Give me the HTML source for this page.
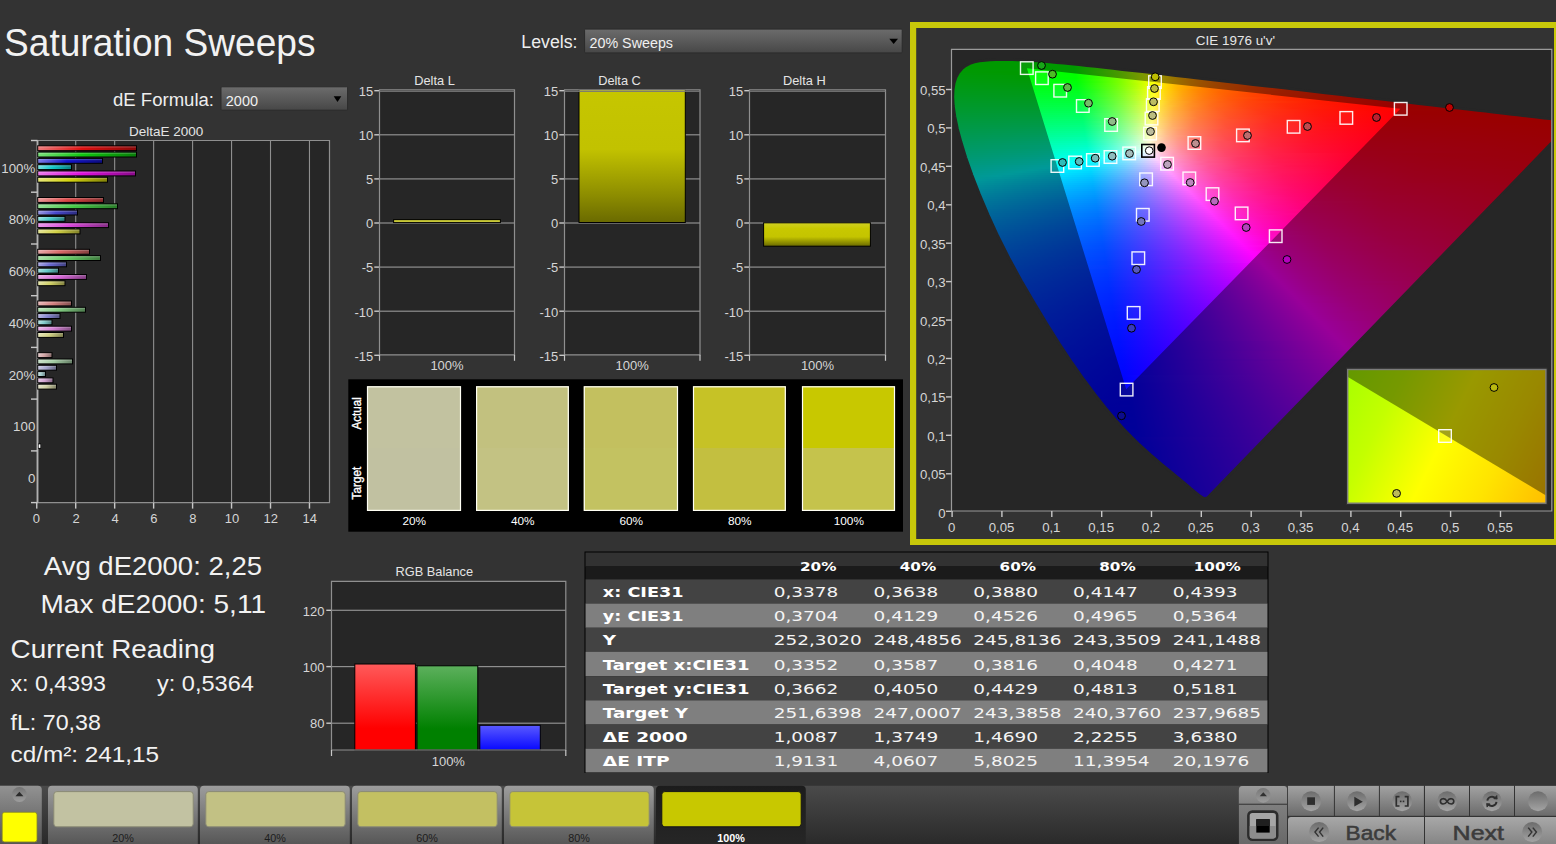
<!DOCTYPE html>
<html lang="en"><head><meta charset="utf-8"><title>Saturation Sweeps</title>
<style>
html,body{margin:0;padding:0;background:#333;overflow:hidden}
body{width:1556px;height:844px;position:relative;font-family:'Liberation Sans',sans-serif}
svg{position:absolute;left:0;top:0;display:block;font-family:'Liberation Sans',sans-serif}
text{white-space:pre}
</style></head><body>
<svg width="1556" height="844" viewBox="0 0 1556 844">
<defs><linearGradient id="dd" x1="0" y1="0" x2="0" y2="1"><stop offset="0" stop-color="#6c6c6c"/><stop offset="1" stop-color="#474747"/></linearGradient></defs>
<rect width="1556" height="844" fill="#333"/>
<text x="4.0" y="55.5" font-size="39" fill="#f2f2f2" textLength="311.5" lengthAdjust="spacingAndGlyphs">Saturation Sweeps</text>
<text x="113.0" y="106.0" font-size="18" fill="#eee" textLength="101.0" lengthAdjust="spacingAndGlyphs">dE Formula:</text>
<text x="521.3" y="48.0" font-size="18" fill="#eee" textLength="56.2" lengthAdjust="spacingAndGlyphs">Levels:</text>
<rect x="221" y="86.8" width="126.6" height="23.4" rx="1" fill="url(#dd)" stroke="#2b2b2b" stroke-width="1"/>
<text x="225.8" y="106.0" font-size="14.7" fill="#f0f0f0" textLength="32.2" lengthAdjust="spacingAndGlyphs">2000</text>
<path d="M333.7 96.2h7.6l-3.8 5.8z" fill="#000"/>
<rect x="584.6" y="29.1" width="317.6" height="23.8" rx="1" fill="url(#dd)" stroke="#2b2b2b" stroke-width="1"/>
<text x="589.5" y="48.0" font-size="14.7" fill="#f0f0f0" textLength="83.5" lengthAdjust="spacingAndGlyphs">20% Sweeps</text>
<path d="M889.3 38.8h8.7l-4.35 5.2z" fill="#000"/>
<rect x="37.5" y="140.5" width="292" height="362.1" fill="#262626"/>
<rect x="75.16" y="140.5" width="1.1" height="362.1" fill="#8f8f8f"/>
<rect x="114.12" y="140.5" width="1.1" height="362.1" fill="#8f8f8f"/>
<rect x="153.08" y="140.5" width="1.1" height="362.1" fill="#8f8f8f"/>
<rect x="192.04" y="140.5" width="1.1" height="362.1" fill="#8f8f8f"/>
<rect x="231.00" y="140.5" width="1.1" height="362.1" fill="#8f8f8f"/>
<rect x="269.96" y="140.5" width="1.1" height="362.1" fill="#8f8f8f"/>
<rect x="308.92" y="140.5" width="1.1" height="362.1" fill="#8f8f8f"/>
<path d="M37.5 140.5H329.5V502.6H37.5Z" fill="none" stroke="#8f8f8f" stroke-width="1.2"/>
<rect x="36.6" y="140.5" width="1.8" height="362.1" fill="#b0b0b0"/>
<rect x="31" y="139.8" width="6.5" height="1.4" fill="#c8c8c8"/>
<rect x="31" y="191.5" width="6.5" height="1.4" fill="#c8c8c8"/>
<rect x="31" y="243.3" width="6.5" height="1.4" fill="#c8c8c8"/>
<rect x="31" y="295.0" width="6.5" height="1.4" fill="#c8c8c8"/>
<rect x="31" y="346.7" width="6.5" height="1.4" fill="#c8c8c8"/>
<rect x="31" y="398.4" width="6.5" height="1.4" fill="#c8c8c8"/>
<rect x="31" y="450.2" width="6.5" height="1.4" fill="#c8c8c8"/>
<rect x="31" y="501.9" width="6.5" height="1.4" fill="#c8c8c8"/>
<rect x="36.05" y="502.6" width="1.4" height="6" fill="#c8c8c8"/>
<text x="36.4" y="523.3" font-size="13" fill="#d6d6d6" text-anchor="middle">0</text>
<rect x="75.01" y="502.6" width="1.4" height="6" fill="#c8c8c8"/>
<text x="76.0" y="523.3" font-size="13" fill="#d6d6d6" text-anchor="middle">2</text>
<rect x="113.97" y="502.6" width="1.4" height="6" fill="#c8c8c8"/>
<text x="115.0" y="523.3" font-size="13" fill="#d6d6d6" text-anchor="middle">4</text>
<rect x="152.93" y="502.6" width="1.4" height="6" fill="#c8c8c8"/>
<text x="153.9" y="523.3" font-size="13" fill="#d6d6d6" text-anchor="middle">6</text>
<rect x="191.89" y="502.6" width="1.4" height="6" fill="#c8c8c8"/>
<text x="192.9" y="523.3" font-size="13" fill="#d6d6d6" text-anchor="middle">8</text>
<rect x="230.85" y="502.6" width="1.4" height="6" fill="#c8c8c8"/>
<text x="231.9" y="523.3" font-size="13" fill="#d6d6d6" text-anchor="middle">10</text>
<rect x="269.81" y="502.6" width="1.4" height="6" fill="#c8c8c8"/>
<text x="270.8" y="523.3" font-size="13" fill="#d6d6d6" text-anchor="middle">12</text>
<rect x="308.77" y="502.6" width="1.4" height="6" fill="#c8c8c8"/>
<text x="309.8" y="523.3" font-size="13" fill="#d6d6d6" text-anchor="middle">14</text>
<text x="35.3" y="172.6" font-size="13.3" fill="#d6d6d6" text-anchor="end">100%</text>
<text x="35.3" y="224.3" font-size="13.3" fill="#d6d6d6" text-anchor="end">80%</text>
<text x="35.3" y="276.1" font-size="13.3" fill="#d6d6d6" text-anchor="end">60%</text>
<text x="35.3" y="327.8" font-size="13.3" fill="#d6d6d6" text-anchor="end">40%</text>
<text x="35.3" y="379.5" font-size="13.3" fill="#d6d6d6" text-anchor="end">20%</text>
<text x="35.3" y="431.2" font-size="13.3" fill="#d6d6d6" text-anchor="end">100</text>
<text x="35.3" y="483.0" font-size="13.3" fill="#d6d6d6" text-anchor="end">0</text>
<text x="129.0" y="136.2" font-size="12.8" fill="#e4e4e4" textLength="74.3" lengthAdjust="spacingAndGlyphs">DeltaE 2000</text>
<linearGradient id="b00" x1="0" x2="1"><stop offset="0" stop-color="#ec7b7b"/><stop offset=".45" stop-color="#de1010"/><stop offset="1" stop-color="#890909"/></linearGradient>
<rect x="37.7" y="145.8" width="98.8" height="4.9" fill="url(#b00)" stroke="#000" stroke-width="1"/>
<rect x="38.2" y="146.3" width="97.8" height="1.3" fill="#fff" opacity=".2"/>
<linearGradient id="b01" x1="0" x2="1"><stop offset="0" stop-color="#7be07b"/><stop offset=".45" stop-color="#10c810"/><stop offset="1" stop-color="#097c09"/></linearGradient>
<rect x="37.7" y="152.1" width="98.8" height="4.9" fill="url(#b01)" stroke="#000" stroke-width="1"/>
<rect x="38.2" y="152.6" width="97.8" height="1.3" fill="#fff" opacity=".2"/>
<linearGradient id="b02" x1="0" x2="1"><stop offset="0" stop-color="#7d7de3"/><stop offset=".45" stop-color="#1414cd"/><stop offset="1" stop-color="#0c0c7f"/></linearGradient>
<rect x="37.7" y="158.4" width="64.8" height="4.9" fill="url(#b02)" stroke="#000" stroke-width="1"/>
<rect x="38.2" y="158.9" width="63.8" height="1.3" fill="#fff" opacity=".2"/>
<linearGradient id="b03" x1="0" x2="1"><stop offset="0" stop-color="#7be0e0"/><stop offset=".45" stop-color="#10c8c8"/><stop offset="1" stop-color="#097c7c"/></linearGradient>
<rect x="37.7" y="164.7" width="33.8" height="4.9" fill="url(#b03)" stroke="#000" stroke-width="1"/>
<rect x="38.2" y="165.2" width="32.8" height="1.3" fill="#fff" opacity=".2"/>
<linearGradient id="b04" x1="0" x2="1"><stop offset="0" stop-color="#ec7bec"/><stop offset=".45" stop-color="#de10de"/><stop offset="1" stop-color="#890989"/></linearGradient>
<rect x="37.7" y="171.0" width="97.8" height="4.9" fill="url(#b04)" stroke="#000" stroke-width="1"/>
<rect x="38.2" y="171.5" width="96.8" height="1.3" fill="#fff" opacity=".2"/>
<linearGradient id="b05" x1="0" x2="1"><stop offset="0" stop-color="#e7e77b"/><stop offset=".45" stop-color="#d4d410"/><stop offset="1" stop-color="#838309"/></linearGradient>
<rect x="37.7" y="177.3" width="69.8" height="4.9" fill="url(#b05)" stroke="#000" stroke-width="1"/>
<rect x="38.2" y="177.8" width="68.8" height="1.3" fill="#fff" opacity=".2"/>
<linearGradient id="b10" x1="0" x2="1"><stop offset="0" stop-color="#ea9898"/><stop offset=".45" stop-color="#d94545"/><stop offset="1" stop-color="#862a2a"/></linearGradient>
<rect x="37.7" y="197.5" width="65.8" height="4.9" fill="url(#b10)" stroke="#000" stroke-width="1"/>
<rect x="38.2" y="198.0" width="64.8" height="1.3" fill="#fff" opacity=".2"/>
<linearGradient id="b11" x1="0" x2="1"><stop offset="0" stop-color="#98e198"/><stop offset=".45" stop-color="#45c945"/><stop offset="1" stop-color="#2a7c2a"/></linearGradient>
<rect x="37.7" y="203.8" width="79.8" height="4.9" fill="url(#b11)" stroke="#000" stroke-width="1"/>
<rect x="38.2" y="204.3" width="78.8" height="1.3" fill="#fff" opacity=".2"/>
<linearGradient id="b12" x1="0" x2="1"><stop offset="0" stop-color="#9a9ae3"/><stop offset=".45" stop-color="#4848cd"/><stop offset="1" stop-color="#2c2c7f"/></linearGradient>
<rect x="37.7" y="210.1" width="39.8" height="4.9" fill="url(#b12)" stroke="#000" stroke-width="1"/>
<rect x="38.2" y="210.6" width="38.8" height="1.3" fill="#fff" opacity=".2"/>
<linearGradient id="b13" x1="0" x2="1"><stop offset="0" stop-color="#98e1e1"/><stop offset=".45" stop-color="#45c9c9"/><stop offset="1" stop-color="#2a7c7c"/></linearGradient>
<rect x="37.7" y="216.4" width="27.3" height="4.9" fill="url(#b13)" stroke="#000" stroke-width="1"/>
<rect x="38.2" y="216.9" width="26.3" height="1.3" fill="#fff" opacity=".2"/>
<linearGradient id="b14" x1="0" x2="1"><stop offset="0" stop-color="#ea98ea"/><stop offset=".45" stop-color="#d945d9"/><stop offset="1" stop-color="#862a86"/></linearGradient>
<rect x="37.7" y="222.7" width="70.8" height="4.9" fill="url(#b14)" stroke="#000" stroke-width="1"/>
<rect x="38.2" y="223.2" width="69.8" height="1.3" fill="#fff" opacity=".2"/>
<linearGradient id="b15" x1="0" x2="1"><stop offset="0" stop-color="#e6e698"/><stop offset=".45" stop-color="#d2d245"/><stop offset="1" stop-color="#82822a"/></linearGradient>
<rect x="37.7" y="229.0" width="42.3" height="4.9" fill="url(#b15)" stroke="#000" stroke-width="1"/>
<rect x="38.2" y="229.5" width="41.3" height="1.3" fill="#fff" opacity=".2"/>
<linearGradient id="b20" x1="0" x2="1"><stop offset="0" stop-color="#e8aaaa"/><stop offset=".45" stop-color="#d66565"/><stop offset="1" stop-color="#843e3e"/></linearGradient>
<rect x="37.7" y="249.3" width="51.8" height="4.9" fill="url(#b20)" stroke="#000" stroke-width="1"/>
<rect x="38.2" y="249.8" width="50.8" height="1.3" fill="#fff" opacity=".2"/>
<linearGradient id="b21" x1="0" x2="1"><stop offset="0" stop-color="#aae1aa"/><stop offset=".45" stop-color="#65ca65"/><stop offset="1" stop-color="#3e7d3e"/></linearGradient>
<rect x="37.7" y="255.6" width="62.8" height="4.9" fill="url(#b21)" stroke="#000" stroke-width="1"/>
<rect x="38.2" y="256.1" width="61.8" height="1.3" fill="#fff" opacity=".2"/>
<linearGradient id="b22" x1="0" x2="1"><stop offset="0" stop-color="#ababe3"/><stop offset=".45" stop-color="#6767cd"/><stop offset="1" stop-color="#3f3f7f"/></linearGradient>
<rect x="37.7" y="261.9" width="28.8" height="4.9" fill="url(#b22)" stroke="#000" stroke-width="1"/>
<rect x="38.2" y="262.4" width="27.8" height="1.3" fill="#fff" opacity=".2"/>
<linearGradient id="b23" x1="0" x2="1"><stop offset="0" stop-color="#aae1e1"/><stop offset=".45" stop-color="#65caca"/><stop offset="1" stop-color="#3e7d7d"/></linearGradient>
<rect x="37.7" y="268.2" width="20.8" height="4.9" fill="url(#b23)" stroke="#000" stroke-width="1"/>
<rect x="38.2" y="268.7" width="19.8" height="1.3" fill="#fff" opacity=".2"/>
<linearGradient id="b24" x1="0" x2="1"><stop offset="0" stop-color="#e8aae8"/><stop offset=".45" stop-color="#d665d6"/><stop offset="1" stop-color="#843e84"/></linearGradient>
<rect x="37.7" y="274.5" width="48.8" height="4.9" fill="url(#b24)" stroke="#000" stroke-width="1"/>
<rect x="38.2" y="275.0" width="47.8" height="1.3" fill="#fff" opacity=".2"/>
<linearGradient id="b25" x1="0" x2="1"><stop offset="0" stop-color="#e5e5aa"/><stop offset=".45" stop-color="#d1d165"/><stop offset="1" stop-color="#81813e"/></linearGradient>
<rect x="37.7" y="280.8" width="27.3" height="4.9" fill="url(#b25)" stroke="#000" stroke-width="1"/>
<rect x="38.2" y="281.3" width="26.3" height="1.3" fill="#fff" opacity=".2"/>
<linearGradient id="b30" x1="0" x2="1"><stop offset="0" stop-color="#e7b9b9"/><stop offset=".45" stop-color="#d48181"/><stop offset="1" stop-color="#834f4f"/></linearGradient>
<rect x="37.7" y="301.0" width="33.8" height="4.9" fill="url(#b30)" stroke="#000" stroke-width="1"/>
<rect x="38.2" y="301.5" width="32.8" height="1.3" fill="#fff" opacity=".2"/>
<linearGradient id="b31" x1="0" x2="1"><stop offset="0" stop-color="#b9e2b9"/><stop offset=".45" stop-color="#81cb81"/><stop offset="1" stop-color="#4f7d4f"/></linearGradient>
<rect x="37.7" y="307.3" width="47.8" height="4.9" fill="url(#b31)" stroke="#000" stroke-width="1"/>
<rect x="38.2" y="307.8" width="46.8" height="1.3" fill="#fff" opacity=".2"/>
<linearGradient id="b32" x1="0" x2="1"><stop offset="0" stop-color="#babae3"/><stop offset=".45" stop-color="#8383cd"/><stop offset="1" stop-color="#51517f"/></linearGradient>
<rect x="37.7" y="313.6" width="22.3" height="4.9" fill="url(#b32)" stroke="#000" stroke-width="1"/>
<rect x="38.2" y="314.1" width="21.3" height="1.3" fill="#fff" opacity=".2"/>
<linearGradient id="b33" x1="0" x2="1"><stop offset="0" stop-color="#b9e2e2"/><stop offset=".45" stop-color="#81cbcb"/><stop offset="1" stop-color="#4f7d7d"/></linearGradient>
<rect x="37.7" y="319.9" width="14.3" height="4.9" fill="url(#b33)" stroke="#000" stroke-width="1"/>
<rect x="38.2" y="320.4" width="13.3" height="1.3" fill="#fff" opacity=".2"/>
<linearGradient id="b34" x1="0" x2="1"><stop offset="0" stop-color="#e7b9e7"/><stop offset=".45" stop-color="#d481d4"/><stop offset="1" stop-color="#834f83"/></linearGradient>
<rect x="37.7" y="326.2" width="33.8" height="4.9" fill="url(#b34)" stroke="#000" stroke-width="1"/>
<rect x="38.2" y="326.7" width="32.8" height="1.3" fill="#fff" opacity=".2"/>
<linearGradient id="b35" x1="0" x2="1"><stop offset="0" stop-color="#e5e5b9"/><stop offset=".45" stop-color="#d0d081"/><stop offset="1" stop-color="#80804f"/></linearGradient>
<rect x="37.7" y="332.5" width="25.8" height="4.9" fill="url(#b35)" stroke="#000" stroke-width="1"/>
<rect x="38.2" y="333.0" width="24.8" height="1.3" fill="#fff" opacity=".2"/>
<linearGradient id="b40" x1="0" x2="1"><stop offset="0" stop-color="#e5cccc"/><stop offset=".45" stop-color="#d1a3a3"/><stop offset="1" stop-color="#816565"/></linearGradient>
<rect x="37.7" y="352.7" width="14.3" height="4.9" fill="url(#b40)" stroke="#000" stroke-width="1"/>
<rect x="38.2" y="353.2" width="13.3" height="1.3" fill="#fff" opacity=".2"/>
<linearGradient id="b41" x1="0" x2="1"><stop offset="0" stop-color="#cce2cc"/><stop offset=".45" stop-color="#a3cca3"/><stop offset="1" stop-color="#657e65"/></linearGradient>
<rect x="37.7" y="359.0" width="34.8" height="4.9" fill="url(#b41)" stroke="#000" stroke-width="1"/>
<rect x="38.2" y="359.5" width="33.8" height="1.3" fill="#fff" opacity=".2"/>
<linearGradient id="b42" x1="0" x2="1"><stop offset="0" stop-color="#cccce3"/><stop offset=".45" stop-color="#a4a4cd"/><stop offset="1" stop-color="#65657f"/></linearGradient>
<rect x="37.7" y="365.3" width="18.8" height="4.9" fill="url(#b42)" stroke="#000" stroke-width="1"/>
<rect x="38.2" y="365.8" width="17.8" height="1.3" fill="#fff" opacity=".2"/>
<linearGradient id="b43" x1="0" x2="1"><stop offset="0" stop-color="#cce2e2"/><stop offset=".45" stop-color="#a3cccc"/><stop offset="1" stop-color="#657e7e"/></linearGradient>
<rect x="37.7" y="371.6" width="7.8" height="4.9" fill="url(#b43)" stroke="#000" stroke-width="1"/>
<rect x="38.2" y="372.1" width="6.8" height="1.3" fill="#fff" opacity=".2"/>
<linearGradient id="b44" x1="0" x2="1"><stop offset="0" stop-color="#e5cce5"/><stop offset=".45" stop-color="#d1a3d1"/><stop offset="1" stop-color="#816581"/></linearGradient>
<rect x="37.7" y="377.9" width="15.3" height="4.9" fill="url(#b44)" stroke="#000" stroke-width="1"/>
<rect x="38.2" y="378.4" width="14.3" height="1.3" fill="#fff" opacity=".2"/>
<linearGradient id="b45" x1="0" x2="1"><stop offset="0" stop-color="#e4e4cc"/><stop offset=".45" stop-color="#cfcfa3"/><stop offset="1" stop-color="#808065"/></linearGradient>
<rect x="37.7" y="384.2" width="18.8" height="4.9" fill="url(#b45)" stroke="#000" stroke-width="1"/>
<rect x="38.2" y="384.7" width="17.8" height="1.3" fill="#fff" opacity=".2"/>
<rect x="38" y="443.6" width="3" height="5" fill="#000"/><rect x="38.6" y="444.3" width="1.8" height="3.6" fill="#fff"/>
<text x="43.8" y="574.5" font-size="26.2" fill="#f2f2f2" textLength="218.2" lengthAdjust="spacingAndGlyphs">Avg dE2000: 2,25</text>
<text x="40.5" y="612.5" font-size="26.2" fill="#f2f2f2" textLength="225.5" lengthAdjust="spacingAndGlyphs">Max dE2000: 5,11</text>
<text x="10.5" y="657.5" font-size="26.5" fill="#f2f2f2" textLength="204.5" lengthAdjust="spacingAndGlyphs">Current Reading</text>
<text x="10.5" y="691.0" font-size="21.6" fill="#f2f2f2" textLength="95.5" lengthAdjust="spacingAndGlyphs">x: 0,4393</text>
<text x="157.0" y="691.0" font-size="21.6" fill="#f2f2f2" textLength="96.8" lengthAdjust="spacingAndGlyphs">y: 0,5364</text>
<text x="10.5" y="729.8" font-size="21.6" fill="#f2f2f2" textLength="90.3" lengthAdjust="spacingAndGlyphs">fL: 70,38</text>
<text x="10.5" y="761.8" font-size="21.6" fill="#f2f2f2" textLength="148.5" lengthAdjust="spacingAndGlyphs">cd/m²: 241,15</text>
<linearGradient id="yc" x1="0" y1="0" x2="0" y2="1"><stop offset="0" stop-color="#c6c600"/><stop offset=".45" stop-color="#c2c200"/><stop offset=".8" stop-color="#8c8c00"/><stop offset="1" stop-color="#6a6a00"/></linearGradient>
<linearGradient id="yh" x1="0" y1="0" x2="0" y2="1"><stop offset="0" stop-color="#d0d024"/><stop offset=".25" stop-color="#c8c800"/><stop offset=".6" stop-color="#c4c400"/><stop offset="1" stop-color="#6a6a00"/></linearGradient>
<rect x="379.5" y="89.5" width="135" height="265.3" fill="#262626"/>
<rect x="374.3" y="90.0" width="5.5" height="1.4" fill="#c8c8c8"/>
<text x="373.2" y="96.0" font-size="13" fill="#d6d6d6" text-anchor="end">15</text>
<rect x="379.5" y="134.2" width="135" height="1.2" fill="#8f8f8f"/>
<rect x="374.3" y="134.1" width="5.5" height="1.4" fill="#c8c8c8"/>
<text x="373.2" y="140.1" font-size="13" fill="#d6d6d6" text-anchor="end">10</text>
<rect x="379.5" y="178.3" width="135" height="1.2" fill="#8f8f8f"/>
<rect x="374.3" y="178.2" width="5.5" height="1.4" fill="#c8c8c8"/>
<text x="373.2" y="184.2" font-size="13" fill="#d6d6d6" text-anchor="end">5</text>
<rect x="379.5" y="222.4" width="135" height="1.2" fill="#8f8f8f"/>
<rect x="374.3" y="222.3" width="5.5" height="1.4" fill="#c8c8c8"/>
<text x="373.2" y="228.3" font-size="13" fill="#d6d6d6" text-anchor="end">0</text>
<rect x="379.5" y="266.5" width="135" height="1.2" fill="#8f8f8f"/>
<rect x="374.3" y="266.4" width="5.5" height="1.4" fill="#c8c8c8"/>
<text x="373.2" y="272.4" font-size="13" fill="#d6d6d6" text-anchor="end">-5</text>
<rect x="379.5" y="310.6" width="135" height="1.2" fill="#8f8f8f"/>
<rect x="374.3" y="310.5" width="5.5" height="1.4" fill="#c8c8c8"/>
<text x="373.2" y="316.5" font-size="13" fill="#d6d6d6" text-anchor="end">-10</text>
<rect x="374.3" y="354.6" width="5.5" height="1.4" fill="#c8c8c8"/>
<text x="373.2" y="360.6" font-size="13" fill="#d6d6d6" text-anchor="end">-15</text>
<rect x="393.6" y="219.6" width="106.8" height="3" fill="#c8c838" stroke="#000" stroke-width="1"/>
<path d="M379.5 89.8H514.5V354.8H379.5Z" fill="none" stroke="#8f8f8f" stroke-width="1.2"/>
<rect x="379.5" y="90.9" width="135" height="1" fill="#777"/>
<rect x="378.9" y="354.8" width="1.2" height="6" fill="#c8c8c8"/>
<rect x="513.9" y="354.8" width="1.2" height="6" fill="#c8c8c8"/>
<text x="447.0" y="370.3" font-size="13" fill="#d6d6d6" text-anchor="middle">100%</text>
<text x="434.5" y="85.0" font-size="12.8" fill="#e4e4e4" text-anchor="middle">Delta L</text>
<rect x="564.5" y="89.5" width="135.5" height="265.3" fill="#262626"/>
<rect x="559.3" y="90.0" width="5.5" height="1.4" fill="#c8c8c8"/>
<text x="558.2" y="96.0" font-size="13" fill="#d6d6d6" text-anchor="end">15</text>
<rect x="564.5" y="134.2" width="135.5" height="1.2" fill="#8f8f8f"/>
<rect x="559.3" y="134.1" width="5.5" height="1.4" fill="#c8c8c8"/>
<text x="558.2" y="140.1" font-size="13" fill="#d6d6d6" text-anchor="end">10</text>
<rect x="564.5" y="178.3" width="135.5" height="1.2" fill="#8f8f8f"/>
<rect x="559.3" y="178.2" width="5.5" height="1.4" fill="#c8c8c8"/>
<text x="558.2" y="184.2" font-size="13" fill="#d6d6d6" text-anchor="end">5</text>
<rect x="564.5" y="222.4" width="135.5" height="1.2" fill="#8f8f8f"/>
<rect x="559.3" y="222.3" width="5.5" height="1.4" fill="#c8c8c8"/>
<text x="558.2" y="228.3" font-size="13" fill="#d6d6d6" text-anchor="end">0</text>
<rect x="564.5" y="266.5" width="135.5" height="1.2" fill="#8f8f8f"/>
<rect x="559.3" y="266.4" width="5.5" height="1.4" fill="#c8c8c8"/>
<text x="558.2" y="272.4" font-size="13" fill="#d6d6d6" text-anchor="end">-5</text>
<rect x="564.5" y="310.6" width="135.5" height="1.2" fill="#8f8f8f"/>
<rect x="559.3" y="310.5" width="5.5" height="1.4" fill="#c8c8c8"/>
<text x="558.2" y="316.5" font-size="13" fill="#d6d6d6" text-anchor="end">-10</text>
<rect x="559.3" y="354.6" width="5.5" height="1.4" fill="#c8c8c8"/>
<text x="558.2" y="360.6" font-size="13" fill="#d6d6d6" text-anchor="end">-15</text>
<rect x="579" y="89.5" width="106.3" height="133" fill="url(#yc)" stroke="#000" stroke-width="1"/>
<path d="M564.5 89.8H700V354.8H564.5Z" fill="none" stroke="#8f8f8f" stroke-width="1.2"/>
<rect x="564.5" y="90.9" width="135.5" height="1" fill="#777"/>
<rect x="563.9" y="354.8" width="1.2" height="6" fill="#c8c8c8"/>
<rect x="699.4" y="354.8" width="1.2" height="6" fill="#c8c8c8"/>
<text x="632.2" y="370.3" font-size="13" fill="#d6d6d6" text-anchor="middle">100%</text>
<text x="619.5" y="85.0" font-size="12.8" fill="#e4e4e4" text-anchor="middle">Delta C</text>
<rect x="749.5" y="89.5" width="136" height="265.3" fill="#262626"/>
<rect x="744.3" y="90.0" width="5.5" height="1.4" fill="#c8c8c8"/>
<text x="743.2" y="96.0" font-size="13" fill="#d6d6d6" text-anchor="end">15</text>
<rect x="749.5" y="134.2" width="136" height="1.2" fill="#8f8f8f"/>
<rect x="744.3" y="134.1" width="5.5" height="1.4" fill="#c8c8c8"/>
<text x="743.2" y="140.1" font-size="13" fill="#d6d6d6" text-anchor="end">10</text>
<rect x="749.5" y="178.3" width="136" height="1.2" fill="#8f8f8f"/>
<rect x="744.3" y="178.2" width="5.5" height="1.4" fill="#c8c8c8"/>
<text x="743.2" y="184.2" font-size="13" fill="#d6d6d6" text-anchor="end">5</text>
<rect x="749.5" y="222.4" width="136" height="1.2" fill="#8f8f8f"/>
<rect x="744.3" y="222.3" width="5.5" height="1.4" fill="#c8c8c8"/>
<text x="743.2" y="228.3" font-size="13" fill="#d6d6d6" text-anchor="end">0</text>
<rect x="749.5" y="266.5" width="136" height="1.2" fill="#8f8f8f"/>
<rect x="744.3" y="266.4" width="5.5" height="1.4" fill="#c8c8c8"/>
<text x="743.2" y="272.4" font-size="13" fill="#d6d6d6" text-anchor="end">-5</text>
<rect x="749.5" y="310.6" width="136" height="1.2" fill="#8f8f8f"/>
<rect x="744.3" y="310.5" width="5.5" height="1.4" fill="#c8c8c8"/>
<text x="743.2" y="316.5" font-size="13" fill="#d6d6d6" text-anchor="end">-10</text>
<rect x="744.3" y="354.6" width="5.5" height="1.4" fill="#c8c8c8"/>
<text x="743.2" y="360.6" font-size="13" fill="#d6d6d6" text-anchor="end">-15</text>
<rect x="763.6" y="222.8" width="106.8" height="23.4" fill="url(#yh)" stroke="#000" stroke-width="1"/>
<path d="M749.5 89.8H885.5V354.8H749.5Z" fill="none" stroke="#8f8f8f" stroke-width="1.2"/>
<rect x="749.5" y="90.9" width="136" height="1" fill="#777"/>
<rect x="748.9" y="354.8" width="1.2" height="6" fill="#c8c8c8"/>
<rect x="884.9" y="354.8" width="1.2" height="6" fill="#c8c8c8"/>
<text x="817.5" y="370.3" font-size="13" fill="#d6d6d6" text-anchor="middle">100%</text>
<text x="804.3" y="85.0" font-size="12.8" fill="#e4e4e4" text-anchor="middle">Delta H</text>
<rect x="348.3" y="379.3" width="554.7" height="152.4" fill="#000"/>
<rect x="367" y="386.3" width="94" height="62" fill="#c2c2a0"/>
<rect x="367" y="448" width="94" height="62.7" fill="#c1c1a1"/>
<rect x="367.5" y="386.8" width="93" height="123.6" fill="none" stroke="#fffff4" stroke-width="1.2"/>
<text x="414.3" y="525.0" font-size="11.8" fill="#fff" text-anchor="middle">20%</text>
<rect x="476.1" y="386.3" width="92.7" height="62" fill="#c2c17f"/>
<rect x="476.1" y="448" width="92.7" height="62.7" fill="#c3c283"/>
<rect x="476.6" y="386.8" width="91.7" height="123.6" fill="none" stroke="#fffff4" stroke-width="1.2"/>
<text x="522.8" y="525.0" font-size="11.8" fill="#fff" text-anchor="middle">40%</text>
<rect x="583.8" y="386.3" width="94.2" height="62" fill="#c3c05f"/>
<rect x="583.8" y="448" width="94.2" height="62.7" fill="#c3c261"/>
<rect x="584.3" y="386.8" width="93.2" height="123.6" fill="none" stroke="#fffff4" stroke-width="1.2"/>
<text x="631.2" y="525.0" font-size="11.8" fill="#fff" text-anchor="middle">60%</text>
<rect x="693" y="386.3" width="92.8" height="62" fill="#c6c226"/>
<rect x="693" y="448" width="92.8" height="62.7" fill="#c3bf40"/>
<rect x="693.5" y="386.8" width="91.8" height="123.6" fill="none" stroke="#fffff4" stroke-width="1.2"/>
<text x="739.7" y="525.0" font-size="11.8" fill="#fff" text-anchor="middle">80%</text>
<rect x="802" y="386.3" width="93" height="62" fill="#c8c800"/>
<rect x="802" y="448" width="93" height="62.7" fill="#c5c34c"/>
<rect x="802.5" y="386.8" width="92" height="123.6" fill="none" stroke="#fffff4" stroke-width="1.2"/>
<text x="848.8" y="525.0" font-size="11.8" fill="#fff" text-anchor="middle">100%</text>
<text x="0.0" y="0.0" font-size="12.3" fill="#fff" text-anchor="middle" textLength="32.3" lengthAdjust="spacingAndGlyphs" stroke="#fff" stroke-width=".35" transform="translate(361.2 413.3) rotate(-90)">Actual</text>
<text x="0.0" y="0.0" font-size="12.3" fill="#fff" text-anchor="middle" textLength="32.6" lengthAdjust="spacingAndGlyphs" stroke="#fff" stroke-width=".35" transform="translate(361.2 483.1) rotate(-90)">Target</text>
<rect x="331.5" y="581.3" width="234.3" height="168.7" fill="#262626"/>
<rect x="331.5" y="609.7" width="234.3" height="1.2" fill="#8f8f8f"/>
<rect x="326.3" y="609.6" width="5.5" height="1.4" fill="#c8c8c8"/>
<text x="324.5" y="615.5" font-size="13" fill="#d6d6d6" text-anchor="end">120</text>
<rect x="331.5" y="666.0" width="234.3" height="1.2" fill="#8f8f8f"/>
<rect x="326.3" y="665.9" width="5.5" height="1.4" fill="#c8c8c8"/>
<text x="324.5" y="671.8" font-size="13" fill="#d6d6d6" text-anchor="end">100</text>
<rect x="331.5" y="722.6" width="234.3" height="1.2" fill="#8f8f8f"/>
<rect x="326.3" y="722.5" width="5.5" height="1.4" fill="#c8c8c8"/>
<text x="324.5" y="728.4" font-size="13" fill="#d6d6d6" text-anchor="end">80</text>
<linearGradient id="rr" x1="0" y1="0" x2="0" y2="1"><stop offset="0" stop-color="#ff5a5a"/><stop offset=".75" stop-color="#ff0000"/></linearGradient>
<linearGradient id="rg" x1="0" y1="0" x2="0" y2="1"><stop offset="0" stop-color="#5cb05c"/><stop offset=".75" stop-color="#008000"/></linearGradient>
<linearGradient id="rb" x1="0" y1="0" x2="0" y2="1"><stop offset="0" stop-color="#5a5aff"/><stop offset="1" stop-color="#0808ff"/></linearGradient>
<rect x="354.8" y="664" width="60.6" height="86" fill="url(#rr)" stroke="#000" stroke-width="1"/>
<rect x="417" y="665.8" width="60.8" height="84.2" fill="url(#rg)" stroke="#000" stroke-width="1"/>
<rect x="479.8" y="725.3" width="60.5" height="24.7" fill="url(#rb)" stroke="#000" stroke-width="1"/>
<path d="M331.5 581.3H565.8V750H331.5Z" fill="none" stroke="#8f8f8f" stroke-width="1.2"/>
<rect x="330.9" y="750" width="1.2" height="6" fill="#c8c8c8"/>
<rect x="565.2" y="750" width="1.2" height="6" fill="#c8c8c8"/>
<text x="448.3" y="766.0" font-size="13" fill="#d6d6d6" text-anchor="middle">100%</text>
<text x="434.3" y="576.0" font-size="12.8" fill="#e4e4e4" text-anchor="middle">RGB Balance</text>
<rect x="584.5" y="551.5" width="684" height="221.5" fill="#000"/>
<rect x="585.5" y="552.5" width="682" height="14" fill="#323232"/>
<rect x="585.5" y="566" width="682" height="13.5" fill="#1b1b1b"/>
<text x="818.2" y="571.3" font-size="12.7" fill="#fff" text-anchor="middle" textLength="36.5" lengthAdjust="spacingAndGlyphs" font-family="'DejaVu Sans','Liberation Sans',sans-serif" font-weight="700">20%</text>
<text x="918.0" y="571.3" font-size="12.7" fill="#fff" text-anchor="middle" textLength="36.5" lengthAdjust="spacingAndGlyphs" font-family="'DejaVu Sans','Liberation Sans',sans-serif" font-weight="700">40%</text>
<text x="1017.8" y="571.3" font-size="12.7" fill="#fff" text-anchor="middle" textLength="36.5" lengthAdjust="spacingAndGlyphs" font-family="'DejaVu Sans','Liberation Sans',sans-serif" font-weight="700">60%</text>
<text x="1117.5" y="571.3" font-size="12.7" fill="#fff" text-anchor="middle" textLength="36.5" lengthAdjust="spacingAndGlyphs" font-family="'DejaVu Sans','Liberation Sans',sans-serif" font-weight="700">80%</text>
<text x="1217.3" y="571.3" font-size="12.7" fill="#fff" text-anchor="middle" textLength="47.1" lengthAdjust="spacingAndGlyphs" font-family="'DejaVu Sans','Liberation Sans',sans-serif" font-weight="700">100%</text>
<rect x="585.5" y="579.3" width="682" height="24.3" fill="#434343"/>
<text x="602.8" y="597.0" font-size="14.6" fill="#fff" textLength="80.8" lengthAdjust="spacingAndGlyphs" font-family="'DejaVu Sans','Liberation Sans',sans-serif" font-weight="700">x: CIE31</text>
<text x="773.7" y="597.0" font-size="14.5" fill="#f4f4f4" textLength="64.7" lengthAdjust="spacingAndGlyphs" font-family="'DejaVu Sans','Liberation Sans',sans-serif">0,3378</text>
<text x="873.5" y="597.0" font-size="14.5" fill="#f4f4f4" textLength="64.7" lengthAdjust="spacingAndGlyphs" font-family="'DejaVu Sans','Liberation Sans',sans-serif">0,3638</text>
<text x="973.3" y="597.0" font-size="14.5" fill="#f4f4f4" textLength="64.7" lengthAdjust="spacingAndGlyphs" font-family="'DejaVu Sans','Liberation Sans',sans-serif">0,3880</text>
<text x="1073.0" y="597.0" font-size="14.5" fill="#f4f4f4" textLength="64.7" lengthAdjust="spacingAndGlyphs" font-family="'DejaVu Sans','Liberation Sans',sans-serif">0,4147</text>
<text x="1172.8" y="597.0" font-size="14.5" fill="#f4f4f4" textLength="64.7" lengthAdjust="spacingAndGlyphs" font-family="'DejaVu Sans','Liberation Sans',sans-serif">0,4393</text>
<rect x="585.5" y="603.5" width="682" height="24.3" fill="#7f7f7f"/>
<text x="602.8" y="621.2" font-size="14.6" fill="#fff" textLength="80.8" lengthAdjust="spacingAndGlyphs" font-family="'DejaVu Sans','Liberation Sans',sans-serif" font-weight="700">y: CIE31</text>
<text x="773.7" y="621.2" font-size="14.5" fill="#f4f4f4" textLength="64.7" lengthAdjust="spacingAndGlyphs" font-family="'DejaVu Sans','Liberation Sans',sans-serif">0,3704</text>
<text x="873.5" y="621.2" font-size="14.5" fill="#f4f4f4" textLength="64.7" lengthAdjust="spacingAndGlyphs" font-family="'DejaVu Sans','Liberation Sans',sans-serif">0,4129</text>
<text x="973.3" y="621.2" font-size="14.5" fill="#f4f4f4" textLength="64.7" lengthAdjust="spacingAndGlyphs" font-family="'DejaVu Sans','Liberation Sans',sans-serif">0,4526</text>
<text x="1073.0" y="621.2" font-size="14.5" fill="#f4f4f4" textLength="64.7" lengthAdjust="spacingAndGlyphs" font-family="'DejaVu Sans','Liberation Sans',sans-serif">0,4965</text>
<text x="1172.8" y="621.2" font-size="14.5" fill="#f4f4f4" textLength="64.7" lengthAdjust="spacingAndGlyphs" font-family="'DejaVu Sans','Liberation Sans',sans-serif">0,5364</text>
<rect x="585.5" y="627.7" width="682" height="24.3" fill="#434343"/>
<text x="602.8" y="645.4" font-size="14.6" fill="#fff" textLength="13.3" lengthAdjust="spacingAndGlyphs" font-family="'DejaVu Sans','Liberation Sans',sans-serif" font-weight="700">Y</text>
<text x="773.7" y="645.4" font-size="14.5" fill="#f4f4f4" textLength="88.2" lengthAdjust="spacingAndGlyphs" font-family="'DejaVu Sans','Liberation Sans',sans-serif">252,3020</text>
<text x="873.5" y="645.4" font-size="14.5" fill="#f4f4f4" textLength="88.2" lengthAdjust="spacingAndGlyphs" font-family="'DejaVu Sans','Liberation Sans',sans-serif">248,4856</text>
<text x="973.3" y="645.4" font-size="14.5" fill="#f4f4f4" textLength="88.2" lengthAdjust="spacingAndGlyphs" font-family="'DejaVu Sans','Liberation Sans',sans-serif">245,8136</text>
<text x="1073.0" y="645.4" font-size="14.5" fill="#f4f4f4" textLength="88.2" lengthAdjust="spacingAndGlyphs" font-family="'DejaVu Sans','Liberation Sans',sans-serif">243,3509</text>
<text x="1172.8" y="645.4" font-size="14.5" fill="#f4f4f4" textLength="88.2" lengthAdjust="spacingAndGlyphs" font-family="'DejaVu Sans','Liberation Sans',sans-serif">241,1488</text>
<rect x="585.5" y="651.9" width="682" height="24.3" fill="#7f7f7f"/>
<text x="602.8" y="669.6" font-size="14.6" fill="#fff" textLength="146.8" lengthAdjust="spacingAndGlyphs" font-family="'DejaVu Sans','Liberation Sans',sans-serif" font-weight="700">Target x:CIE31</text>
<text x="773.7" y="669.6" font-size="14.5" fill="#f4f4f4" textLength="64.7" lengthAdjust="spacingAndGlyphs" font-family="'DejaVu Sans','Liberation Sans',sans-serif">0,3352</text>
<text x="873.5" y="669.6" font-size="14.5" fill="#f4f4f4" textLength="64.7" lengthAdjust="spacingAndGlyphs" font-family="'DejaVu Sans','Liberation Sans',sans-serif">0,3587</text>
<text x="973.3" y="669.6" font-size="14.5" fill="#f4f4f4" textLength="64.7" lengthAdjust="spacingAndGlyphs" font-family="'DejaVu Sans','Liberation Sans',sans-serif">0,3816</text>
<text x="1073.0" y="669.6" font-size="14.5" fill="#f4f4f4" textLength="64.7" lengthAdjust="spacingAndGlyphs" font-family="'DejaVu Sans','Liberation Sans',sans-serif">0,4048</text>
<text x="1172.8" y="669.6" font-size="14.5" fill="#f4f4f4" textLength="64.7" lengthAdjust="spacingAndGlyphs" font-family="'DejaVu Sans','Liberation Sans',sans-serif">0,4271</text>
<rect x="585.5" y="676.1" width="682" height="24.3" fill="#434343"/>
<text x="602.8" y="693.8" font-size="14.6" fill="#fff" textLength="146.8" lengthAdjust="spacingAndGlyphs" font-family="'DejaVu Sans','Liberation Sans',sans-serif" font-weight="700">Target y:CIE31</text>
<text x="773.7" y="693.8" font-size="14.5" fill="#f4f4f4" textLength="64.7" lengthAdjust="spacingAndGlyphs" font-family="'DejaVu Sans','Liberation Sans',sans-serif">0,3662</text>
<text x="873.5" y="693.8" font-size="14.5" fill="#f4f4f4" textLength="64.7" lengthAdjust="spacingAndGlyphs" font-family="'DejaVu Sans','Liberation Sans',sans-serif">0,4050</text>
<text x="973.3" y="693.8" font-size="14.5" fill="#f4f4f4" textLength="64.7" lengthAdjust="spacingAndGlyphs" font-family="'DejaVu Sans','Liberation Sans',sans-serif">0,4429</text>
<text x="1073.0" y="693.8" font-size="14.5" fill="#f4f4f4" textLength="64.7" lengthAdjust="spacingAndGlyphs" font-family="'DejaVu Sans','Liberation Sans',sans-serif">0,4813</text>
<text x="1172.8" y="693.8" font-size="14.5" fill="#f4f4f4" textLength="64.7" lengthAdjust="spacingAndGlyphs" font-family="'DejaVu Sans','Liberation Sans',sans-serif">0,5181</text>
<rect x="585.5" y="700.3" width="682" height="24.3" fill="#7f7f7f"/>
<text x="602.8" y="718.0" font-size="14.6" fill="#fff" textLength="85.3" lengthAdjust="spacingAndGlyphs" font-family="'DejaVu Sans','Liberation Sans',sans-serif" font-weight="700">Target Y</text>
<text x="773.7" y="718.0" font-size="14.5" fill="#f4f4f4" textLength="88.2" lengthAdjust="spacingAndGlyphs" font-family="'DejaVu Sans','Liberation Sans',sans-serif">251,6398</text>
<text x="873.5" y="718.0" font-size="14.5" fill="#f4f4f4" textLength="88.2" lengthAdjust="spacingAndGlyphs" font-family="'DejaVu Sans','Liberation Sans',sans-serif">247,0007</text>
<text x="973.3" y="718.0" font-size="14.5" fill="#f4f4f4" textLength="88.2" lengthAdjust="spacingAndGlyphs" font-family="'DejaVu Sans','Liberation Sans',sans-serif">243,3858</text>
<text x="1073.0" y="718.0" font-size="14.5" fill="#f4f4f4" textLength="88.2" lengthAdjust="spacingAndGlyphs" font-family="'DejaVu Sans','Liberation Sans',sans-serif">240,3760</text>
<text x="1172.8" y="718.0" font-size="14.5" fill="#f4f4f4" textLength="88.2" lengthAdjust="spacingAndGlyphs" font-family="'DejaVu Sans','Liberation Sans',sans-serif">237,9685</text>
<rect x="585.5" y="724.5" width="682" height="24.3" fill="#434343"/>
<text x="602.8" y="742.2" font-size="14.6" fill="#fff" textLength="84.8" lengthAdjust="spacingAndGlyphs" font-family="'DejaVu Sans','Liberation Sans',sans-serif" font-weight="700">ΔE 2000</text>
<text x="773.7" y="742.2" font-size="14.5" fill="#f4f4f4" textLength="64.7" lengthAdjust="spacingAndGlyphs" font-family="'DejaVu Sans','Liberation Sans',sans-serif">1,0087</text>
<text x="873.5" y="742.2" font-size="14.5" fill="#f4f4f4" textLength="64.7" lengthAdjust="spacingAndGlyphs" font-family="'DejaVu Sans','Liberation Sans',sans-serif">1,3749</text>
<text x="973.3" y="742.2" font-size="14.5" fill="#f4f4f4" textLength="64.7" lengthAdjust="spacingAndGlyphs" font-family="'DejaVu Sans','Liberation Sans',sans-serif">1,4690</text>
<text x="1073.0" y="742.2" font-size="14.5" fill="#f4f4f4" textLength="64.7" lengthAdjust="spacingAndGlyphs" font-family="'DejaVu Sans','Liberation Sans',sans-serif">2,2255</text>
<text x="1172.8" y="742.2" font-size="14.5" fill="#f4f4f4" textLength="64.7" lengthAdjust="spacingAndGlyphs" font-family="'DejaVu Sans','Liberation Sans',sans-serif">3,6380</text>
<rect x="585.5" y="748.7" width="682" height="23.8" fill="#7f7f7f"/>
<text x="602.8" y="766.4" font-size="14.6" fill="#fff" textLength="66.8" lengthAdjust="spacingAndGlyphs" font-family="'DejaVu Sans','Liberation Sans',sans-serif" font-weight="700">ΔE ITP</text>
<text x="773.7" y="766.4" font-size="14.5" fill="#f4f4f4" textLength="64.7" lengthAdjust="spacingAndGlyphs" font-family="'DejaVu Sans','Liberation Sans',sans-serif">1,9131</text>
<text x="873.5" y="766.4" font-size="14.5" fill="#f4f4f4" textLength="64.7" lengthAdjust="spacingAndGlyphs" font-family="'DejaVu Sans','Liberation Sans',sans-serif">4,0607</text>
<text x="973.3" y="766.4" font-size="14.5" fill="#f4f4f4" textLength="64.7" lengthAdjust="spacingAndGlyphs" font-family="'DejaVu Sans','Liberation Sans',sans-serif">5,8025</text>
<text x="1073.0" y="766.4" font-size="14.5" fill="#f4f4f4" textLength="76.5" lengthAdjust="spacingAndGlyphs" font-family="'DejaVu Sans','Liberation Sans',sans-serif">11,3954</text>
<text x="1172.8" y="766.4" font-size="14.5" fill="#f4f4f4" textLength="76.5" lengthAdjust="spacingAndGlyphs" font-family="'DejaVu Sans','Liberation Sans',sans-serif">20,1976</text>
<path d="M910 22H1560V545H910Z M916.2 28V538.9H1554V28Z" fill="#c8c80a" fill-rule="evenodd"/>
<rect x="951.5" y="49.3" width="600.3" height="461.7" fill="#262626"/>
<defs><linearGradient id="g0" gradientUnits="userSpaceOnUse" x1="980" x2="1036"><stop offset="0" stop-color="#00ff00"/><stop offset="1" stop-color="#00ff00"/></linearGradient><linearGradient id="g1" gradientUnits="userSpaceOnUse" x1="971" x2="1060"><stop offset="0" stop-color="#00ff00"/><stop offset="1" stop-color="#00ff00"/></linearGradient><linearGradient id="g2" gradientUnits="userSpaceOnUse" x1="966" x2="1080"><stop offset="0" stop-color="#00ff00"/><stop offset="0.9386" stop-color="#00ff00"/><stop offset="1" stop-color="#0fff00"/></linearGradient><linearGradient id="g3" gradientUnits="userSpaceOnUse" x1="963" x2="1099"><stop offset="0" stop-color="#00ff00"/><stop offset="0.8162" stop-color="#00ff00"/><stop offset="1" stop-color="#40ff00"/></linearGradient><linearGradient id="g4" gradientUnits="userSpaceOnUse" x1="960" x2="1117"><stop offset="0" stop-color="#00ff01"/><stop offset="0.7261" stop-color="#00ff00"/><stop offset="0.8726" stop-color="#3aff00"/><stop offset="1" stop-color="#75ff00"/></linearGradient><linearGradient id="g5" gradientUnits="userSpaceOnUse" x1="959" x2="1135"><stop offset="0" stop-color="#00ff05"/><stop offset="0.6534" stop-color="#00ff00"/><stop offset="0.8295" stop-color="#50ff00"/><stop offset="1" stop-color="#b0ff00"/></linearGradient><linearGradient id="g6" gradientUnits="userSpaceOnUse" x1="957" x2="1153"><stop offset="0" stop-color="#00ff08"/><stop offset="0.25" stop-color="#00ff00"/><stop offset="0.602" stop-color="#00ff00"/><stop offset="0.8214" stop-color="#77ff00"/><stop offset="1" stop-color="#f3ff00"/></linearGradient><linearGradient id="g7" gradientUnits="userSpaceOnUse" x1="956" x2="1170"><stop offset="0" stop-color="#00ff0c"/><stop offset="0.3364" stop-color="#00ff00"/><stop offset="0.5561" stop-color="#00ff00"/><stop offset="0.6682" stop-color="#3eff00"/><stop offset="0.7617" stop-color="#7aff00"/><stop offset="0.9299" stop-color="#fcff00"/><stop offset="1" stop-color="#ffcd00"/></linearGradient><linearGradient id="g8" gradientUnits="userSpaceOnUse" x1="955" x2="1187"><stop offset="0" stop-color="#00ff10"/><stop offset="0.5216" stop-color="#01ff00"/><stop offset="0.6121" stop-color="#38ff00"/><stop offset="0.7069" stop-color="#7aff00"/><stop offset="0.7759" stop-color="#b0ff00"/><stop offset="0.8621" stop-color="#fdff00"/><stop offset="0.944" stop-color="#ffc100"/><stop offset="1" stop-color="#ffa200"/></linearGradient><linearGradient id="g9" gradientUnits="userSpaceOnUse" x1="954" x2="1205"><stop offset="0" stop-color="#00ff13"/><stop offset="0.4861" stop-color="#00ff00"/><stop offset="0.5777" stop-color="#3dff00"/><stop offset="0.6614" stop-color="#7dff00"/><stop offset="0.749" stop-color="#caff00"/><stop offset="0.8008" stop-color="#feff00"/><stop offset="0.8765" stop-color="#ffc000"/><stop offset="0.9243" stop-color="#ffa300"/><stop offset="1" stop-color="#ff8100"/></linearGradient><linearGradient id="g10" gradientUnits="userSpaceOnUse" x1="953" x2="1222"><stop offset="0" stop-color="#00ff17"/><stop offset="0.4572" stop-color="#00ff04"/><stop offset="0.6059" stop-color="#70ff00"/><stop offset="0.6803" stop-color="#b4ff00"/><stop offset="0.7509" stop-color="#feff00"/><stop offset="0.7918" stop-color="#ffd700"/><stop offset="0.855" stop-color="#ffa900"/><stop offset="0.9108" stop-color="#ff8b00"/><stop offset="1" stop-color="#ff6800"/></linearGradient><linearGradient id="g11" gradientUnits="userSpaceOnUse" x1="953" x2="1239"><stop offset="0" stop-color="#00ff1a"/><stop offset="0.4336" stop-color="#01ff08"/><stop offset="0.5105" stop-color="#3cff04"/><stop offset="0.5874" stop-color="#80ff00"/><stop offset="0.7063" stop-color="#ffff00"/><stop offset="0.7657" stop-color="#ffc400"/><stop offset="0.8252" stop-color="#ff9b00"/><stop offset="0.8986" stop-color="#ff7700"/><stop offset="1" stop-color="#ff5500"/></linearGradient><linearGradient id="g12" gradientUnits="userSpaceOnUse" x1="952" x2="1257"><stop offset="0" stop-color="#00ff1e"/><stop offset="0.4098" stop-color="#00ff0d"/><stop offset="0.5443" stop-color="#76ff05"/><stop offset="0.6098" stop-color="#bcff00"/><stop offset="0.6623" stop-color="#fcff00"/><stop offset="0.7213" stop-color="#ffc300"/><stop offset="0.8033" stop-color="#ff8b00"/><stop offset="0.8918" stop-color="#ff6400"/><stop offset="1" stop-color="#ff4400"/></linearGradient><linearGradient id="g13" gradientUnits="userSpaceOnUse" x1="952" x2="1274"><stop offset="0" stop-color="#00ff22"/><stop offset="0.3882" stop-color="#00ff12"/><stop offset="0.5062" stop-color="#6cff0b"/><stop offset="0.5683" stop-color="#b1ff06"/><stop offset="0.6273" stop-color="#fdff01"/><stop offset="0.6925" stop-color="#ffba00"/><stop offset="0.7702" stop-color="#ff8500"/><stop offset="0.8478" stop-color="#ff6200"/><stop offset="1" stop-color="#ff3800"/></linearGradient><linearGradient id="g14" gradientUnits="userSpaceOnUse" x1="952" x2="1292"><stop offset="0" stop-color="#00ff25"/><stop offset="0.3706" stop-color="#01ff17"/><stop offset="0.4824" stop-color="#6fff10"/><stop offset="0.5412" stop-color="#b5ff0c"/><stop offset="0.5941" stop-color="#fdff07"/><stop offset="0.6265" stop-color="#ffd704"/><stop offset="0.6618" stop-color="#ffb400"/><stop offset="0.75" stop-color="#ff7900"/><stop offset="0.8676" stop-color="#ff4b00"/><stop offset="1" stop-color="#ff2c00"/></linearGradient><linearGradient id="g15" gradientUnits="userSpaceOnUse" x1="952" x2="1309"><stop offset="0" stop-color="#00ff29"/><stop offset="0.3529" stop-color="#00ff1c"/><stop offset="0.4062" stop-color="#34ff19"/><stop offset="0.4762" stop-color="#83ff14"/><stop offset="0.5658" stop-color="#feff0e"/><stop offset="0.5966" stop-color="#ffd609"/><stop offset="0.6359" stop-color="#ffae05"/><stop offset="0.6779" stop-color="#ff8e01"/><stop offset="0.7283" stop-color="#ff7100"/><stop offset="0.8403" stop-color="#ff4600"/><stop offset="1" stop-color="#ff2300"/></linearGradient><linearGradient id="g16" gradientUnits="userSpaceOnUse" x1="951" x2="1326"><stop offset="0" stop-color="#00ff2d"/><stop offset="0.3387" stop-color="#00ff21"/><stop offset="0.3787" stop-color="#28ff1f"/><stop offset="0.4507" stop-color="#7cff1a"/><stop offset="0.5013" stop-color="#c1ff17"/><stop offset="0.5413" stop-color="#ffff14"/><stop offset="0.5707" stop-color="#ffd50f"/><stop offset="0.616" stop-color="#ffa609"/><stop offset="0.6587" stop-color="#ff8604"/><stop offset="0.7147" stop-color="#ff6700"/><stop offset="0.8427" stop-color="#ff3a00"/><stop offset="1" stop-color="#ff1b00"/></linearGradient><linearGradient id="g17" gradientUnits="userSpaceOnUse" x1="951" x2="1343"><stop offset="0" stop-color="#00ff30"/><stop offset="0.3265" stop-color="#01ff26"/><stop offset="0.4184" stop-color="#6bff21"/><stop offset="0.4694" stop-color="#b2ff1e"/><stop offset="0.5179" stop-color="#fffe1a"/><stop offset="0.5485" stop-color="#ffd114"/><stop offset="0.5918" stop-color="#ffa30d"/><stop offset="0.6378" stop-color="#ff8008"/><stop offset="0.6862" stop-color="#ff6504"/><stop offset="0.7577" stop-color="#ff4800"/><stop offset="0.8342" stop-color="#ff3200"/><stop offset="1" stop-color="#ff1400"/></linearGradient><linearGradient id="g18" gradientUnits="userSpaceOnUse" x1="951" x2="1361"><stop offset="0" stop-color="#00ff34"/><stop offset="0.3122" stop-color="#00ff2b"/><stop offset="0.4073" stop-color="#75ff26"/><stop offset="0.4951" stop-color="#fffd21"/><stop offset="0.5244" stop-color="#ffd019"/><stop offset="0.5659" stop-color="#ffa211"/><stop offset="0.6146" stop-color="#ff7c0b"/><stop offset="0.6707" stop-color="#ff5d06"/><stop offset="0.7341" stop-color="#ff4402"/><stop offset="0.8195" stop-color="#ff2c00"/><stop offset="1" stop-color="#ff0e00"/></linearGradient><linearGradient id="g19" gradientUnits="userSpaceOnUse" x1="951" x2="1378"><stop offset="0" stop-color="#00ff38"/><stop offset="0.2998" stop-color="#00ff30"/><stop offset="0.3583" stop-color="#47ff2e"/><stop offset="0.3981" stop-color="#7fff2c"/><stop offset="0.4754" stop-color="#fffd27"/><stop offset="0.5059" stop-color="#ffcc1e"/><stop offset="0.5457" stop-color="#ff9f16"/><stop offset="0.5948" stop-color="#ff780e"/><stop offset="0.6487" stop-color="#ff5a09"/><stop offset="0.7845" stop-color="#ff2c00"/><stop offset="1" stop-color="#ff0800"/></linearGradient><linearGradient id="g20" gradientUnits="userSpaceOnUse" x1="951" x2="1396"><stop offset="0" stop-color="#00ff3c"/><stop offset="0.2899" stop-color="#01ff35"/><stop offset="0.3775" stop-color="#78ff32"/><stop offset="0.4562" stop-color="#fffc2e"/><stop offset="0.4854" stop-color="#ffcb24"/><stop offset="0.5236" stop-color="#ff9e1a"/><stop offset="0.564" stop-color="#ff7c13"/><stop offset="0.627" stop-color="#ff570b"/><stop offset="0.6921" stop-color="#ff3d06"/><stop offset="0.7663" stop-color="#ff2802"/><stop offset="1" stop-color="#ff0300"/></linearGradient><linearGradient id="g21" gradientUnits="userSpaceOnUse" x1="952" x2="1413"><stop offset="0" stop-color="#00ff40"/><stop offset="0.2777" stop-color="#00ff3a"/><stop offset="0.3536" stop-color="#6aff38"/><stop offset="0.3948" stop-color="#afff37"/><stop offset="0.436" stop-color="#ffff35"/><stop offset="0.4751" stop-color="#ffbe26"/><stop offset="0.5271" stop-color="#ff871a"/><stop offset="0.5792" stop-color="#ff6311"/><stop offset="0.6399" stop-color="#ff460b"/><stop offset="0.7939" stop-color="#ff1b01"/><stop offset="1" stop-color="#ff0000"/></linearGradient><linearGradient id="g22" gradientUnits="userSpaceOnUse" x1="952" x2="1430"><stop offset="0" stop-color="#00ff44"/><stop offset="0.2678" stop-color="#00ff40"/><stop offset="0.3368" stop-color="#63ff3e"/><stop offset="0.3849" stop-color="#b7ff3d"/><stop offset="0.4205" stop-color="#ffff3c"/><stop offset="0.454" stop-color="#ffc32d"/><stop offset="0.4958" stop-color="#ff9221"/><stop offset="0.546" stop-color="#ff6a17"/><stop offset="0.613" stop-color="#ff470e"/><stop offset="0.6883" stop-color="#ff2d08"/><stop offset="0.7887" stop-color="#ff1602"/><stop offset="0.9435" stop-color="#ff0000"/><stop offset="1" stop-color="#ff0000"/></linearGradient><linearGradient id="g23" gradientUnits="userSpaceOnUse" x1="952" x2="1448"><stop offset="0" stop-color="#00ff47"/><stop offset="0.2601" stop-color="#01ff45"/><stop offset="0.3387" stop-color="#7bff44"/><stop offset="0.4052" stop-color="#fffe43"/><stop offset="0.4294" stop-color="#ffcf36"/><stop offset="0.4718" stop-color="#ff9727"/><stop offset="0.5222" stop-color="#ff6c1b"/><stop offset="0.5867" stop-color="#ff4811"/><stop offset="0.6714" stop-color="#ff2a09"/><stop offset="0.7964" stop-color="#ff0f02"/><stop offset="0.9052" stop-color="#ff0000"/><stop offset="1" stop-color="#ff0000"/></linearGradient><linearGradient id="g24" gradientUnits="userSpaceOnUse" x1="952" x2="1465"><stop offset="0" stop-color="#00ff4b"/><stop offset="0.2515" stop-color="#01ff4b"/><stop offset="0.2904" stop-color="#3bff4b"/><stop offset="0.3314" stop-color="#82ff4b"/><stop offset="0.3918" stop-color="#fffd4a"/><stop offset="0.4074" stop-color="#ffdc40"/><stop offset="0.4327" stop-color="#ffb334"/><stop offset="0.4698" stop-color="#ff8827"/><stop offset="0.5166" stop-color="#ff631d"/><stop offset="0.577" stop-color="#ff4313"/><stop offset="0.6647" stop-color="#ff250a"/><stop offset="0.7914" stop-color="#ff0b03"/><stop offset="0.8713" stop-color="#ff0000"/><stop offset="1" stop-color="#ff0000"/></linearGradient><linearGradient id="g25" gradientUnits="userSpaceOnUse" x1="952" x2="1482"><stop offset="0" stop-color="#00ff4f"/><stop offset="0.2434" stop-color="#00ff50"/><stop offset="0.2736" stop-color="#2eff51"/><stop offset="0.3151" stop-color="#77ff51"/><stop offset="0.3792" stop-color="#fffc51"/><stop offset="0.3943" stop-color="#ffdb46"/><stop offset="0.4189" stop-color="#ffb239"/><stop offset="0.4528" stop-color="#ff892c"/><stop offset="0.5019" stop-color="#ff6120"/><stop offset="0.5755" stop-color="#ff3b14"/><stop offset="0.6849" stop-color="#ff1a09"/><stop offset="0.8094" stop-color="#ff0402"/><stop offset="1" stop-color="#ff0000"/></linearGradient><linearGradient id="g26" gradientUnits="userSpaceOnUse" x1="953" x2="1500"><stop offset="0" stop-color="#00ff53"/><stop offset="0.234" stop-color="#00ff56"/><stop offset="0.2706" stop-color="#3aff57"/><stop offset="0.3035" stop-color="#77ff57"/><stop offset="0.3656" stop-color="#fffb57"/><stop offset="0.3803" stop-color="#ffda4c"/><stop offset="0.404" stop-color="#ffb13f"/><stop offset="0.4461" stop-color="#ff7f2e"/><stop offset="0.4954" stop-color="#ff5921"/><stop offset="0.5667" stop-color="#ff3615"/><stop offset="0.6636" stop-color="#ff190b"/><stop offset="0.8007" stop-color="#ff0103"/><stop offset="1" stop-color="#ff0000"/></linearGradient><linearGradient id="g27" gradientUnits="userSpaceOnUse" x1="953" x2="1517"><stop offset="0" stop-color="#00ff58"/><stop offset="0.2287" stop-color="#01ff5c"/><stop offset="0.2926" stop-color="#73ff5e"/><stop offset="0.3298" stop-color="#c5ff5f"/><stop offset="0.3528" stop-color="#ffff60"/><stop offset="0.3723" stop-color="#ffd250"/><stop offset="0.3901" stop-color="#ffb345"/><stop offset="0.4309" stop-color="#ff8033"/><stop offset="0.4823" stop-color="#ff5724"/><stop offset="0.5479" stop-color="#ff3618"/><stop offset="0.6454" stop-color="#ff180d"/><stop offset="0.7819" stop-color="#ff0004"/><stop offset="1" stop-color="#ff0000"/></linearGradient><linearGradient id="g28" gradientUnits="userSpaceOnUse" x1="953" x2="1534"><stop offset="0" stop-color="#00ff5c"/><stop offset="0.222" stop-color="#00ff62"/><stop offset="0.284" stop-color="#73ff64"/><stop offset="0.3167" stop-color="#bdff66"/><stop offset="0.3425" stop-color="#fffe67"/><stop offset="0.3614" stop-color="#ffd156"/><stop offset="0.3787" stop-color="#ffb24a"/><stop offset="0.4182" stop-color="#ff7f37"/><stop offset="0.4716" stop-color="#ff5426"/><stop offset="0.5508" stop-color="#ff2e18"/><stop offset="0.6368" stop-color="#ff150e"/><stop offset="0.7556" stop-color="#ff0006"/><stop offset="1" stop-color="#ff0000"/></linearGradient><linearGradient id="g29" gradientUnits="userSpaceOnUse" x1="954" x2="1552"><stop offset="0" stop-color="#00ff60"/><stop offset="0.214" stop-color="#00ff68"/><stop offset="0.2441" stop-color="#35ff69"/><stop offset="0.2726" stop-color="#6fff6b"/><stop offset="0.3043" stop-color="#b9ff6d"/><stop offset="0.3311" stop-color="#fffd6f"/><stop offset="0.3445" stop-color="#ffdb61"/><stop offset="0.3662" stop-color="#ffb150"/><stop offset="0.4097" stop-color="#ff7939"/><stop offset="0.4599" stop-color="#ff5129"/><stop offset="0.5368" stop-color="#ff2c1a"/><stop offset="0.6237" stop-color="#ff1310"/><stop offset="0.7291" stop-color="#ff0008"/><stop offset="1" stop-color="#ff0000"/></linearGradient><linearGradient id="g30" gradientUnits="userSpaceOnUse" x1="954" x2="1552"><stop offset="0" stop-color="#00ff64"/><stop offset="0.2157" stop-color="#01ff6e"/><stop offset="0.2425" stop-color="#31ff70"/><stop offset="0.2776" stop-color="#7aff72"/><stop offset="0.3311" stop-color="#fffc76"/><stop offset="0.3445" stop-color="#ffda68"/><stop offset="0.3662" stop-color="#ffb055"/><stop offset="0.403" stop-color="#ff7f40"/><stop offset="0.4482" stop-color="#ff5830"/><stop offset="0.5351" stop-color="#ff2c1d"/><stop offset="0.6254" stop-color="#ff1211"/><stop offset="0.7258" stop-color="#ff000a"/><stop offset="1" stop-color="#ff0000"/></linearGradient><linearGradient id="g31" gradientUnits="userSpaceOnUse" x1="954" x2="1552"><stop offset="0" stop-color="#00ff68"/><stop offset="0.2157" stop-color="#00ff74"/><stop offset="0.2759" stop-color="#76ff79"/><stop offset="0.3311" stop-color="#fffb7d"/><stop offset="0.3478" stop-color="#ffd26b"/><stop offset="0.3662" stop-color="#ffaf5b"/><stop offset="0.403" stop-color="#ff7e45"/><stop offset="0.4498" stop-color="#ff5633"/><stop offset="0.5334" stop-color="#ff2c1f"/><stop offset="0.6271" stop-color="#ff1113"/><stop offset="0.7224" stop-color="#ff000b"/><stop offset="1" stop-color="#ff0000"/></linearGradient><linearGradient id="g32" gradientUnits="userSpaceOnUse" x1="955" x2="1552"><stop offset="0" stop-color="#00ff6d"/><stop offset="0.2144" stop-color="#00ff7a"/><stop offset="0.2429" stop-color="#33ff7d"/><stop offset="0.273" stop-color="#72ff80"/><stop offset="0.3032" stop-color="#baff84"/><stop offset="0.3283" stop-color="#ffff87"/><stop offset="0.3417" stop-color="#ffdc77"/><stop offset="0.3652" stop-color="#ffae61"/><stop offset="0.4003" stop-color="#ff7f4a"/><stop offset="0.4523" stop-color="#ff5335"/><stop offset="0.5226" stop-color="#ff2f24"/><stop offset="0.603" stop-color="#ff1618"/><stop offset="0.7186" stop-color="#ff000d"/><stop offset="1" stop-color="#ff0001"/></linearGradient><linearGradient id="g33" gradientUnits="userSpaceOnUse" x1="955" x2="1552"><stop offset="0" stop-color="#00ff71"/><stop offset="0.2161" stop-color="#01ff80"/><stop offset="0.2714" stop-color="#6eff87"/><stop offset="0.3015" stop-color="#b6ff8b"/><stop offset="0.3283" stop-color="#fffe8f"/><stop offset="0.3417" stop-color="#ffdb7d"/><stop offset="0.3652" stop-color="#ffad66"/><stop offset="0.4003" stop-color="#ff7e4f"/><stop offset="0.4539" stop-color="#ff5138"/><stop offset="0.526" stop-color="#ff2d26"/><stop offset="0.6214" stop-color="#ff1118"/><stop offset="0.7152" stop-color="#ff000f"/><stop offset="1" stop-color="#ff0002"/></linearGradient><linearGradient id="g34" gradientUnits="userSpaceOnUse" x1="956" x2="1552"><stop offset="0" stop-color="#00ff75"/><stop offset="0.2148" stop-color="#00ff87"/><stop offset="0.2433" stop-color="#35ff8a"/><stop offset="0.2768" stop-color="#7dff8f"/><stop offset="0.3272" stop-color="#fffd97"/><stop offset="0.3406" stop-color="#ffda84"/><stop offset="0.3591" stop-color="#ffb570"/><stop offset="0.3977" stop-color="#ff7f54"/><stop offset="0.4564" stop-color="#ff4e3a"/><stop offset="0.5235" stop-color="#ff2d29"/><stop offset="0.5973" stop-color="#ff161d"/><stop offset="0.7114" stop-color="#ff0011"/><stop offset="1" stop-color="#ff0003"/></linearGradient><linearGradient id="g35" gradientUnits="userSpaceOnUse" x1="956" x2="1552"><stop offset="0" stop-color="#00ff7a"/><stop offset="0.2148" stop-color="#00ff8d"/><stop offset="0.2416" stop-color="#31ff91"/><stop offset="0.2735" stop-color="#75ff96"/><stop offset="0.3272" stop-color="#fffc9e"/><stop offset="0.354" stop-color="#ffbd7c"/><stop offset="0.3725" stop-color="#ff9e6a"/><stop offset="0.3977" stop-color="#ff7e59"/><stop offset="0.4446" stop-color="#ff5542"/><stop offset="0.5268" stop-color="#ff2b2b"/><stop offset="0.6158" stop-color="#ff111c"/><stop offset="0.7081" stop-color="#ff0013"/><stop offset="1" stop-color="#ff0004"/></linearGradient><linearGradient id="g36" gradientUnits="userSpaceOnUse" x1="957" x2="1552"><stop offset="0" stop-color="#00ff7e"/><stop offset="0.2151" stop-color="#01ff94"/><stop offset="0.2706" stop-color="#71ff9d"/><stop offset="0.3261" stop-color="#fffba6"/><stop offset="0.3529" stop-color="#ffbc82"/><stop offset="0.3714" stop-color="#ff9d70"/><stop offset="0.3966" stop-color="#ff7d5d"/><stop offset="0.4454" stop-color="#ff5345"/><stop offset="0.5244" stop-color="#ff2b2e"/><stop offset="0.6" stop-color="#ff1420"/><stop offset="0.7042" stop-color="#ff0015"/><stop offset="1" stop-color="#ff0005"/></linearGradient><linearGradient id="g37" gradientUnits="userSpaceOnUse" x1="957" x2="1552"><stop offset="0" stop-color="#00ff83"/><stop offset="0.2151" stop-color="#00ff9b"/><stop offset="0.2672" stop-color="#69ffa4"/><stop offset="0.3261" stop-color="#fffbae"/><stop offset="0.3529" stop-color="#ffbb88"/><stop offset="0.3714" stop-color="#ff9c75"/><stop offset="0.3966" stop-color="#ff7c62"/><stop offset="0.4471" stop-color="#ff5148"/><stop offset="0.5277" stop-color="#ff2930"/><stop offset="0.6101" stop-color="#ff1121"/><stop offset="0.7008" stop-color="#ff0017"/><stop offset="1" stop-color="#ff0006"/></linearGradient><linearGradient id="g38" gradientUnits="userSpaceOnUse" x1="958" x2="1552"><stop offset="0" stop-color="#00ff88"/><stop offset="0.2138" stop-color="#00ffa1"/><stop offset="0.2643" stop-color="#65ffab"/><stop offset="0.2963" stop-color="#b3ffb3"/><stop offset="0.3232" stop-color="#ffffba"/><stop offset="0.3384" stop-color="#ffd6a0"/><stop offset="0.362" stop-color="#ffa883"/><stop offset="0.4024" stop-color="#ff7462"/><stop offset="0.4478" stop-color="#ff4f4b"/><stop offset="0.5253" stop-color="#ff2933"/><stop offset="0.5943" stop-color="#ff1425"/><stop offset="0.697" stop-color="#ff0019"/><stop offset="1" stop-color="#ff0007"/></linearGradient><linearGradient id="g39" gradientUnits="userSpaceOnUse" x1="958" x2="1552"><stop offset="0" stop-color="#00ff8c"/><stop offset="0.2155" stop-color="#01ffa9"/><stop offset="0.2609" stop-color="#5dffb2"/><stop offset="0.2912" stop-color="#a6ffba"/><stop offset="0.3232" stop-color="#fffec2"/><stop offset="0.3502" stop-color="#ffbc97"/><stop offset="0.3704" stop-color="#ff9a80"/><stop offset="0.3939" stop-color="#ff7c6d"/><stop offset="0.4512" stop-color="#ff4c4d"/><stop offset="0.5152" stop-color="#ff2c38"/><stop offset="0.596" stop-color="#ff1327"/><stop offset="0.6936" stop-color="#ff001b"/><stop offset="1" stop-color="#ff0008"/></linearGradient><linearGradient id="g40" gradientUnits="userSpaceOnUse" x1="959" x2="1552"><stop offset="0" stop-color="#00ff91"/><stop offset="0.2142" stop-color="#00ffaf"/><stop offset="0.2664" stop-color="#6cffbc"/><stop offset="0.2934" stop-color="#afffc3"/><stop offset="0.3221" stop-color="#fffdca"/><stop offset="0.3339" stop-color="#ffdcb4"/><stop offset="0.3491" stop-color="#ffbb9d"/><stop offset="0.3693" stop-color="#ff9986"/><stop offset="0.3929" stop-color="#ff7b71"/><stop offset="0.4536" stop-color="#ff494f"/><stop offset="0.5177" stop-color="#ff2a3a"/><stop offset="0.597" stop-color="#ff1229"/><stop offset="0.6897" stop-color="#ff001d"/><stop offset="1" stop-color="#ff0009"/></linearGradient><linearGradient id="g41" gradientUnits="userSpaceOnUse" x1="959" x2="1552"><stop offset="0" stop-color="#00ff96"/><stop offset="0.2142" stop-color="#00ffb7"/><stop offset="0.2614" stop-color="#60ffc2"/><stop offset="0.2884" stop-color="#a2ffca"/><stop offset="0.3221" stop-color="#fffcd3"/><stop offset="0.3339" stop-color="#ffdbbc"/><stop offset="0.3491" stop-color="#ffbaa4"/><stop offset="0.3693" stop-color="#ff988c"/><stop offset="0.3929" stop-color="#ff7a76"/><stop offset="0.4401" stop-color="#ff5159"/><stop offset="0.5211" stop-color="#ff283b"/><stop offset="0.5902" stop-color="#ff132c"/><stop offset="0.688" stop-color="#ff001f"/><stop offset="1" stop-color="#ff000a"/></linearGradient><linearGradient id="g42" gradientUnits="userSpaceOnUse" x1="960" x2="1552"><stop offset="0" stop-color="#00ff9b"/><stop offset="0.2145" stop-color="#01ffbe"/><stop offset="0.2449" stop-color="#3effc6"/><stop offset="0.2753" stop-color="#84ffcf"/><stop offset="0.3209" stop-color="#fffbdb"/><stop offset="0.3328" stop-color="#ffdac3"/><stop offset="0.348" stop-color="#ffb9ab"/><stop offset="0.3682" stop-color="#ff9791"/><stop offset="0.3919" stop-color="#ff797b"/><stop offset="0.4409" stop-color="#ff4f5c"/><stop offset="0.5236" stop-color="#ff263d"/><stop offset="0.5997" stop-color="#ff102d"/><stop offset="0.6841" stop-color="#ff0021"/><stop offset="1" stop-color="#ff000b"/></linearGradient><linearGradient id="g43" gradientUnits="userSpaceOnUse" x1="961" x2="1551"><stop offset="0" stop-color="#00ffa0"/><stop offset="0.2136" stop-color="#00ffc5"/><stop offset="0.2508" stop-color="#4cffd0"/><stop offset="0.2763" stop-color="#88ffd8"/><stop offset="0.3186" stop-color="#ffffe8"/><stop offset="0.3322" stop-color="#ffd9cb"/><stop offset="0.3475" stop-color="#ffb8b1"/><stop offset="0.3712" stop-color="#ff9193"/><stop offset="0.3915" stop-color="#ff7880"/><stop offset="0.4407" stop-color="#ff4e5f"/><stop offset="0.522" stop-color="#ff2640"/><stop offset="0.5847" stop-color="#ff1332"/><stop offset="0.6814" stop-color="#ff0023"/><stop offset="1" stop-color="#ff000c"/></linearGradient><linearGradient id="g44" gradientUnits="userSpaceOnUse" x1="961" x2="1549"><stop offset="0" stop-color="#00ffa5"/><stop offset="0.1105" stop-color="#00ffb5"/><stop offset="0.2143" stop-color="#00ffcd"/><stop offset="0.2347" stop-color="#27ffd3"/><stop offset="0.2687" stop-color="#73ffdd"/><stop offset="0.2925" stop-color="#b0ffe6"/><stop offset="0.3197" stop-color="#fffef1"/><stop offset="0.3469" stop-color="#ffbabb"/><stop offset="0.3724" stop-color="#ff9099"/><stop offset="0.3929" stop-color="#ff7785"/><stop offset="0.4439" stop-color="#ff4c62"/><stop offset="0.5136" stop-color="#ff2946"/><stop offset="0.5884" stop-color="#ff1234"/><stop offset="0.6803" stop-color="#ff0025"/><stop offset="1" stop-color="#ff000d"/></linearGradient><linearGradient id="g45" gradientUnits="userSpaceOnUse" x1="962" x2="1547"><stop offset="0" stop-color="#00ffaa"/><stop offset="0.1197" stop-color="#00ffbd"/><stop offset="0.2154" stop-color="#01ffd5"/><stop offset="0.2701" stop-color="#77ffe7"/><stop offset="0.3197" stop-color="#fffdfa"/><stop offset="0.3316" stop-color="#ffdbde"/><stop offset="0.347" stop-color="#ffb9c2"/><stop offset="0.3726" stop-color="#ff8f9f"/><stop offset="0.3932" stop-color="#ff768a"/><stop offset="0.4462" stop-color="#ff4a65"/><stop offset="0.5179" stop-color="#ff2748"/><stop offset="0.5915" stop-color="#ff1136"/><stop offset="0.6786" stop-color="#ff0027"/><stop offset="1" stop-color="#ff000e"/></linearGradient><linearGradient id="g46" gradientUnits="userSpaceOnUse" x1="962" x2="1545"><stop offset="0" stop-color="#00ffaf"/><stop offset="0.1046" stop-color="#00ffc0"/><stop offset="0.2161" stop-color="#00ffdc"/><stop offset="0.2624" stop-color="#62ffec"/><stop offset="0.307" stop-color="#d8ffff"/><stop offset="0.3225" stop-color="#fff7fe"/><stop offset="0.3482" stop-color="#ffb8c9"/><stop offset="0.3705" stop-color="#ff93a8"/><stop offset="0.3945" stop-color="#ff758f"/><stop offset="0.4511" stop-color="#ff4767"/><stop offset="0.5232" stop-color="#ff254a"/><stop offset="0.5952" stop-color="#ff1037"/><stop offset="0.6775" stop-color="#ff002a"/><stop offset="1" stop-color="#ff000f"/></linearGradient><linearGradient id="g47" gradientUnits="userSpaceOnUse" x1="963" x2="1543"><stop offset="0" stop-color="#00ffb4"/><stop offset="0.1259" stop-color="#00ffcb"/><stop offset="0.2155" stop-color="#00ffe4"/><stop offset="0.25" stop-color="#46fff0"/><stop offset="0.2862" stop-color="#9effff"/><stop offset="0.3259" stop-color="#ffecfe"/><stop offset="0.3414" stop-color="#ffc5dc"/><stop offset="0.3638" stop-color="#ff9cb7"/><stop offset="0.4017" stop-color="#ff6d8d"/><stop offset="0.4552" stop-color="#ff4469"/><stop offset="0.5276" stop-color="#ff234b"/><stop offset="0.6759" stop-color="#ff002c"/><stop offset="0.7931" stop-color="#ff001e"/><stop offset="1" stop-color="#ff0011"/></linearGradient><linearGradient id="g48" gradientUnits="userSpaceOnUse" x1="964" x2="1541"><stop offset="0" stop-color="#00ffb9"/><stop offset="0.1231" stop-color="#00ffd1"/><stop offset="0.2166" stop-color="#01ffec"/><stop offset="0.2652" stop-color="#6affff"/><stop offset="0.3293" stop-color="#ffe1fe"/><stop offset="0.3414" stop-color="#ffc4e4"/><stop offset="0.364" stop-color="#ff9bbe"/><stop offset="0.4073" stop-color="#ff678e"/><stop offset="0.4541" stop-color="#ff456d"/><stop offset="0.5355" stop-color="#ff204c"/><stop offset="0.6742" stop-color="#ff002e"/><stop offset="0.8232" stop-color="#ff001d"/><stop offset="1" stop-color="#ff0012"/></linearGradient><linearGradient id="g49" gradientUnits="userSpaceOnUse" x1="964" x2="1539"><stop offset="0" stop-color="#00ffbe"/><stop offset="0.1217" stop-color="#00ffd7"/><stop offset="0.2174" stop-color="#00fff4"/><stop offset="0.2452" stop-color="#3affff"/><stop offset="0.3339" stop-color="#ffd7fe"/><stop offset="0.3478" stop-color="#ffb8e1"/><stop offset="0.367" stop-color="#ff97c1"/><stop offset="0.4087" stop-color="#ff6692"/><stop offset="0.4765" stop-color="#ff3866"/><stop offset="0.5443" stop-color="#ff1d4c"/><stop offset="0.673" stop-color="#ff0031"/><stop offset="0.8191" stop-color="#ff001f"/><stop offset="1" stop-color="#ff0013"/></linearGradient><linearGradient id="g50" gradientUnits="userSpaceOnUse" x1="965" x2="1537"><stop offset="0" stop-color="#00ffc4"/><stop offset="0.1224" stop-color="#00ffde"/><stop offset="0.2168" stop-color="#00fffd"/><stop offset="0.2692" stop-color="#69ecff"/><stop offset="0.3374" stop-color="#ffcefe"/><stop offset="0.3671" stop-color="#ff96c8"/><stop offset="0.4091" stop-color="#ff6597"/><stop offset="0.4738" stop-color="#ff396b"/><stop offset="0.5402" stop-color="#ff1e51"/><stop offset="0.6713" stop-color="#ff0033"/><stop offset="0.8147" stop-color="#ff0021"/><stop offset="1" stop-color="#ff0014"/></linearGradient><linearGradient id="g51" gradientUnits="userSpaceOnUse" x1="966" x2="1535"><stop offset="0" stop-color="#00ffca"/><stop offset="0.1002" stop-color="#00ffdf"/><stop offset="0.2021" stop-color="#00ffff"/><stop offset="0.2162" stop-color="#00f9ff"/><stop offset="0.2742" stop-color="#70e2ff"/><stop offset="0.3409" stop-color="#ffc5fe"/><stop offset="0.3638" stop-color="#ff9bd3"/><stop offset="0.3796" stop-color="#ff84bd"/><stop offset="0.4253" stop-color="#ff578e"/><stop offset="0.4815" stop-color="#ff356b"/><stop offset="0.5483" stop-color="#ff1b51"/><stop offset="0.6696" stop-color="#ff0036"/><stop offset="0.8014" stop-color="#ff0024"/><stop offset="1" stop-color="#ff0016"/></linearGradient><linearGradient id="g52" gradientUnits="userSpaceOnUse" x1="966" x2="1533"><stop offset="0" stop-color="#00ffcf"/><stop offset="0.09524" stop-color="#00ffe4"/><stop offset="0.1817" stop-color="#00ffff"/><stop offset="0.2187" stop-color="#01f1ff"/><stop offset="0.291" stop-color="#8cd4ff"/><stop offset="0.3457" stop-color="#ffbcff"/><stop offset="0.3739" stop-color="#ff8dcc"/><stop offset="0.4145" stop-color="#ff609d"/><stop offset="0.478" stop-color="#ff3771"/><stop offset="0.5414" stop-color="#ff1d57"/><stop offset="0.6684" stop-color="#ff0038"/><stop offset="0.8183" stop-color="#ff0024"/><stop offset="1" stop-color="#ff0017"/></linearGradient><linearGradient id="g53" gradientUnits="userSpaceOnUse" x1="967" x2="1531"><stop offset="0" stop-color="#00ffd5"/><stop offset="0.1596" stop-color="#00ffff"/><stop offset="0.2181" stop-color="#00eaff"/><stop offset="0.2926" stop-color="#8bccff"/><stop offset="0.3493" stop-color="#ffb4ff"/><stop offset="0.3652" stop-color="#ff98e0"/><stop offset="0.3865" stop-color="#ff7cc1"/><stop offset="0.4309" stop-color="#ff5394"/><stop offset="0.4894" stop-color="#ff316f"/><stop offset="0.5674" stop-color="#ff1552"/><stop offset="0.6667" stop-color="#ff003b"/><stop offset="0.8156" stop-color="#ff0026"/><stop offset="1" stop-color="#ff0018"/></linearGradient><linearGradient id="g54" gradientUnits="userSpaceOnUse" x1="968" x2="1529"><stop offset="0" stop-color="#00ffdb"/><stop offset="0.1373" stop-color="#00ffff"/><stop offset="0.2175" stop-color="#00e3ff"/><stop offset="0.2799" stop-color="#6fcbff"/><stop offset="0.3529" stop-color="#ffacff"/><stop offset="0.385" stop-color="#ff7dc9"/><stop offset="0.4296" stop-color="#ff539a"/><stop offset="0.4813" stop-color="#ff3477"/><stop offset="0.549" stop-color="#ff1a5a"/><stop offset="0.6649" stop-color="#ff003d"/><stop offset="0.8128" stop-color="#ff0028"/><stop offset="1" stop-color="#ff0019"/></linearGradient><linearGradient id="g55" gradientUnits="userSpaceOnUse" x1="968" x2="1527"><stop offset="0" stop-color="#00ffe0"/><stop offset="0.1163" stop-color="#00ffff"/><stop offset="0.22" stop-color="#01dbff"/><stop offset="0.2844" stop-color="#72c3ff"/><stop offset="0.3578" stop-color="#ffa4ff"/><stop offset="0.39" stop-color="#ff77ca"/><stop offset="0.4258" stop-color="#ff56a3"/><stop offset="0.4669" stop-color="#ff3b84"/><stop offset="0.5474" stop-color="#ff1b5e"/><stop offset="0.6637" stop-color="#ff0040"/><stop offset="0.8014" stop-color="#ff002b"/><stop offset="1" stop-color="#ff001b"/></linearGradient><linearGradient id="g56" gradientUnits="userSpaceOnUse" x1="969" x2="1526"><stop offset="0" stop-color="#00ffe6"/><stop offset="0.09336" stop-color="#00ffff"/><stop offset="0.219" stop-color="#00d5ff"/><stop offset="0.2962" stop-color="#85b8ff"/><stop offset="0.3609" stop-color="#ff9dff"/><stop offset="0.3878" stop-color="#ff78d2"/><stop offset="0.4327" stop-color="#ff50a1"/><stop offset="0.4794" stop-color="#ff3480"/><stop offset="0.544" stop-color="#ff1b62"/><stop offset="0.6607" stop-color="#ff0043"/><stop offset="0.7899" stop-color="#ff002e"/><stop offset="1" stop-color="#ff001c"/></linearGradient><linearGradient id="g57" gradientUnits="userSpaceOnUse" x1="970" x2="1524"><stop offset="0" stop-color="#00ffec"/><stop offset="0.0704" stop-color="#00ffff"/><stop offset="0.2184" stop-color="#00cfff"/><stop offset="0.2834" stop-color="#6bb7ff"/><stop offset="0.3646" stop-color="#ff96ff"/><stop offset="0.4025" stop-color="#ff68c5"/><stop offset="0.4458" stop-color="#ff469b"/><stop offset="0.5054" stop-color="#ff2876"/><stop offset="0.5614" stop-color="#ff165f"/><stop offset="0.6588" stop-color="#ff0045"/><stop offset="0.8051" stop-color="#ff002e"/><stop offset="1" stop-color="#ff001d"/></linearGradient><linearGradient id="g58" gradientUnits="userSpaceOnUse" x1="971" x2="1522"><stop offset="0" stop-color="#00fff2"/><stop offset="0.04719" stop-color="#00ffff"/><stop offset="0.2196" stop-color="#01c8ff"/><stop offset="0.2904" stop-color="#74afff"/><stop offset="0.3684" stop-color="#ff90ff"/><stop offset="0.4047" stop-color="#ff65c8"/><stop offset="0.4519" stop-color="#ff429b"/><stop offset="0.5009" stop-color="#ff2a7c"/><stop offset="0.5644" stop-color="#ff1461"/><stop offset="0.6588" stop-color="#ff0048"/><stop offset="0.804" stop-color="#ff0030"/><stop offset="1" stop-color="#ff001f"/></linearGradient><linearGradient id="g59" gradientUnits="userSpaceOnUse" x1="971" x2="1520"><stop offset="0" stop-color="#00fff8"/><stop offset="0.051" stop-color="#00f8ff"/><stop offset="0.2204" stop-color="#00c2ff"/><stop offset="0.306" stop-color="#89a4ff"/><stop offset="0.3734" stop-color="#ff89ff"/><stop offset="0.4098" stop-color="#ff61c9"/><stop offset="0.4536" stop-color="#ff419f"/><stop offset="0.5173" stop-color="#ff2378"/><stop offset="0.5683" stop-color="#ff1363"/><stop offset="0.6576" stop-color="#ff004b"/><stop offset="0.8033" stop-color="#ff0032"/><stop offset="1" stop-color="#ff0020"/></linearGradient><linearGradient id="g60" gradientUnits="userSpaceOnUse" x1="972" x2="1518"><stop offset="0" stop-color="#00ffff"/><stop offset="0.2198" stop-color="#00bdff"/><stop offset="0.2747" stop-color="#53aaff"/><stop offset="0.3773" stop-color="#ff83ff"/><stop offset="0.4121" stop-color="#ff5ecc"/><stop offset="0.4505" stop-color="#ff42a6"/><stop offset="0.5165" stop-color="#ff237c"/><stop offset="0.5714" stop-color="#ff1265"/><stop offset="0.6557" stop-color="#ff004e"/><stop offset="0.8095" stop-color="#ff0033"/><stop offset="1" stop-color="#ff0021"/></linearGradient><linearGradient id="g61" gradientUnits="userSpaceOnUse" x1="973" x2="1516"><stop offset="0" stop-color="#00f9ff"/><stop offset="0.221" stop-color="#01b7ff"/><stop offset="0.2947" stop-color="#709eff"/><stop offset="0.3812" stop-color="#ff7dff"/><stop offset="0.4144" stop-color="#ff5bcf"/><stop offset="0.4641" stop-color="#ff3aa0"/><stop offset="0.512" stop-color="#ff2482"/><stop offset="0.5746" stop-color="#ff1167"/><stop offset="0.6538" stop-color="#ff0051"/><stop offset="0.8085" stop-color="#ff0035"/><stop offset="1" stop-color="#ff0023"/></linearGradient><linearGradient id="g62" gradientUnits="userSpaceOnUse" x1="974" x2="1514"><stop offset="0" stop-color="#00f3ff"/><stop offset="0.2204" stop-color="#00b2ff"/><stop offset="0.3056" stop-color="#7e95ff"/><stop offset="0.3852" stop-color="#ff78ff"/><stop offset="0.4167" stop-color="#ff59d2"/><stop offset="0.4648" stop-color="#ff39a4"/><stop offset="0.5315" stop-color="#ff1d7c"/><stop offset="0.5833" stop-color="#ff0e67"/><stop offset="0.6519" stop-color="#ff0054"/><stop offset="0.7593" stop-color="#ff003e"/><stop offset="1" stop-color="#ff0024"/></linearGradient><linearGradient id="g63" gradientUnits="userSpaceOnUse" x1="974" x2="1512"><stop offset="0" stop-color="#00edff"/><stop offset="0.2212" stop-color="#00adff"/><stop offset="0.3141" stop-color="#868eff"/><stop offset="0.3903" stop-color="#ff72ff"/><stop offset="0.4182" stop-color="#ff58d7"/><stop offset="0.4665" stop-color="#ff38a8"/><stop offset="0.5316" stop-color="#ff1d80"/><stop offset="0.5874" stop-color="#ff0d69"/><stop offset="0.6506" stop-color="#ff0057"/><stop offset="0.7602" stop-color="#ff0040"/><stop offset="1" stop-color="#ff0026"/></linearGradient><linearGradient id="g64" gradientUnits="userSpaceOnUse" x1="975" x2="1510"><stop offset="0" stop-color="#00e8ff"/><stop offset="0.2224" stop-color="#01a8ff"/><stop offset="0.3103" stop-color="#7d8bff"/><stop offset="0.3944" stop-color="#ff6dff"/><stop offset="0.4299" stop-color="#ff4ecf"/><stop offset="0.4766" stop-color="#ff32a5"/><stop offset="0.5308" stop-color="#ff1c84"/><stop offset="0.5963" stop-color="#ff0b69"/><stop offset="0.6486" stop-color="#ff005a"/><stop offset="0.7607" stop-color="#ff0042"/><stop offset="1" stop-color="#ff0027"/></linearGradient><linearGradient id="g65" gradientUnits="userSpaceOnUse" x1="976" x2="1508"><stop offset="0" stop-color="#00e2ff"/><stop offset="0.2218" stop-color="#00a4ff"/><stop offset="0.3026" stop-color="#6f8aff"/><stop offset="0.3985" stop-color="#ff68ff"/><stop offset="0.4286" stop-color="#ff4ed6"/><stop offset="0.4812" stop-color="#ff2fa6"/><stop offset="0.5263" stop-color="#ff1e8a"/><stop offset="0.5827" stop-color="#ff0d71"/><stop offset="0.6466" stop-color="#ff005d"/><stop offset="0.7613" stop-color="#ff0044"/><stop offset="1" stop-color="#ff0029"/></linearGradient><linearGradient id="g66" gradientUnits="userSpaceOnUse" x1="977" x2="1506"><stop offset="0" stop-color="#00ddff"/><stop offset="0.2212" stop-color="#009fff"/><stop offset="0.3081" stop-color="#7484ff"/><stop offset="0.4026" stop-color="#ff63ff"/><stop offset="0.4291" stop-color="#ff4ddb"/><stop offset="0.482" stop-color="#ff2faa"/><stop offset="0.552" stop-color="#ff1581"/><stop offset="0.5992" stop-color="#ff096e"/><stop offset="0.6446" stop-color="#ff0060"/><stop offset="0.7807" stop-color="#ff0043"/><stop offset="1" stop-color="#ff002a"/></linearGradient><linearGradient id="g67" gradientUnits="userSpaceOnUse" x1="978" x2="1504"><stop offset="0" stop-color="#00d7ff"/><stop offset="0.2224" stop-color="#019bff"/><stop offset="0.3232" stop-color="#867bff"/><stop offset="0.4068" stop-color="#ff5fff"/><stop offset="0.4335" stop-color="#ff49dc"/><stop offset="0.4867" stop-color="#ff2cab"/><stop offset="0.5532" stop-color="#ff1484"/><stop offset="0.597" stop-color="#ff0972"/><stop offset="0.6426" stop-color="#ff0064"/><stop offset="0.7871" stop-color="#ff0044"/><stop offset="1" stop-color="#ff002c"/></linearGradient><linearGradient id="g68" gradientUnits="userSpaceOnUse" x1="978" x2="1502"><stop offset="0" stop-color="#00d3ff"/><stop offset="0.2233" stop-color="#0097ff"/><stop offset="0.3282" stop-color="#8876ff"/><stop offset="0.4122" stop-color="#ff5aff"/><stop offset="0.4408" stop-color="#ff45da"/><stop offset="0.4828" stop-color="#ff2eb3"/><stop offset="0.5229" stop-color="#ff1e98"/><stop offset="0.5954" stop-color="#ff0976"/><stop offset="0.6412" stop-color="#ff0067"/><stop offset="0.7538" stop-color="#ff004c"/><stop offset="1" stop-color="#ff002d"/></linearGradient><linearGradient id="g69" gradientUnits="userSpaceOnUse" x1="979" x2="1500"><stop offset="0" stop-color="#00ceff"/><stop offset="0.2226" stop-color="#0093ff"/><stop offset="0.3109" stop-color="#6e78ff"/><stop offset="0.4165" stop-color="#ff56ff"/><stop offset="0.4415" stop-color="#ff43df"/><stop offset="0.4914" stop-color="#ff29b1"/><stop offset="0.5298" stop-color="#ff1b98"/><stop offset="0.6065" stop-color="#ff0775"/><stop offset="0.6392" stop-color="#ff006b"/><stop offset="0.7658" stop-color="#ff004c"/><stop offset="1" stop-color="#ff002f"/></linearGradient><linearGradient id="g70" gradientUnits="userSpaceOnUse" x1="980" x2="1498"><stop offset="0" stop-color="#00c9ff"/><stop offset="0.2239" stop-color="#018eff"/><stop offset="0.305" stop-color="#6477ff"/><stop offset="0.4208" stop-color="#ff51ff"/><stop offset="0.4575" stop-color="#ff39d3"/><stop offset="0.4961" stop-color="#ff27b2"/><stop offset="0.5367" stop-color="#ff1898"/><stop offset="0.6042" stop-color="#ff0779"/><stop offset="0.6371" stop-color="#ff006e"/><stop offset="0.778" stop-color="#ff004c"/><stop offset="1" stop-color="#ff0030"/></linearGradient><linearGradient id="g71" gradientUnits="userSpaceOnUse" x1="981" x2="1496"><stop offset="0" stop-color="#00c4ff"/><stop offset="0.2233" stop-color="#008bff"/><stop offset="0.3165" stop-color="#7070ff"/><stop offset="0.4252" stop-color="#ff4dff"/><stop offset="0.466" stop-color="#ff34d0"/><stop offset="0.501" stop-color="#ff24b3"/><stop offset="0.5437" stop-color="#ff1698"/><stop offset="0.6155" stop-color="#ff0478"/><stop offset="0.7903" stop-color="#ff004c"/><stop offset="1" stop-color="#ff0032"/></linearGradient><linearGradient id="g72" gradientUnits="userSpaceOnUse" x1="982" x2="1495"><stop offset="0" stop-color="#00c0ff"/><stop offset="0.2222" stop-color="#0087ff"/><stop offset="0.3236" stop-color="#776aff"/><stop offset="0.4288" stop-color="#ff49ff"/><stop offset="0.46" stop-color="#ff36da"/><stop offset="0.5088" stop-color="#ff20b1"/><stop offset="0.5653" stop-color="#ff0f90"/><stop offset="0.6257" stop-color="#ff0277"/><stop offset="0.7739" stop-color="#ff0051"/><stop offset="1" stop-color="#ff0033"/></linearGradient><linearGradient id="g73" gradientUnits="userSpaceOnUse" x1="983" x2="1493"><stop offset="0" stop-color="#00bbff"/><stop offset="0.2235" stop-color="#0183ff"/><stop offset="0.3275" stop-color="#7966ff"/><stop offset="0.4333" stop-color="#ff45ff"/><stop offset="0.4725" stop-color="#ff2fd3"/><stop offset="0.5078" stop-color="#ff20b6"/><stop offset="0.5549" stop-color="#ff1199"/><stop offset="0.6235" stop-color="#ff027b"/><stop offset="0.7804" stop-color="#ff0052"/><stop offset="1" stop-color="#ff0035"/></linearGradient><linearGradient id="g74" gradientUnits="userSpaceOnUse" x1="983" x2="1491"><stop offset="0" stop-color="#00b8ff"/><stop offset="0.2244" stop-color="#0080ff"/><stop offset="0.3386" stop-color="#8260ff"/><stop offset="0.439" stop-color="#ff42ff"/><stop offset="0.4705" stop-color="#ff30db"/><stop offset="0.5138" stop-color="#ff1eb7"/><stop offset="0.561" stop-color="#ff0f9a"/><stop offset="0.6299" stop-color="#ff007c"/><stop offset="0.7874" stop-color="#ff0053"/><stop offset="1" stop-color="#ff0036"/></linearGradient><linearGradient id="g75" gradientUnits="userSpaceOnUse" x1="984" x2="1489"><stop offset="0" stop-color="#00b3ff"/><stop offset="0.2238" stop-color="#007dff"/><stop offset="0.3307" stop-color="#7660ff"/><stop offset="0.4436" stop-color="#ff3eff"/><stop offset="0.4812" stop-color="#ff2ad6"/><stop offset="0.5287" stop-color="#ff18b1"/><stop offset="0.5782" stop-color="#ff0a95"/><stop offset="0.6416" stop-color="#ff007b"/><stop offset="0.7941" stop-color="#ff0054"/><stop offset="1" stop-color="#ff0038"/></linearGradient><linearGradient id="g76" gradientUnits="userSpaceOnUse" x1="985" x2="1487"><stop offset="0" stop-color="#00afff"/><stop offset="0.2251" stop-color="#0179ff"/><stop offset="0.3426" stop-color="#815aff"/><stop offset="0.4482" stop-color="#ff3bff"/><stop offset="0.49" stop-color="#ff26d3"/><stop offset="0.5398" stop-color="#ff14ae"/><stop offset="0.6135" stop-color="#ff0289"/><stop offset="0.6474" stop-color="#ff007c"/><stop offset="0.8008" stop-color="#ff0055"/><stop offset="1" stop-color="#ff003a"/></linearGradient><linearGradient id="g77" gradientUnits="userSpaceOnUse" x1="986" x2="1485"><stop offset="0" stop-color="#00abff"/><stop offset="0.2244" stop-color="#0076ff"/><stop offset="0.3487" stop-color="#8555ff"/><stop offset="0.4529" stop-color="#ff37ff"/><stop offset="0.491" stop-color="#ff25d7"/><stop offset="0.5251" stop-color="#ff18bc"/><stop offset="0.5711" stop-color="#ff0ba0"/><stop offset="0.6393" stop-color="#ff0082"/><stop offset="0.7916" stop-color="#ff0059"/><stop offset="1" stop-color="#ff003b"/></linearGradient><linearGradient id="g78" gradientUnits="userSpaceOnUse" x1="987" x2="1483"><stop offset="0" stop-color="#00a8ff"/><stop offset="0.2238" stop-color="#0074ff"/><stop offset="0.3246" stop-color="#6859ff"/><stop offset="0.4577" stop-color="#ff34ff"/><stop offset="0.4919" stop-color="#ff24db"/><stop offset="0.5343" stop-color="#ff15ba"/><stop offset="0.6149" stop-color="#ff018f"/><stop offset="0.6452" stop-color="#ff0083"/><stop offset="0.7984" stop-color="#ff005a"/><stop offset="1" stop-color="#ff003d"/></linearGradient><linearGradient id="g79" gradientUnits="userSpaceOnUse" x1="988" x2="1481"><stop offset="0" stop-color="#00a4ff"/><stop offset="0.2252" stop-color="#0170ff"/><stop offset="0.3529" stop-color="#844fff"/><stop offset="0.4625" stop-color="#ff31ff"/><stop offset="0.501" stop-color="#ff20d8"/><stop offset="0.5517" stop-color="#ff0fb3"/><stop offset="0.6187" stop-color="#ff0091"/><stop offset="0.6511" stop-color="#ff0084"/><stop offset="0.7951" stop-color="#ff005d"/><stop offset="1" stop-color="#ff003f"/></linearGradient><linearGradient id="g80" gradientUnits="userSpaceOnUse" x1="989" x2="1479"><stop offset="0" stop-color="#00a0ff"/><stop offset="0.2245" stop-color="#006dff"/><stop offset="0.3327" stop-color="#6c52ff"/><stop offset="0.4673" stop-color="#ff2eff"/><stop offset="0.5102" stop-color="#ff1cd5"/><stop offset="0.5551" stop-color="#ff0eb5"/><stop offset="0.6163" stop-color="#ff0096"/><stop offset="0.6571" stop-color="#ff0085"/><stop offset="0.802" stop-color="#ff005e"/><stop offset="1" stop-color="#ff0041"/></linearGradient><linearGradient id="g81" gradientUnits="userSpaceOnUse" x1="990" x2="1477"><stop offset="0" stop-color="#009dff"/><stop offset="0.2238" stop-color="#006bff"/><stop offset="0.3573" stop-color="#834aff"/><stop offset="0.4723" stop-color="#ff2aff"/><stop offset="0.5113" stop-color="#ff1bd9"/><stop offset="0.5585" stop-color="#ff0db7"/><stop offset="0.614" stop-color="#ff009a"/><stop offset="0.6632" stop-color="#ff0086"/><stop offset="0.7988" stop-color="#ff0061"/><stop offset="1" stop-color="#ff0042"/></linearGradient><linearGradient id="g82" gradientUnits="userSpaceOnUse" x1="990" x2="1475"><stop offset="0" stop-color="#009aff"/><stop offset="0.2268" stop-color="#0168ff"/><stop offset="0.3464" stop-color="#744bff"/><stop offset="0.4784" stop-color="#ff28ff"/><stop offset="0.5155" stop-color="#ff19db"/><stop offset="0.5629" stop-color="#ff0bb9"/><stop offset="0.6124" stop-color="#ff009f"/><stop offset="0.6784" stop-color="#ff0084"/><stop offset="0.8206" stop-color="#ff005f"/><stop offset="1" stop-color="#ff0044"/></linearGradient><linearGradient id="g83" gradientUnits="userSpaceOnUse" x1="991" x2="1473"><stop offset="0" stop-color="#0096ff"/><stop offset="0.2261" stop-color="#0065ff"/><stop offset="0.361" stop-color="#8045ff"/><stop offset="0.4834" stop-color="#ff25ff"/><stop offset="0.5166" stop-color="#ff18df"/><stop offset="0.5664" stop-color="#ff0abb"/><stop offset="0.61" stop-color="#ff00a4"/><stop offset="0.6846" stop-color="#ff0085"/><stop offset="0.8174" stop-color="#ff0062"/><stop offset="1" stop-color="#ff0046"/></linearGradient><linearGradient id="g84" gradientUnits="userSpaceOnUse" x1="992" x2="1471"><stop offset="0" stop-color="#0093ff"/><stop offset="0.2255" stop-color="#0063ff"/><stop offset="0.382" stop-color="#923dff"/><stop offset="0.4885" stop-color="#ff22ff"/><stop offset="0.5261" stop-color="#ff14dc"/><stop offset="0.5699" stop-color="#ff08bd"/><stop offset="0.6075" stop-color="#ff00a9"/><stop offset="0.6848" stop-color="#ff0088"/><stop offset="0.8246" stop-color="#ff0063"/><stop offset="1" stop-color="#ff0048"/></linearGradient><linearGradient id="g85" gradientUnits="userSpaceOnUse" x1="993" x2="1469"><stop offset="0" stop-color="#0090ff"/><stop offset="0.2269" stop-color="#0160ff"/><stop offset="0.3697" stop-color="#843fff"/><stop offset="0.4937" stop-color="#ff1fff"/><stop offset="0.5294" stop-color="#ff13de"/><stop offset="0.5735" stop-color="#ff07bf"/><stop offset="0.605" stop-color="#ff00ae"/><stop offset="0.6744" stop-color="#ff008f"/><stop offset="0.8214" stop-color="#ff0066"/><stop offset="1" stop-color="#ff004a"/></linearGradient><linearGradient id="g86" gradientUnits="userSpaceOnUse" x1="994" x2="1467"><stop offset="0" stop-color="#008cff"/><stop offset="0.2262" stop-color="#005eff"/><stop offset="0.3531" stop-color="#7141ff"/><stop offset="0.4989" stop-color="#ff1cff"/><stop offset="0.5391" stop-color="#ff0fdb"/><stop offset="0.5835" stop-color="#ff04bd"/><stop offset="0.6829" stop-color="#ff008f"/><stop offset="0.8097" stop-color="#ff006b"/><stop offset="1" stop-color="#ff004c"/></linearGradient><linearGradient id="g87" gradientUnits="userSpaceOnUse" x1="995" x2="1465"><stop offset="0" stop-color="#0089ff"/><stop offset="0.2255" stop-color="#005cff"/><stop offset="0.3489" stop-color="#6b40ff"/><stop offset="0.5043" stop-color="#ff1aff"/><stop offset="0.5468" stop-color="#ff0dda"/><stop offset="0.5872" stop-color="#ff03bf"/><stop offset="0.6809" stop-color="#ff0093"/><stop offset="0.8213" stop-color="#ff006b"/><stop offset="1" stop-color="#ff004e"/></linearGradient><linearGradient id="g88" gradientUnits="userSpaceOnUse" x1="996" x2="1464"><stop offset="0" stop-color="#0086ff"/><stop offset="0.2265" stop-color="#0159ff"/><stop offset="0.3718" stop-color="#7e38ff"/><stop offset="0.5085" stop-color="#ff17ff"/><stop offset="0.5812" stop-color="#ff04c6"/><stop offset="0.6966" stop-color="#ff0090"/><stop offset="0.8355" stop-color="#ff006a"/><stop offset="1" stop-color="#ff004f"/></linearGradient><linearGradient id="g89" gradientUnits="userSpaceOnUse" x1="997" x2="1462"><stop offset="0" stop-color="#0083ff"/><stop offset="0.2258" stop-color="#0057ff"/><stop offset="0.3677" stop-color="#7838ff"/><stop offset="0.514" stop-color="#ff15ff"/><stop offset="0.5914" stop-color="#ff01c4"/><stop offset="0.6946" stop-color="#ff0094"/><stop offset="0.8473" stop-color="#ff006a"/><stop offset="1" stop-color="#ff0051"/></linearGradient><linearGradient id="g90" gradientUnits="userSpaceOnUse" x1="998" x2="1460"><stop offset="0" stop-color="#0081ff"/><stop offset="0.2251" stop-color="#0055ff"/><stop offset="0.3658" stop-color="#7436ff"/><stop offset="0.5195" stop-color="#ff12ff"/><stop offset="0.6017" stop-color="#ff00c2"/><stop offset="0.7035" stop-color="#ff0094"/><stop offset="0.8355" stop-color="#ff006f"/><stop offset="1" stop-color="#ff0053"/></linearGradient><linearGradient id="g91" gradientUnits="userSpaceOnUse" x1="999" x2="1458"><stop offset="0" stop-color="#007eff"/><stop offset="0.2266" stop-color="#0152ff"/><stop offset="0.3791" stop-color="#7d32ff"/><stop offset="0.5251" stop-color="#ff10ff"/><stop offset="0.5839" stop-color="#ff01d2"/><stop offset="0.6144" stop-color="#ff00bf"/><stop offset="0.7124" stop-color="#ff0094"/><stop offset="0.8519" stop-color="#ff006e"/><stop offset="1" stop-color="#ff0055"/></linearGradient><linearGradient id="g92" gradientUnits="userSpaceOnUse" x1="1000" x2="1456"><stop offset="0" stop-color="#007bff"/><stop offset="0.2259" stop-color="#0050ff"/><stop offset="0.3904" stop-color="#842eff"/><stop offset="0.5307" stop-color="#ff0eff"/><stop offset="0.5811" stop-color="#ff01d8"/><stop offset="0.6162" stop-color="#ff00c2"/><stop offset="0.7215" stop-color="#ff0094"/><stop offset="0.8684" stop-color="#ff006d"/><stop offset="1" stop-color="#ff0057"/></linearGradient><linearGradient id="g93" gradientUnits="userSpaceOnUse" x1="1001" x2="1454"><stop offset="0" stop-color="#0078ff"/><stop offset="0.2252" stop-color="#004eff"/><stop offset="0.3996" stop-color="#892aff"/><stop offset="0.5364" stop-color="#ff0cff"/><stop offset="0.6093" stop-color="#ff00ca"/><stop offset="0.7108" stop-color="#ff009b"/><stop offset="0.83" stop-color="#ff0078"/><stop offset="1" stop-color="#ff0059"/></linearGradient><linearGradient id="g94" gradientUnits="userSpaceOnUse" x1="1002" x2="1452"><stop offset="0" stop-color="#0076ff"/><stop offset="0.2267" stop-color="#014cff"/><stop offset="0.3867" stop-color="#7c2cff"/><stop offset="0.5422" stop-color="#ff09ff"/><stop offset="0.5822" stop-color="#ff00e0"/><stop offset="0.62" stop-color="#ff00c8"/><stop offset="0.72" stop-color="#ff009b"/><stop offset="0.8244" stop-color="#ff007c"/><stop offset="1" stop-color="#ff005b"/></linearGradient><linearGradient id="g95" gradientUnits="userSpaceOnUse" x1="1003" x2="1450"><stop offset="0" stop-color="#0073ff"/><stop offset="0.226" stop-color="#004aff"/><stop offset="0.396" stop-color="#8128ff"/><stop offset="0.5481" stop-color="#ff07ff"/><stop offset="0.5794" stop-color="#ff00e7"/><stop offset="0.6219" stop-color="#ff00cb"/><stop offset="0.7181" stop-color="#ff009f"/><stop offset="0.8233" stop-color="#ff007f"/><stop offset="1" stop-color="#ff005d"/></linearGradient><linearGradient id="g96" gradientUnits="userSpaceOnUse" x1="1004" x2="1448"><stop offset="0" stop-color="#0071ff"/><stop offset="0.2252" stop-color="#0048ff"/><stop offset="0.3694" stop-color="#6a2cff"/><stop offset="0.5541" stop-color="#ff05ff"/><stop offset="0.6329" stop-color="#ff00c9"/><stop offset="0.7275" stop-color="#ff009f"/><stop offset="0.8468" stop-color="#ff007c"/><stop offset="1" stop-color="#ff005f"/></linearGradient><linearGradient id="g97" gradientUnits="userSpaceOnUse" x1="1005" x2="1446"><stop offset="0" stop-color="#006eff"/><stop offset="0.2268" stop-color="#0146ff"/><stop offset="0.4036" stop-color="#8224ff"/><stop offset="0.5601" stop-color="#ff03ff"/><stop offset="0.6349" stop-color="#ff00cc"/><stop offset="0.7392" stop-color="#ff009e"/><stop offset="0.8458" stop-color="#ff007f"/><stop offset="1" stop-color="#ff0062"/></linearGradient><linearGradient id="g98" gradientUnits="userSpaceOnUse" x1="1006" x2="1444"><stop offset="0" stop-color="#006cff"/><stop offset="0.226" stop-color="#0045ff"/><stop offset="0.411" stop-color="#8521ff"/><stop offset="0.5662" stop-color="#ff01ff"/><stop offset="0.6461" stop-color="#ff00ca"/><stop offset="0.7374" stop-color="#ff00a2"/><stop offset="0.8699" stop-color="#ff007c"/><stop offset="1" stop-color="#ff0064"/></linearGradient><linearGradient id="g99" gradientUnits="userSpaceOnUse" x1="1007" x2="1442"><stop offset="0" stop-color="#0069ff"/><stop offset="0.2253" stop-color="#0043ff"/><stop offset="0.4184" stop-color="#881fff"/><stop offset="0.5724" stop-color="#ff00ff"/><stop offset="0.6483" stop-color="#ff00cd"/><stop offset="0.7494" stop-color="#ff00a1"/><stop offset="0.8644" stop-color="#ff0080"/><stop offset="1" stop-color="#ff0066"/></linearGradient><linearGradient id="g100" gradientUnits="userSpaceOnUse" x1="1008" x2="1440"><stop offset="0" stop-color="#0067ff"/><stop offset="0.2269" stop-color="#0141ff"/><stop offset="0.4329" stop-color="#901bff"/><stop offset="0.5787" stop-color="#ff00ff"/><stop offset="0.6597" stop-color="#ff00cb"/><stop offset="0.7477" stop-color="#ff00a5"/><stop offset="0.8634" stop-color="#ff0083"/><stop offset="1" stop-color="#ff0068"/></linearGradient><linearGradient id="g101" gradientUnits="userSpaceOnUse" x1="1009" x2="1438"><stop offset="0" stop-color="#0065ff"/><stop offset="0.2261" stop-color="#003fff"/><stop offset="0.3986" stop-color="#7520ff"/><stop offset="0.5851" stop-color="#ff00ff"/><stop offset="0.662" stop-color="#ff00ce"/><stop offset="0.7599" stop-color="#ff00a4"/><stop offset="0.8788" stop-color="#ff0082"/><stop offset="1" stop-color="#ff006b"/></linearGradient><linearGradient id="g102" gradientUnits="userSpaceOnUse" x1="1010" x2="1436"><stop offset="0" stop-color="#0063ff"/><stop offset="0.2254" stop-color="#003eff"/><stop offset="0.4061" stop-color="#781eff"/><stop offset="0.5587" stop-color="#e600ff"/><stop offset="0.5915" stop-color="#ff00ff"/><stop offset="0.662" stop-color="#ff00d2"/><stop offset="0.7582" stop-color="#ff00a8"/><stop offset="0.8615" stop-color="#ff0089"/><stop offset="1" stop-color="#ff006d"/></linearGradient><linearGradient id="g103" gradientUnits="userSpaceOnUse" x1="1011" x2="1434"><stop offset="0" stop-color="#0060ff"/><stop offset="0.2293" stop-color="#023cff"/><stop offset="0.4137" stop-color="#7b1bff"/><stop offset="0.5556" stop-color="#e000ff"/><stop offset="0.5981" stop-color="#ff00ff"/><stop offset="0.6738" stop-color="#ff00d0"/><stop offset="0.7565" stop-color="#ff00ac"/><stop offset="0.8771" stop-color="#ff0088"/><stop offset="1" stop-color="#ff006f"/></linearGradient><linearGradient id="g104" gradientUnits="userSpaceOnUse" x1="1012" x2="1433"><stop offset="0" stop-color="#005eff"/><stop offset="0.2304" stop-color="#033aff"/><stop offset="0.5511" stop-color="#d900ff"/><stop offset="0.6033" stop-color="#ff00ff"/><stop offset="0.6722" stop-color="#ff00d4"/><stop offset="0.7672" stop-color="#ff00ab"/><stop offset="0.8741" stop-color="#ff008b"/><stop offset="1" stop-color="#ff0071"/></linearGradient><linearGradient id="g105" gradientUnits="userSpaceOnUse" x1="1013" x2="1431"><stop offset="0" stop-color="#005cff"/><stop offset="0.2249" stop-color="#0039ff"/><stop offset="0.4043" stop-color="#711bff"/><stop offset="0.5478" stop-color="#d300ff"/><stop offset="0.61" stop-color="#ff00ff"/><stop offset="0.6842" stop-color="#ff00d2"/><stop offset="0.7823" stop-color="#ff00a9"/><stop offset="0.89" stop-color="#ff008a"/><stop offset="1" stop-color="#ff0074"/></linearGradient><linearGradient id="g106" gradientUnits="userSpaceOnUse" x1="1015" x2="1429"><stop offset="0" stop-color="#005aff"/><stop offset="0.2222" stop-color="#0038ff"/><stop offset="0.3889" stop-color="#661cff"/><stop offset="0.5435" stop-color="#cd00ff"/><stop offset="0.6159" stop-color="#ff00ff"/><stop offset="0.6836" stop-color="#ff00d6"/><stop offset="0.7802" stop-color="#ff00ad"/><stop offset="0.8889" stop-color="#ff008d"/><stop offset="1" stop-color="#ff0076"/></linearGradient><linearGradient id="g107" gradientUnits="userSpaceOnUse" x1="1016" x2="1427"><stop offset="0" stop-color="#0058ff"/><stop offset="0.2214" stop-color="#0036ff"/><stop offset="0.3966" stop-color="#691aff"/><stop offset="0.5401" stop-color="#c700ff"/><stop offset="0.6229" stop-color="#ff00ff"/><stop offset="0.6959" stop-color="#ff00d4"/><stop offset="0.7786" stop-color="#ff00b1"/><stop offset="0.8808" stop-color="#ff0092"/><stop offset="1" stop-color="#ff0079"/></linearGradient><linearGradient id="g108" gradientUnits="userSpaceOnUse" x1="1017" x2="1425"><stop offset="0" stop-color="#0056ff"/><stop offset="0.223" stop-color="#0035ff"/><stop offset="0.5368" stop-color="#c100ff"/><stop offset="0.6299" stop-color="#ff00ff"/><stop offset="0.7083" stop-color="#ff00d2"/><stop offset="0.7941" stop-color="#ff00af"/><stop offset="0.9044" stop-color="#ff008f"/><stop offset="1" stop-color="#ff007b"/></linearGradient><linearGradient id="g109" gradientUnits="userSpaceOnUse" x1="1018" x2="1423"><stop offset="0" stop-color="#0054ff"/><stop offset="0.2222" stop-color="#0033ff"/><stop offset="0.5333" stop-color="#bb00ff"/><stop offset="0.637" stop-color="#ff00ff"/><stop offset="0.6963" stop-color="#ff00dc"/><stop offset="0.7926" stop-color="#ff00b3"/><stop offset="0.8963" stop-color="#ff0094"/><stop offset="1" stop-color="#ff007e"/></linearGradient><linearGradient id="g110" gradientUnits="userSpaceOnUse" x1="1019" x2="1421"><stop offset="0" stop-color="#0052ff"/><stop offset="0.2214" stop-color="#0032ff"/><stop offset="0.5299" stop-color="#b500ff"/><stop offset="0.6443" stop-color="#ff00ff"/><stop offset="0.7189" stop-color="#ff00d5"/><stop offset="0.7886" stop-color="#ff00b8"/><stop offset="0.908" stop-color="#ff0094"/><stop offset="1" stop-color="#ff0080"/></linearGradient><linearGradient id="g111" gradientUnits="userSpaceOnUse" x1="1020" x2="1419"><stop offset="0" stop-color="#0050ff"/><stop offset="0.2231" stop-color="#0030ff"/><stop offset="0.5263" stop-color="#b000ff"/><stop offset="0.6516" stop-color="#ff00ff"/><stop offset="0.7193" stop-color="#ff00d9"/><stop offset="0.807" stop-color="#ff00b5"/><stop offset="1" stop-color="#ff0083"/></linearGradient><linearGradient id="g112" gradientUnits="userSpaceOnUse" x1="1021" x2="1417"><stop offset="0" stop-color="#004eff"/><stop offset="0.2222" stop-color="#002fff"/><stop offset="0.5227" stop-color="#ab00ff"/><stop offset="0.6591" stop-color="#ff00ff"/><stop offset="0.7197" stop-color="#ff00dd"/><stop offset="0.8056" stop-color="#ff00b9"/><stop offset="0.904" stop-color="#ff009b"/><stop offset="1" stop-color="#ff0086"/></linearGradient><linearGradient id="g113" gradientUnits="userSpaceOnUse" x1="1022" x2="1415"><stop offset="0" stop-color="#004cff"/><stop offset="0.2214" stop-color="#002eff"/><stop offset="0.5191" stop-color="#a500ff"/><stop offset="0.6667" stop-color="#ff00ff"/><stop offset="0.7303" stop-color="#ff00dc"/><stop offset="0.8244" stop-color="#ff00b6"/><stop offset="1" stop-color="#ff0088"/></linearGradient><linearGradient id="g114" gradientUnits="userSpaceOnUse" x1="1024" x2="1413"><stop offset="0" stop-color="#004aff"/><stop offset="0.2211" stop-color="#002cff"/><stop offset="0.5141" stop-color="#a000ff"/><stop offset="0.6735" stop-color="#ff00ff"/><stop offset="0.7429" stop-color="#ff00da"/><stop offset="0.8201" stop-color="#ff00bb"/><stop offset="1" stop-color="#ff008b"/></linearGradient><linearGradient id="g115" gradientUnits="userSpaceOnUse" x1="1025" x2="1411"><stop offset="0" stop-color="#0049ff"/><stop offset="0.2202" stop-color="#002bff"/><stop offset="0.513" stop-color="#9d00ff"/><stop offset="0.6813" stop-color="#ff00ff"/><stop offset="0.7409" stop-color="#ff00df"/><stop offset="0.8161" stop-color="#ff00c0"/><stop offset="1" stop-color="#ff008e"/></linearGradient><linearGradient id="g116" gradientUnits="userSpaceOnUse" x1="1026" x2="1409"><stop offset="0" stop-color="#0047ff"/><stop offset="0.2193" stop-color="#002aff"/><stop offset="0.5091" stop-color="#9800ff"/><stop offset="0.6893" stop-color="#ff00ff"/><stop offset="0.7546" stop-color="#ff00dd"/><stop offset="0.8407" stop-color="#ff00bb"/><stop offset="1" stop-color="#ff0091"/></linearGradient><linearGradient id="g117" gradientUnits="userSpaceOnUse" x1="1027" x2="1407"><stop offset="0" stop-color="#0045ff"/><stop offset="0.2211" stop-color="#0028ff"/><stop offset="0.5053" stop-color="#9300ff"/><stop offset="0.6974" stop-color="#ff00ff"/><stop offset="0.7658" stop-color="#ff00dc"/><stop offset="0.8368" stop-color="#ff00c0"/><stop offset="1" stop-color="#ff0094"/></linearGradient><linearGradient id="g118" gradientUnits="userSpaceOnUse" x1="1028" x2="1405"><stop offset="0" stop-color="#0044ff"/><stop offset="0.2202" stop-color="#0027ff"/><stop offset="0.5013" stop-color="#8e00ff"/><stop offset="0.7056" stop-color="#ff00ff"/><stop offset="0.8276" stop-color="#ff00c7"/><stop offset="1" stop-color="#ff0096"/></linearGradient><linearGradient id="g119" gradientUnits="userSpaceOnUse" x1="1029" x2="1403"><stop offset="0" stop-color="#0042ff"/><stop offset="0.2193" stop-color="#0026ff"/><stop offset="0.4973" stop-color="#8a00ff"/><stop offset="0.7139" stop-color="#ff00ff"/><stop offset="0.8583" stop-color="#ff00c0"/><stop offset="1" stop-color="#ff0099"/></linearGradient><linearGradient id="g120" gradientUnits="userSpaceOnUse" x1="1031" x2="1401"><stop offset="0" stop-color="#0040ff"/><stop offset="0.2189" stop-color="#0025ff"/><stop offset="0.4919" stop-color="#8500ff"/><stop offset="0.7216" stop-color="#ff00ff"/><stop offset="0.8541" stop-color="#ff00c5"/><stop offset="1" stop-color="#ff009c"/></linearGradient><linearGradient id="g121" gradientUnits="userSpaceOnUse" x1="1032" x2="1400"><stop offset="0" stop-color="#003eff"/><stop offset="0.2174" stop-color="#0024ff"/><stop offset="0.4864" stop-color="#8100ff"/><stop offset="0.7283" stop-color="#ff00ff"/><stop offset="0.8016" stop-color="#ff00dc"/><stop offset="0.8777" stop-color="#ff00c0"/><stop offset="1" stop-color="#ff009f"/></linearGradient><linearGradient id="g122" gradientUnits="userSpaceOnUse" x1="1033" x2="1398"><stop offset="0" stop-color="#003dff"/><stop offset="0.2164" stop-color="#0023ff"/><stop offset="0.4822" stop-color="#7c00ff"/><stop offset="0.737" stop-color="#ff00ff"/><stop offset="0.8767" stop-color="#ff00c4"/><stop offset="1" stop-color="#ff00a2"/></linearGradient><linearGradient id="g123" gradientUnits="userSpaceOnUse" x1="1034" x2="1396"><stop offset="0" stop-color="#003bff"/><stop offset="0.2182" stop-color="#0021ff"/><stop offset="0.4779" stop-color="#7800ff"/><stop offset="0.7459" stop-color="#ff00ff"/><stop offset="0.8729" stop-color="#ff00c9"/><stop offset="1" stop-color="#ff00a5"/></linearGradient><linearGradient id="g124" gradientUnits="userSpaceOnUse" x1="1035" x2="1394"><stop offset="0" stop-color="#003aff"/><stop offset="0.2173" stop-color="#0020ff"/><stop offset="0.4735" stop-color="#7400ff"/><stop offset="0.7549" stop-color="#ff00ff"/><stop offset="0.9025" stop-color="#ff00c3"/><stop offset="1" stop-color="#ff00a8"/></linearGradient><linearGradient id="g125" gradientUnits="userSpaceOnUse" x1="1036" x2="1392"><stop offset="0" stop-color="#0038ff"/><stop offset="0.2163" stop-color="#0020ff"/><stop offset="0.4691" stop-color="#7000ff"/><stop offset="0.764" stop-color="#ff00ff"/><stop offset="0.9017" stop-color="#ff00c7"/><stop offset="1" stop-color="#ff00ac"/></linearGradient><linearGradient id="g126" gradientUnits="userSpaceOnUse" x1="1038" x2="1390"><stop offset="0" stop-color="#0037ff"/><stop offset="0.2159" stop-color="#001eff"/><stop offset="0.4631" stop-color="#6c00ff"/><stop offset="0.7727" stop-color="#ff00ff"/><stop offset="0.858" stop-color="#ff00da"/><stop offset="1" stop-color="#ff00af"/></linearGradient><linearGradient id="g127" gradientUnits="userSpaceOnUse" x1="1039" x2="1388"><stop offset="0" stop-color="#0035ff"/><stop offset="0.2149" stop-color="#001dff"/><stop offset="0.4585" stop-color="#6800ff"/><stop offset="0.7822" stop-color="#ff00ff"/><stop offset="0.8481" stop-color="#ff00e2"/><stop offset="1" stop-color="#ff00b2"/></linearGradient><linearGradient id="g128" gradientUnits="userSpaceOnUse" x1="1040" x2="1386"><stop offset="0" stop-color="#0034ff"/><stop offset="0.2139" stop-color="#001cff"/><stop offset="0.4538" stop-color="#6400ff"/><stop offset="0.7919" stop-color="#ff00ff"/><stop offset="0.8642" stop-color="#ff00e0"/><stop offset="1" stop-color="#ff00b6"/></linearGradient><linearGradient id="g129" gradientUnits="userSpaceOnUse" x1="1041" x2="1384"><stop offset="0" stop-color="#0033ff"/><stop offset="0.2157" stop-color="#001bff"/><stop offset="0.449" stop-color="#6100ff"/><stop offset="0.8017" stop-color="#ff00ff"/><stop offset="0.8805" stop-color="#ff00de"/><stop offset="1" stop-color="#ff00b9"/></linearGradient><linearGradient id="g130" gradientUnits="userSpaceOnUse" x1="1043" x2="1382"><stop offset="0" stop-color="#0031ff"/><stop offset="0.2124" stop-color="#001aff"/><stop offset="0.4425" stop-color="#5d00ff"/><stop offset="0.8112" stop-color="#ff00ff"/><stop offset="0.9086" stop-color="#ff00d8"/><stop offset="1" stop-color="#ff00bd"/></linearGradient><linearGradient id="g131" gradientUnits="userSpaceOnUse" x1="1044" x2="1380"><stop offset="0" stop-color="#0030ff"/><stop offset="0.2113" stop-color="#0019ff"/><stop offset="0.4375" stop-color="#5900ff"/><stop offset="0.8214" stop-color="#ff00ff"/><stop offset="1" stop-color="#ff00c0"/></linearGradient><linearGradient id="g132" gradientUnits="userSpaceOnUse" x1="1045" x2="1378"><stop offset="0" stop-color="#002eff"/><stop offset="0.2132" stop-color="#0018ff"/><stop offset="0.4324" stop-color="#5600ff"/><stop offset="0.8318" stop-color="#ff00ff"/><stop offset="1" stop-color="#ff00c4"/></linearGradient><linearGradient id="g133" gradientUnits="userSpaceOnUse" x1="1046" x2="1376"><stop offset="0" stop-color="#002dff"/><stop offset="0.2121" stop-color="#0017ff"/><stop offset="0.4273" stop-color="#5200ff"/><stop offset="0.8424" stop-color="#ff00ff"/><stop offset="1" stop-color="#ff00c8"/></linearGradient><linearGradient id="g134" gradientUnits="userSpaceOnUse" x1="1047" x2="1374"><stop offset="0" stop-color="#002cff"/><stop offset="0.211" stop-color="#0017ff"/><stop offset="0.422" stop-color="#4f00ff"/><stop offset="0.8532" stop-color="#ff00ff"/><stop offset="1" stop-color="#ff00cc"/></linearGradient><linearGradient id="g135" gradientUnits="userSpaceOnUse" x1="1049" x2="1372"><stop offset="0" stop-color="#002aff"/><stop offset="0.2105" stop-color="#0015ff"/><stop offset="0.4149" stop-color="#4b00ff"/><stop offset="0.8638" stop-color="#ff00ff"/><stop offset="1" stop-color="#ff00cf"/></linearGradient><linearGradient id="g136" gradientUnits="userSpaceOnUse" x1="1050" x2="1370"><stop offset="0" stop-color="#0029ff"/><stop offset="0.2094" stop-color="#0015ff"/><stop offset="0.4094" stop-color="#4800ff"/><stop offset="0.875" stop-color="#ff00ff"/><stop offset="1" stop-color="#ff00d3"/></linearGradient><linearGradient id="g137" gradientUnits="userSpaceOnUse" x1="1051" x2="1369"><stop offset="0" stop-color="#0028ff"/><stop offset="0.2075" stop-color="#0014ff"/><stop offset="0.4025" stop-color="#4500ff"/><stop offset="0.8836" stop-color="#ff00ff"/><stop offset="1" stop-color="#ff00d7"/></linearGradient><linearGradient id="g138" gradientUnits="userSpaceOnUse" x1="1052" x2="1367"><stop offset="0" stop-color="#0027ff"/><stop offset="0.2095" stop-color="#0013ff"/><stop offset="0.3968" stop-color="#4200ff"/><stop offset="0.8952" stop-color="#ff00ff"/><stop offset="1" stop-color="#ff00db"/></linearGradient><linearGradient id="g139" gradientUnits="userSpaceOnUse" x1="1054" x2="1365"><stop offset="0" stop-color="#0025ff"/><stop offset="0.2058" stop-color="#0012ff"/><stop offset="0.3891" stop-color="#3f00ff"/><stop offset="0.9068" stop-color="#ff00ff"/><stop offset="1" stop-color="#ff00df"/></linearGradient><linearGradient id="g140" gradientUnits="userSpaceOnUse" x1="1055" x2="1363"><stop offset="0" stop-color="#0024ff"/><stop offset="0.2045" stop-color="#0011ff"/><stop offset="0.3831" stop-color="#3c00ff"/><stop offset="0.9188" stop-color="#ff00ff"/><stop offset="1" stop-color="#ff00e3"/></linearGradient><linearGradient id="g141" gradientUnits="userSpaceOnUse" x1="1056" x2="1361"><stop offset="0" stop-color="#0023ff"/><stop offset="0.2066" stop-color="#0010ff"/><stop offset="0.377" stop-color="#3900ff"/><stop offset="0.6459" stop-color="#9500ff"/><stop offset="0.9311" stop-color="#ff00ff"/><stop offset="1" stop-color="#ff00e7"/></linearGradient><linearGradient id="g142" gradientUnits="userSpaceOnUse" x1="1057" x2="1359"><stop offset="0" stop-color="#0022ff"/><stop offset="0.2053" stop-color="#0010ff"/><stop offset="0.3709" stop-color="#3600ff"/><stop offset="0.6391" stop-color="#9000ff"/><stop offset="0.9437" stop-color="#ff00ff"/><stop offset="1" stop-color="#ff00ec"/></linearGradient><linearGradient id="g143" gradientUnits="userSpaceOnUse" x1="1059" x2="1357"><stop offset="0" stop-color="#0020ff"/><stop offset="0.2013" stop-color="#000fff"/><stop offset="0.3624" stop-color="#3300ff"/><stop offset="0.6745" stop-color="#9a00ff"/><stop offset="0.9564" stop-color="#ff00ff"/><stop offset="1" stop-color="#ff00f0"/></linearGradient><linearGradient id="g144" gradientUnits="userSpaceOnUse" x1="1060" x2="1355"><stop offset="0" stop-color="#001fff"/><stop offset="0.2034" stop-color="#000eff"/><stop offset="0.3559" stop-color="#3000ff"/><stop offset="0.6915" stop-color="#9d00ff"/><stop offset="0.9695" stop-color="#ff00ff"/><stop offset="1" stop-color="#ff00f5"/></linearGradient><linearGradient id="g145" gradientUnits="userSpaceOnUse" x1="1061" x2="1353"><stop offset="0" stop-color="#001eff"/><stop offset="0.2021" stop-color="#000dff"/><stop offset="0.3493" stop-color="#2d00ff"/><stop offset="0.6849" stop-color="#9800ff"/><stop offset="0.9829" stop-color="#ff00ff"/><stop offset="1" stop-color="#ff00f9"/></linearGradient><linearGradient id="g146" gradientUnits="userSpaceOnUse" x1="1063" x2="1351"><stop offset="0" stop-color="#001dff"/><stop offset="0.1979" stop-color="#000dff"/><stop offset="0.3403" stop-color="#2a00ff"/><stop offset="1" stop-color="#ff00fe"/></linearGradient><linearGradient id="g147" gradientUnits="userSpaceOnUse" x1="1064" x2="1349"><stop offset="0" stop-color="#001cff"/><stop offset="0.2" stop-color="#000cff"/><stop offset="0.3368" stop-color="#2800ff"/><stop offset="1" stop-color="#fb00ff"/></linearGradient><linearGradient id="g148" gradientUnits="userSpaceOnUse" x1="1065" x2="1347"><stop offset="0" stop-color="#001bff"/><stop offset="0.1986" stop-color="#000bff"/><stop offset="0.3298" stop-color="#2600ff"/><stop offset="1" stop-color="#f600ff"/></linearGradient><linearGradient id="g149" gradientUnits="userSpaceOnUse" x1="1067" x2="1345"><stop offset="0" stop-color="#0019ff"/><stop offset="0.1942" stop-color="#000aff"/><stop offset="0.3201" stop-color="#2300ff"/><stop offset="1" stop-color="#f200ff"/></linearGradient><linearGradient id="g150" gradientUnits="userSpaceOnUse" x1="1068" x2="1343"><stop offset="0" stop-color="#0018ff"/><stop offset="0.1964" stop-color="#0009ff"/><stop offset="0.3127" stop-color="#2100ff"/><stop offset="0.68" stop-color="#8a00ff"/><stop offset="1" stop-color="#ed00ff"/></linearGradient><linearGradient id="g151" gradientUnits="userSpaceOnUse" x1="1069" x2="1341"><stop offset="0" stop-color="#0017ff"/><stop offset="0.1949" stop-color="#0009ff"/><stop offset="0.3051" stop-color="#1e00ff"/><stop offset="1" stop-color="#e900ff"/></linearGradient><linearGradient id="g152" gradientUnits="userSpaceOnUse" x1="1071" x2="1339"><stop offset="0" stop-color="#0016ff"/><stop offset="0.1903" stop-color="#0008ff"/><stop offset="0.2948" stop-color="#1b00ff"/><stop offset="1" stop-color="#e400ff"/></linearGradient><linearGradient id="g153" gradientUnits="userSpaceOnUse" x1="1072" x2="1338"><stop offset="0" stop-color="#0015ff"/><stop offset="0.1955" stop-color="#0107ff"/><stop offset="0.2857" stop-color="#1900ff"/><stop offset="1" stop-color="#e100ff"/></linearGradient><linearGradient id="g154" gradientUnits="userSpaceOnUse" x1="1074" x2="1336"><stop offset="0" stop-color="#0014ff"/><stop offset="0.187" stop-color="#0007ff"/><stop offset="0.2748" stop-color="#1700ff"/><stop offset="1" stop-color="#dd00ff"/></linearGradient><linearGradient id="g155" gradientUnits="userSpaceOnUse" x1="1075" x2="1334"><stop offset="0" stop-color="#0013ff"/><stop offset="0.1853" stop-color="#0006ff"/><stop offset="0.2664" stop-color="#1400ff"/><stop offset="1" stop-color="#d900ff"/></linearGradient><linearGradient id="g156" gradientUnits="userSpaceOnUse" x1="1076" x2="1332"><stop offset="0" stop-color="#0012ff"/><stop offset="0.1914" stop-color="#0105ff"/><stop offset="0.2578" stop-color="#1200ff"/><stop offset="1" stop-color="#d500ff"/></linearGradient><linearGradient id="g157" gradientUnits="userSpaceOnUse" x1="1078" x2="1330"><stop offset="0" stop-color="#0011ff"/><stop offset="0.1825" stop-color="#0005ff"/><stop offset="0.246" stop-color="#0f00ff"/><stop offset="1" stop-color="#d000ff"/></linearGradient><linearGradient id="g158" gradientUnits="userSpaceOnUse" x1="1079" x2="1328"><stop offset="0" stop-color="#0010ff"/><stop offset="0.1807" stop-color="#0004ff"/><stop offset="1" stop-color="#cc00ff"/></linearGradient><linearGradient id="g159" gradientUnits="userSpaceOnUse" x1="1081" x2="1326"><stop offset="0" stop-color="#000fff"/><stop offset="0.1837" stop-color="#0103ff"/><stop offset="1" stop-color="#c900ff"/></linearGradient><linearGradient id="g160" gradientUnits="userSpaceOnUse" x1="1082" x2="1324"><stop offset="0" stop-color="#000eff"/><stop offset="0.1777" stop-color="#0003ff"/><stop offset="1" stop-color="#c500ff"/></linearGradient><linearGradient id="g161" gradientUnits="userSpaceOnUse" x1="1084" x2="1322"><stop offset="0" stop-color="#000dff"/><stop offset="0.1723" stop-color="#0002ff"/><stop offset="1" stop-color="#c100ff"/></linearGradient><linearGradient id="g162" gradientUnits="userSpaceOnUse" x1="1085" x2="1320"><stop offset="0" stop-color="#000cff"/><stop offset="0.1787" stop-color="#0101ff"/><stop offset="1" stop-color="#bd00ff"/></linearGradient><linearGradient id="g163" gradientUnits="userSpaceOnUse" x1="1086" x2="1318"><stop offset="0" stop-color="#000bff"/><stop offset="0.1724" stop-color="#0001ff"/><stop offset="1" stop-color="#b900ff"/></linearGradient><linearGradient id="g164" gradientUnits="userSpaceOnUse" x1="1088" x2="1316"><stop offset="0" stop-color="#000aff"/><stop offset="0.1667" stop-color="#0000ff"/><stop offset="1" stop-color="#b600ff"/></linearGradient><linearGradient id="g165" gradientUnits="userSpaceOnUse" x1="1089" x2="1314"><stop offset="0" stop-color="#0009ff"/><stop offset="0.1733" stop-color="#0100ff"/><stop offset="1" stop-color="#b200ff"/></linearGradient><linearGradient id="g166" gradientUnits="userSpaceOnUse" x1="1091" x2="1312"><stop offset="0" stop-color="#0008ff"/><stop offset="0.1629" stop-color="#0000ff"/><stop offset="1" stop-color="#af00ff"/></linearGradient><linearGradient id="g167" gradientUnits="userSpaceOnUse" x1="1092" x2="1310"><stop offset="0" stop-color="#0007ff"/><stop offset="0.1606" stop-color="#0000ff"/><stop offset="1" stop-color="#ab00ff"/></linearGradient><linearGradient id="g168" gradientUnits="userSpaceOnUse" x1="1094" x2="1308"><stop offset="0" stop-color="#0006ff"/><stop offset="0.1636" stop-color="#0100ff"/><stop offset="1" stop-color="#a800ff"/></linearGradient><linearGradient id="g169" gradientUnits="userSpaceOnUse" x1="1096" x2="1306"><stop offset="0" stop-color="#0005ff"/><stop offset="0.1524" stop-color="#0000ff"/><stop offset="1" stop-color="#a400ff"/></linearGradient><linearGradient id="g170" gradientUnits="userSpaceOnUse" x1="1097" x2="1305"><stop offset="0" stop-color="#0005ff"/><stop offset="0.1683" stop-color="#0300ff"/><stop offset="1" stop-color="#a200ff"/></linearGradient><linearGradient id="g171" gradientUnits="userSpaceOnUse" x1="1099" x2="1303"><stop offset="0" stop-color="#0004ff"/><stop offset="0.152" stop-color="#0100ff"/><stop offset="1" stop-color="#9f00ff"/></linearGradient><linearGradient id="g172" gradientUnits="userSpaceOnUse" x1="1100" x2="1301"><stop offset="0" stop-color="#0003ff"/><stop offset="0.1443" stop-color="#0000ff"/><stop offset="1" stop-color="#9c00ff"/></linearGradient><linearGradient id="g173" gradientUnits="userSpaceOnUse" x1="1102" x2="1299"><stop offset="0" stop-color="#0002ff"/><stop offset="0.1574" stop-color="#0300ff"/><stop offset="1" stop-color="#9800ff"/></linearGradient><linearGradient id="g174" gradientUnits="userSpaceOnUse" x1="1104" x2="1297"><stop offset="0" stop-color="#0001ff"/><stop offset="0.1399" stop-color="#0100ff"/><stop offset="1" stop-color="#9500ff"/></linearGradient><linearGradient id="g175" gradientUnits="userSpaceOnUse" x1="1105" x2="1295"><stop offset="0" stop-color="#0000ff"/><stop offset="0.1316" stop-color="#0000ff"/><stop offset="1" stop-color="#9200ff"/></linearGradient><linearGradient id="g176" gradientUnits="userSpaceOnUse" x1="1107" x2="1293"><stop offset="0" stop-color="#0000ff"/><stop offset="0.1452" stop-color="#0300ff"/><stop offset="1" stop-color="#8f00ff"/></linearGradient><linearGradient id="g177" gradientUnits="userSpaceOnUse" x1="1108" x2="1291"><stop offset="0" stop-color="#0000ff"/><stop offset="0.1311" stop-color="#0100ff"/><stop offset="1" stop-color="#8c00ff"/></linearGradient><linearGradient id="g178" gradientUnits="userSpaceOnUse" x1="1110" x2="1289"><stop offset="0" stop-color="#0000ff"/><stop offset="0.1173" stop-color="#0000ff"/><stop offset="1" stop-color="#8900ff"/></linearGradient><linearGradient id="g179" gradientUnits="userSpaceOnUse" x1="1112" x2="1287"><stop offset="0" stop-color="#0000ff"/><stop offset="0.1314" stop-color="#0300ff"/><stop offset="1" stop-color="#8600ff"/></linearGradient><linearGradient id="g180" gradientUnits="userSpaceOnUse" x1="1114" x2="1285"><stop offset="0" stop-color="#0000ff"/><stop offset="0.1111" stop-color="#0100ff"/><stop offset="1" stop-color="#8300ff"/></linearGradient><linearGradient id="g181" gradientUnits="userSpaceOnUse" x1="1115" x2="1283"><stop offset="0" stop-color="#0000ff"/><stop offset="0.1012" stop-color="#0000ff"/><stop offset="1" stop-color="#8000ff"/></linearGradient><linearGradient id="g182" gradientUnits="userSpaceOnUse" x1="1117" x2="1281"><stop offset="0" stop-color="#0000ff"/><stop offset="0.1159" stop-color="#0300ff"/><stop offset="1" stop-color="#7e00ff"/></linearGradient><linearGradient id="g183" gradientUnits="userSpaceOnUse" x1="1119" x2="1279"><stop offset="0" stop-color="#0000ff"/><stop offset="0.09375" stop-color="#0100ff"/><stop offset="1" stop-color="#7b00ff"/></linearGradient><linearGradient id="g184" gradientUnits="userSpaceOnUse" x1="1121" x2="1277"><stop offset="0" stop-color="#0000ff"/><stop offset="0.07692" stop-color="#0000ff"/><stop offset="1" stop-color="#7800ff"/></linearGradient><linearGradient id="g185" gradientUnits="userSpaceOnUse" x1="1123" x2="1275"><stop offset="0" stop-color="#0000ff"/><stop offset="0.09211" stop-color="#0300ff"/><stop offset="1" stop-color="#7500ff"/></linearGradient><linearGradient id="g186" gradientUnits="userSpaceOnUse" x1="1124" x2="1274"><stop offset="0" stop-color="#0000ff"/><stop offset="0.07333" stop-color="#0100ff"/><stop offset="1" stop-color="#7400ff"/></linearGradient><linearGradient id="g187" gradientUnits="userSpaceOnUse" x1="1126" x2="1272"><stop offset="0" stop-color="#0000ff"/><stop offset="0.05479" stop-color="#0000ff"/><stop offset="1" stop-color="#7100ff"/></linearGradient><linearGradient id="g188" gradientUnits="userSpaceOnUse" x1="1128" x2="1270"><stop offset="0" stop-color="#0000ff"/><stop offset="0.09859" stop-color="#0600ff"/><stop offset="1" stop-color="#6e00ff"/></linearGradient><linearGradient id="g189" gradientUnits="userSpaceOnUse" x1="1130" x2="1268"><stop offset="0" stop-color="#0000ff"/><stop offset="1" stop-color="#6c00ff"/></linearGradient><linearGradient id="g190" gradientUnits="userSpaceOnUse" x1="1132" x2="1266"><stop offset="0" stop-color="#0000ff"/><stop offset="1" stop-color="#6900ff"/></linearGradient><linearGradient id="g191" gradientUnits="userSpaceOnUse" x1="1134" x2="1264"><stop offset="0" stop-color="#0000ff"/><stop offset="1" stop-color="#6700ff"/></linearGradient><linearGradient id="g192" gradientUnits="userSpaceOnUse" x1="1136" x2="1262"><stop offset="0" stop-color="#0100ff"/><stop offset="1" stop-color="#6400ff"/></linearGradient><linearGradient id="g193" gradientUnits="userSpaceOnUse" x1="1139" x2="1260"><stop offset="0" stop-color="#0300ff"/><stop offset="1" stop-color="#6200ff"/></linearGradient><linearGradient id="g194" gradientUnits="userSpaceOnUse" x1="1141" x2="1258"><stop offset="0" stop-color="#0400ff"/><stop offset="1" stop-color="#5f00ff"/></linearGradient><linearGradient id="g195" gradientUnits="userSpaceOnUse" x1="1143" x2="1256"><stop offset="0" stop-color="#0500ff"/><stop offset="1" stop-color="#5d00ff"/></linearGradient><linearGradient id="g196" gradientUnits="userSpaceOnUse" x1="1145" x2="1254"><stop offset="0" stop-color="#0600ff"/><stop offset="1" stop-color="#5b00ff"/></linearGradient><linearGradient id="g197" gradientUnits="userSpaceOnUse" x1="1147" x2="1252"><stop offset="0" stop-color="#0800ff"/><stop offset="1" stop-color="#5800ff"/></linearGradient><linearGradient id="g198" gradientUnits="userSpaceOnUse" x1="1150" x2="1250"><stop offset="0" stop-color="#0a00ff"/><stop offset="1" stop-color="#5600ff"/></linearGradient><linearGradient id="g199" gradientUnits="userSpaceOnUse" x1="1152" x2="1248"><stop offset="0" stop-color="#0b00ff"/><stop offset="1" stop-color="#5400ff"/></linearGradient><linearGradient id="g200" gradientUnits="userSpaceOnUse" x1="1154" x2="1246"><stop offset="0" stop-color="#0c00ff"/><stop offset="1" stop-color="#5100ff"/></linearGradient><linearGradient id="g201" gradientUnits="userSpaceOnUse" x1="1157" x2="1244"><stop offset="0" stop-color="#0e00ff"/><stop offset="1" stop-color="#4f00ff"/></linearGradient><linearGradient id="g202" gradientUnits="userSpaceOnUse" x1="1159" x2="1243"><stop offset="0" stop-color="#0f00ff"/><stop offset="1" stop-color="#4e00ff"/></linearGradient><linearGradient id="g203" gradientUnits="userSpaceOnUse" x1="1161" x2="1241"><stop offset="0" stop-color="#1000ff"/><stop offset="1" stop-color="#4c00ff"/></linearGradient><linearGradient id="g204" gradientUnits="userSpaceOnUse" x1="1164" x2="1239"><stop offset="0" stop-color="#1200ff"/><stop offset="1" stop-color="#4900ff"/></linearGradient><linearGradient id="g205" gradientUnits="userSpaceOnUse" x1="1166" x2="1237"><stop offset="0" stop-color="#1300ff"/><stop offset="1" stop-color="#4700ff"/></linearGradient><linearGradient id="g206" gradientUnits="userSpaceOnUse" x1="1169" x2="1235"><stop offset="0" stop-color="#1500ff"/><stop offset="1" stop-color="#4500ff"/></linearGradient><linearGradient id="g207" gradientUnits="userSpaceOnUse" x1="1171" x2="1233"><stop offset="0" stop-color="#1600ff"/><stop offset="1" stop-color="#4300ff"/></linearGradient><linearGradient id="g208" gradientUnits="userSpaceOnUse" x1="1174" x2="1231"><stop offset="0" stop-color="#1800ff"/><stop offset="1" stop-color="#4100ff"/></linearGradient><linearGradient id="g209" gradientUnits="userSpaceOnUse" x1="1176" x2="1229"><stop offset="0" stop-color="#1900ff"/><stop offset="1" stop-color="#3f00ff"/></linearGradient><linearGradient id="g210" gradientUnits="userSpaceOnUse" x1="1178" x2="1227"><stop offset="0" stop-color="#1a00ff"/><stop offset="1" stop-color="#3d00ff"/></linearGradient><linearGradient id="g211" gradientUnits="userSpaceOnUse" x1="1181" x2="1225"><stop offset="0" stop-color="#1c00ff"/><stop offset="1" stop-color="#3b00ff"/></linearGradient><linearGradient id="g212" gradientUnits="userSpaceOnUse" x1="1183" x2="1223"><stop offset="0" stop-color="#1d00ff"/><stop offset="1" stop-color="#3900ff"/></linearGradient><linearGradient id="g213" gradientUnits="userSpaceOnUse" x1="1185" x2="1221"><stop offset="0" stop-color="#1e00ff"/><stop offset="1" stop-color="#3700ff"/></linearGradient><linearGradient id="g214" gradientUnits="userSpaceOnUse" x1="1188" x2="1219"><stop offset="0" stop-color="#2000ff"/><stop offset="1" stop-color="#3500ff"/></linearGradient><linearGradient id="g215" gradientUnits="userSpaceOnUse" x1="1190" x2="1217"><stop offset="0" stop-color="#2100ff"/><stop offset="1" stop-color="#3300ff"/></linearGradient><linearGradient id="g216" gradientUnits="userSpaceOnUse" x1="1193" x2="1215"><stop offset="0" stop-color="#2200ff"/><stop offset="1" stop-color="#3100ff"/></linearGradient><linearGradient id="g217" gradientUnits="userSpaceOnUse" x1="1195" x2="1213"><stop offset="0" stop-color="#2300ff"/><stop offset="1" stop-color="#3000ff"/></linearGradient><linearGradient id="g218" gradientUnits="userSpaceOnUse" x1="1198" x2="1211"><stop offset="0" stop-color="#2500ff"/><stop offset="1" stop-color="#2e00ff"/></linearGradient><linearGradient id="g219" gradientUnits="userSpaceOnUse" x1="1201" x2="1210"><stop offset="0" stop-color="#2700ff"/><stop offset="1" stop-color="#2d00ff"/></linearGradient>
<clipPath id="loc"><path d="M1207.3,497.9 1207.3,497.9 1207.2,497.9 1207.1,497.9 1207.0,498.0 1206.9,498.1 1206.7,498.0 1206.5,498.0 1206.4,498.1 1206.3,498.3 1206.2,498.4 1206.1,498.4 1205.9,498.4 1205.6,498.4 1205.3,498.4 1205.0,498.4 1204.7,498.4 1204.3,498.3 1203.9,498.2 1203.4,498.0 1202.7,497.6 1201.8,497.0 1200.7,496.3 1199.5,495.5 1198.2,494.4 1196.6,493.2 1194.8,491.8 1192.7,490.1 1190.5,488.3 1188.0,486.1 1185.3,483.8 1182.3,481.3 1179.0,478.5 1175.3,475.5 1171.2,472.1 1166.8,468.4 1161.9,464.4 1156.7,460.0 1151.1,455.2 1145.0,449.7 1138.4,443.6 1131.5,436.9 1123.9,429.1 1115.4,419.6 1105.7,408.1 1095.0,394.6 1083.7,379.4 1071.9,362.6 1059.5,343.9 1046.8,323.7 1034.0,302.5 1021.3,280.6 1009.2,258.4 998.0,236.2 988.2,214.7 979.5,194.2 972.1,175.1 965.9,157.6 961.1,142.0 957.4,128.3 954.9,116.3 953.4,106.0 952.9,97.1 953.2,89.5 954.3,82.9 956.1,77.3 958.7,72.6 961.9,68.8 965.7,65.8 969.9,63.6 974.5,62.1 979.5,61.0 984.7,60.4 990.1,60.0 995.7,59.8 1001.4,59.7 1007.0,59.7 1012.7,59.8 1018.5,60.0 1024.4,60.2 1030.4,60.5 1036.6,61.0 1043.1,61.4 1049.7,62.0 1056.6,62.6 1063.8,63.3 1071.2,64.0 1078.9,64.8 1086.9,65.6 1095.3,66.5 1104.0,67.5 1113.1,68.5 1122.5,69.6 1132.4,70.7 1142.6,71.8 1153.3,73.0 1164.3,74.3 1175.8,75.6 1187.7,77.0 1200.1,78.4 1212.8,79.9 1225.9,81.4 1239.4,83.0 1253.2,84.6 1267.3,86.2 1281.7,87.8 1296.2,89.5 1310.9,91.2 1325.3,92.9 1339.4,94.5 1353.4,96.1 1367.3,97.7 1381.1,99.3 1394.2,100.8 1406.8,102.3 1418.8,103.6 1430.2,105.0 1441.0,106.2 1451.2,107.4 1460.8,108.5 1469.6,109.5 1477.9,110.5 1485.6,111.3 1492.8,112.2 1499.5,112.9 1505.8,113.7 1511.8,114.4 1517.4,115.0 1522.7,115.6 1527.6,116.2 1532.2,116.7 1536.4,117.2 1540.3,117.7 1543.8,118.1 1546.8,118.4 1549.6,118.7 1552.1,119.0 1554.4,119.3 1556.4,119.5 1558.3,119.7 1559.9,119.9 1561.2,120.1 1562.3,120.2 1563.3,120.3 1564.3,120.4 1565.2,120.5 1566.0,120.6 1566.7,120.7 1567.5,120.8 1568.2,120.9 1569.0,121.0 1569.7,121.0 1570.3,121.1 1570.9,121.2 1571.3,121.2 1571.6,121.3 1571.8,121.3 1572.0,121.3 1572.2,121.3 1572.3,121.4 1572.4,121.4Z"/></clipPath>
<clipPath id="plot"><rect x="952" y="49.8" width="599.3" height="460.7"/></clipPath>
</defs>
<g clip-path="url(#plot)"><g clip-path="url(#loc)"><rect x="980" y="59" width="56" height="2.5" fill="url(#g0)"/><rect x="971" y="61" width="89" height="2.5" fill="url(#g1)"/><rect x="966" y="63" width="114" height="2.5" fill="url(#g2)"/><rect x="963" y="65" width="136" height="2.5" fill="url(#g3)"/><rect x="960" y="67" width="157" height="2.5" fill="url(#g4)"/><rect x="959" y="69" width="176" height="2.5" fill="url(#g5)"/><rect x="957" y="71" width="196" height="2.5" fill="url(#g6)"/><rect x="956" y="73" width="214" height="2.5" fill="url(#g7)"/><rect x="955" y="75" width="232" height="2.5" fill="url(#g8)"/><rect x="954" y="77" width="251" height="2.5" fill="url(#g9)"/><rect x="953" y="79" width="269" height="2.5" fill="url(#g10)"/><rect x="953" y="81" width="286" height="2.5" fill="url(#g11)"/><rect x="952" y="83" width="305" height="2.5" fill="url(#g12)"/><rect x="952" y="85" width="322" height="2.5" fill="url(#g13)"/><rect x="952" y="87" width="340" height="2.5" fill="url(#g14)"/><rect x="952" y="89" width="357" height="2.5" fill="url(#g15)"/><rect x="951" y="91" width="375" height="2.5" fill="url(#g16)"/><rect x="951" y="93" width="392" height="2.5" fill="url(#g17)"/><rect x="951" y="95" width="410" height="2.5" fill="url(#g18)"/><rect x="951" y="97" width="427" height="2.5" fill="url(#g19)"/><rect x="951" y="99" width="445" height="2.5" fill="url(#g20)"/><rect x="952" y="101" width="461" height="2.5" fill="url(#g21)"/><rect x="952" y="103" width="478" height="2.5" fill="url(#g22)"/><rect x="952" y="105" width="496" height="2.5" fill="url(#g23)"/><rect x="952" y="107" width="513" height="2.5" fill="url(#g24)"/><rect x="952" y="109" width="530" height="2.5" fill="url(#g25)"/><rect x="953" y="111" width="547" height="2.5" fill="url(#g26)"/><rect x="953" y="113" width="564" height="2.5" fill="url(#g27)"/><rect x="953" y="115" width="581" height="2.5" fill="url(#g28)"/><rect x="954" y="117" width="598" height="2.5" fill="url(#g29)"/><rect x="954" y="119" width="598" height="2.5" fill="url(#g30)"/><rect x="954" y="121" width="598" height="2.5" fill="url(#g31)"/><rect x="955" y="123" width="597" height="2.5" fill="url(#g32)"/><rect x="955" y="125" width="597" height="2.5" fill="url(#g33)"/><rect x="956" y="127" width="596" height="2.5" fill="url(#g34)"/><rect x="956" y="129" width="596" height="2.5" fill="url(#g35)"/><rect x="957" y="131" width="595" height="2.5" fill="url(#g36)"/><rect x="957" y="133" width="595" height="2.5" fill="url(#g37)"/><rect x="958" y="135" width="594" height="2.5" fill="url(#g38)"/><rect x="958" y="137" width="594" height="2.5" fill="url(#g39)"/><rect x="959" y="139" width="593" height="2.5" fill="url(#g40)"/><rect x="959" y="141" width="593" height="2.5" fill="url(#g41)"/><rect x="960" y="143" width="592" height="2.5" fill="url(#g42)"/><rect x="961" y="145" width="590" height="2.5" fill="url(#g43)"/><rect x="961" y="147" width="588" height="2.5" fill="url(#g44)"/><rect x="962" y="149" width="585" height="2.5" fill="url(#g45)"/><rect x="962" y="151" width="583" height="2.5" fill="url(#g46)"/><rect x="963" y="153" width="580" height="2.5" fill="url(#g47)"/><rect x="964" y="155" width="577" height="2.5" fill="url(#g48)"/><rect x="964" y="157" width="575" height="2.5" fill="url(#g49)"/><rect x="965" y="159" width="572" height="2.5" fill="url(#g50)"/><rect x="966" y="161" width="569" height="2.5" fill="url(#g51)"/><rect x="966" y="163" width="567" height="2.5" fill="url(#g52)"/><rect x="967" y="165" width="564" height="2.5" fill="url(#g53)"/><rect x="968" y="167" width="561" height="2.5" fill="url(#g54)"/><rect x="968" y="169" width="559" height="2.5" fill="url(#g55)"/><rect x="969" y="171" width="557" height="2.5" fill="url(#g56)"/><rect x="970" y="173" width="554" height="2.5" fill="url(#g57)"/><rect x="971" y="175" width="551" height="2.5" fill="url(#g58)"/><rect x="971" y="177" width="549" height="2.5" fill="url(#g59)"/><rect x="972" y="179" width="546" height="2.5" fill="url(#g60)"/><rect x="973" y="181" width="543" height="2.5" fill="url(#g61)"/><rect x="974" y="183" width="540" height="2.5" fill="url(#g62)"/><rect x="974" y="185" width="538" height="2.5" fill="url(#g63)"/><rect x="975" y="187" width="535" height="2.5" fill="url(#g64)"/><rect x="976" y="189" width="532" height="2.5" fill="url(#g65)"/><rect x="977" y="191" width="529" height="2.5" fill="url(#g66)"/><rect x="978" y="193" width="526" height="2.5" fill="url(#g67)"/><rect x="978" y="195" width="524" height="2.5" fill="url(#g68)"/><rect x="979" y="197" width="521" height="2.5" fill="url(#g69)"/><rect x="980" y="199" width="518" height="2.5" fill="url(#g70)"/><rect x="981" y="201" width="515" height="2.5" fill="url(#g71)"/><rect x="982" y="203" width="513" height="2.5" fill="url(#g72)"/><rect x="983" y="205" width="510" height="2.5" fill="url(#g73)"/><rect x="983" y="207" width="508" height="2.5" fill="url(#g74)"/><rect x="984" y="209" width="505" height="2.5" fill="url(#g75)"/><rect x="985" y="211" width="502" height="2.5" fill="url(#g76)"/><rect x="986" y="213" width="499" height="2.5" fill="url(#g77)"/><rect x="987" y="215" width="496" height="2.5" fill="url(#g78)"/><rect x="988" y="217" width="493" height="2.5" fill="url(#g79)"/><rect x="989" y="219" width="490" height="2.5" fill="url(#g80)"/><rect x="990" y="221" width="487" height="2.5" fill="url(#g81)"/><rect x="990" y="223" width="485" height="2.5" fill="url(#g82)"/><rect x="991" y="225" width="482" height="2.5" fill="url(#g83)"/><rect x="992" y="227" width="479" height="2.5" fill="url(#g84)"/><rect x="993" y="229" width="476" height="2.5" fill="url(#g85)"/><rect x="994" y="231" width="473" height="2.5" fill="url(#g86)"/><rect x="995" y="233" width="470" height="2.5" fill="url(#g87)"/><rect x="996" y="235" width="468" height="2.5" fill="url(#g88)"/><rect x="997" y="237" width="465" height="2.5" fill="url(#g89)"/><rect x="998" y="239" width="462" height="2.5" fill="url(#g90)"/><rect x="999" y="241" width="459" height="2.5" fill="url(#g91)"/><rect x="1000" y="243" width="456" height="2.5" fill="url(#g92)"/><rect x="1001" y="245" width="453" height="2.5" fill="url(#g93)"/><rect x="1002" y="247" width="450" height="2.5" fill="url(#g94)"/><rect x="1003" y="249" width="447" height="2.5" fill="url(#g95)"/><rect x="1004" y="251" width="444" height="2.5" fill="url(#g96)"/><rect x="1005" y="253" width="441" height="2.5" fill="url(#g97)"/><rect x="1006" y="255" width="438" height="2.5" fill="url(#g98)"/><rect x="1007" y="257" width="435" height="2.5" fill="url(#g99)"/><rect x="1008" y="259" width="432" height="2.5" fill="url(#g100)"/><rect x="1009" y="261" width="429" height="2.5" fill="url(#g101)"/><rect x="1010" y="263" width="426" height="2.5" fill="url(#g102)"/><rect x="1011" y="265" width="423" height="2.5" fill="url(#g103)"/><rect x="1012" y="267" width="421" height="2.5" fill="url(#g104)"/><rect x="1013" y="269" width="418" height="2.5" fill="url(#g105)"/><rect x="1015" y="271" width="414" height="2.5" fill="url(#g106)"/><rect x="1016" y="273" width="411" height="2.5" fill="url(#g107)"/><rect x="1017" y="275" width="408" height="2.5" fill="url(#g108)"/><rect x="1018" y="277" width="405" height="2.5" fill="url(#g109)"/><rect x="1019" y="279" width="402" height="2.5" fill="url(#g110)"/><rect x="1020" y="281" width="399" height="2.5" fill="url(#g111)"/><rect x="1021" y="283" width="396" height="2.5" fill="url(#g112)"/><rect x="1022" y="285" width="393" height="2.5" fill="url(#g113)"/><rect x="1024" y="287" width="389" height="2.5" fill="url(#g114)"/><rect x="1025" y="289" width="386" height="2.5" fill="url(#g115)"/><rect x="1026" y="291" width="383" height="2.5" fill="url(#g116)"/><rect x="1027" y="293" width="380" height="2.5" fill="url(#g117)"/><rect x="1028" y="295" width="377" height="2.5" fill="url(#g118)"/><rect x="1029" y="297" width="374" height="2.5" fill="url(#g119)"/><rect x="1031" y="299" width="370" height="2.5" fill="url(#g120)"/><rect x="1032" y="301" width="368" height="2.5" fill="url(#g121)"/><rect x="1033" y="303" width="365" height="2.5" fill="url(#g122)"/><rect x="1034" y="305" width="362" height="2.5" fill="url(#g123)"/><rect x="1035" y="307" width="359" height="2.5" fill="url(#g124)"/><rect x="1036" y="309" width="356" height="2.5" fill="url(#g125)"/><rect x="1038" y="311" width="352" height="2.5" fill="url(#g126)"/><rect x="1039" y="313" width="349" height="2.5" fill="url(#g127)"/><rect x="1040" y="315" width="346" height="2.5" fill="url(#g128)"/><rect x="1041" y="317" width="343" height="2.5" fill="url(#g129)"/><rect x="1043" y="319" width="339" height="2.5" fill="url(#g130)"/><rect x="1044" y="321" width="336" height="2.5" fill="url(#g131)"/><rect x="1045" y="323" width="333" height="2.5" fill="url(#g132)"/><rect x="1046" y="325" width="330" height="2.5" fill="url(#g133)"/><rect x="1047" y="327" width="327" height="2.5" fill="url(#g134)"/><rect x="1049" y="329" width="323" height="2.5" fill="url(#g135)"/><rect x="1050" y="331" width="320" height="2.5" fill="url(#g136)"/><rect x="1051" y="333" width="318" height="2.5" fill="url(#g137)"/><rect x="1052" y="335" width="315" height="2.5" fill="url(#g138)"/><rect x="1054" y="337" width="311" height="2.5" fill="url(#g139)"/><rect x="1055" y="339" width="308" height="2.5" fill="url(#g140)"/><rect x="1056" y="341" width="305" height="2.5" fill="url(#g141)"/><rect x="1057" y="343" width="302" height="2.5" fill="url(#g142)"/><rect x="1059" y="345" width="298" height="2.5" fill="url(#g143)"/><rect x="1060" y="347" width="295" height="2.5" fill="url(#g144)"/><rect x="1061" y="349" width="292" height="2.5" fill="url(#g145)"/><rect x="1063" y="351" width="288" height="2.5" fill="url(#g146)"/><rect x="1064" y="353" width="285" height="2.5" fill="url(#g147)"/><rect x="1065" y="355" width="282" height="2.5" fill="url(#g148)"/><rect x="1067" y="357" width="278" height="2.5" fill="url(#g149)"/><rect x="1068" y="359" width="275" height="2.5" fill="url(#g150)"/><rect x="1069" y="361" width="272" height="2.5" fill="url(#g151)"/><rect x="1071" y="363" width="268" height="2.5" fill="url(#g152)"/><rect x="1072" y="365" width="266" height="2.5" fill="url(#g153)"/><rect x="1074" y="367" width="262" height="2.5" fill="url(#g154)"/><rect x="1075" y="369" width="259" height="2.5" fill="url(#g155)"/><rect x="1076" y="371" width="256" height="2.5" fill="url(#g156)"/><rect x="1078" y="373" width="252" height="2.5" fill="url(#g157)"/><rect x="1079" y="375" width="249" height="2.5" fill="url(#g158)"/><rect x="1081" y="377" width="245" height="2.5" fill="url(#g159)"/><rect x="1082" y="379" width="242" height="2.5" fill="url(#g160)"/><rect x="1084" y="381" width="238" height="2.5" fill="url(#g161)"/><rect x="1085" y="383" width="235" height="2.5" fill="url(#g162)"/><rect x="1086" y="385" width="232" height="2.5" fill="url(#g163)"/><rect x="1088" y="387" width="228" height="2.5" fill="url(#g164)"/><rect x="1089" y="389" width="225" height="2.5" fill="url(#g165)"/><rect x="1091" y="391" width="221" height="2.5" fill="url(#g166)"/><rect x="1092" y="393" width="218" height="2.5" fill="url(#g167)"/><rect x="1094" y="395" width="214" height="2.5" fill="url(#g168)"/><rect x="1096" y="397" width="210" height="2.5" fill="url(#g169)"/><rect x="1097" y="399" width="208" height="2.5" fill="url(#g170)"/><rect x="1099" y="401" width="204" height="2.5" fill="url(#g171)"/><rect x="1100" y="403" width="201" height="2.5" fill="url(#g172)"/><rect x="1102" y="405" width="197" height="2.5" fill="url(#g173)"/><rect x="1104" y="407" width="193" height="2.5" fill="url(#g174)"/><rect x="1105" y="409" width="190" height="2.5" fill="url(#g175)"/><rect x="1107" y="411" width="186" height="2.5" fill="url(#g176)"/><rect x="1108" y="413" width="183" height="2.5" fill="url(#g177)"/><rect x="1110" y="415" width="179" height="2.5" fill="url(#g178)"/><rect x="1112" y="417" width="175" height="2.5" fill="url(#g179)"/><rect x="1114" y="419" width="171" height="2.5" fill="url(#g180)"/><rect x="1115" y="421" width="168" height="2.5" fill="url(#g181)"/><rect x="1117" y="423" width="164" height="2.5" fill="url(#g182)"/><rect x="1119" y="425" width="160" height="2.5" fill="url(#g183)"/><rect x="1121" y="427" width="156" height="2.5" fill="url(#g184)"/><rect x="1123" y="429" width="152" height="2.5" fill="url(#g185)"/><rect x="1124" y="431" width="150" height="2.5" fill="url(#g186)"/><rect x="1126" y="433" width="146" height="2.5" fill="url(#g187)"/><rect x="1128" y="435" width="142" height="2.5" fill="url(#g188)"/><rect x="1130" y="437" width="138" height="2.5" fill="url(#g189)"/><rect x="1132" y="439" width="134" height="2.5" fill="url(#g190)"/><rect x="1134" y="441" width="130" height="2.5" fill="url(#g191)"/><rect x="1136" y="443" width="126" height="2.5" fill="url(#g192)"/><rect x="1139" y="445" width="121" height="2.5" fill="url(#g193)"/><rect x="1141" y="447" width="117" height="2.5" fill="url(#g194)"/><rect x="1143" y="449" width="113" height="2.5" fill="url(#g195)"/><rect x="1145" y="451" width="109" height="2.5" fill="url(#g196)"/><rect x="1147" y="453" width="105" height="2.5" fill="url(#g197)"/><rect x="1150" y="455" width="100" height="2.5" fill="url(#g198)"/><rect x="1152" y="457" width="96" height="2.5" fill="url(#g199)"/><rect x="1154" y="459" width="92" height="2.5" fill="url(#g200)"/><rect x="1157" y="461" width="87" height="2.5" fill="url(#g201)"/><rect x="1159" y="463" width="84" height="2.5" fill="url(#g202)"/><rect x="1161" y="465" width="80" height="2.5" fill="url(#g203)"/><rect x="1164" y="467" width="75" height="2.5" fill="url(#g204)"/><rect x="1166" y="469" width="71" height="2.5" fill="url(#g205)"/><rect x="1169" y="471" width="66" height="2.5" fill="url(#g206)"/><rect x="1171" y="473" width="62" height="2.5" fill="url(#g207)"/><rect x="1174" y="475" width="57" height="2.5" fill="url(#g208)"/><rect x="1176" y="477" width="53" height="2.5" fill="url(#g209)"/><rect x="1178" y="479" width="49" height="2.5" fill="url(#g210)"/><rect x="1181" y="481" width="44" height="2.5" fill="url(#g211)"/><rect x="1183" y="483" width="40" height="2.5" fill="url(#g212)"/><rect x="1185" y="485" width="36" height="2.5" fill="url(#g213)"/><rect x="1188" y="487" width="31" height="2.5" fill="url(#g214)"/><rect x="1190" y="489" width="27" height="2.5" fill="url(#g215)"/><rect x="1193" y="491" width="22" height="2.5" fill="url(#g216)"/><rect x="1195" y="493" width="18" height="2.5" fill="url(#g217)"/><rect x="1198" y="495" width="13" height="2.5" fill="url(#g218)"/><rect x="1201" y="497" width="9" height="2.5" fill="url(#g219)"/>
<path d="M940 40H1560V520H940Z M1400.4 108.8L1026.9 68.2L1126.2 389.3Z" fill="#000" fill-opacity=".4" fill-rule="evenodd"/>
</g><path d="M1207.3,497.9 1207.3,497.9 1207.2,497.9 1207.1,497.9 1207.0,498.0 1206.9,498.1 1206.7,498.0 1206.5,498.0 1206.4,498.1 1206.3,498.3 1206.2,498.4 1206.1,498.4 1205.9,498.4 1205.6,498.4 1205.3,498.4 1205.0,498.4 1204.7,498.4 1204.3,498.3 1203.9,498.2 1203.4,498.0 1202.7,497.6 1201.8,497.0 1200.7,496.3 1199.5,495.5 1198.2,494.4 1196.6,493.2 1194.8,491.8 1192.7,490.1 1190.5,488.3 1188.0,486.1 1185.3,483.8 1182.3,481.3 1179.0,478.5 1175.3,475.5 1171.2,472.1 1166.8,468.4 1161.9,464.4 1156.7,460.0 1151.1,455.2 1145.0,449.7 1138.4,443.6 1131.5,436.9 1123.9,429.1 1115.4,419.6 1105.7,408.1 1095.0,394.6 1083.7,379.4 1071.9,362.6 1059.5,343.9 1046.8,323.7 1034.0,302.5 1021.3,280.6 1009.2,258.4 998.0,236.2 988.2,214.7 979.5,194.2 972.1,175.1 965.9,157.6 961.1,142.0 957.4,128.3 954.9,116.3 953.4,106.0 952.9,97.1 953.2,89.5 954.3,82.9 956.1,77.3 958.7,72.6 961.9,68.8 965.7,65.8 969.9,63.6 974.5,62.1 979.5,61.0 984.7,60.4 990.1,60.0 995.7,59.8 1001.4,59.7 1007.0,59.7 1012.7,59.8 1018.5,60.0 1024.4,60.2 1030.4,60.5 1036.6,61.0 1043.1,61.4 1049.7,62.0 1056.6,62.6 1063.8,63.3 1071.2,64.0 1078.9,64.8 1086.9,65.6 1095.3,66.5 1104.0,67.5 1113.1,68.5 1122.5,69.6 1132.4,70.7 1142.6,71.8 1153.3,73.0 1164.3,74.3 1175.8,75.6 1187.7,77.0 1200.1,78.4 1212.8,79.9 1225.9,81.4 1239.4,83.0 1253.2,84.6 1267.3,86.2 1281.7,87.8 1296.2,89.5 1310.9,91.2 1325.3,92.9 1339.4,94.5 1353.4,96.1 1367.3,97.7 1381.1,99.3 1394.2,100.8 1406.8,102.3 1418.8,103.6 1430.2,105.0 1441.0,106.2 1451.2,107.4 1460.8,108.5 1469.6,109.5 1477.9,110.5 1485.6,111.3 1492.8,112.2 1499.5,112.9 1505.8,113.7 1511.8,114.4 1517.4,115.0 1522.7,115.6 1527.6,116.2 1532.2,116.7 1536.4,117.2 1540.3,117.7 1543.8,118.1 1546.8,118.4 1549.6,118.7 1552.1,119.0 1554.4,119.3 1556.4,119.5 1558.3,119.7 1559.9,119.9 1561.2,120.1 1562.3,120.2 1563.3,120.3 1564.3,120.4 1565.2,120.5 1566.0,120.6 1566.7,120.7 1567.5,120.8 1568.2,120.9 1569.0,121.0 1569.7,121.0 1570.3,121.1 1570.9,121.2 1571.3,121.2 1571.6,121.3 1571.8,121.3 1572.0,121.3 1572.2,121.3 1572.3,121.4 1572.4,121.4Z" fill="none" stroke="#262626" stroke-width="2.6"/></g>
<path d="M951.5 49.3H1551.8V511H951.5Z" fill="none" stroke="#9a9a9a" stroke-width="1.2"/>
<rect x="951.4" y="511" width="1.4" height="6" fill="#c8c8c8"/>
<text x="951.6" y="532.2" font-size="13.2" fill="#d6d6d6" text-anchor="middle">0</text>
<rect x="1001.2" y="511" width="1.4" height="6" fill="#c8c8c8"/>
<text x="1001.5" y="532.2" font-size="13.2" fill="#d6d6d6" text-anchor="middle">0,05</text>
<rect x="1051.1" y="511" width="1.4" height="6" fill="#c8c8c8"/>
<text x="1051.3" y="532.2" font-size="13.2" fill="#d6d6d6" text-anchor="middle">0,1</text>
<rect x="1101.0" y="511" width="1.4" height="6" fill="#c8c8c8"/>
<text x="1101.2" y="532.2" font-size="13.2" fill="#d6d6d6" text-anchor="middle">0,15</text>
<rect x="1150.8" y="511" width="1.4" height="6" fill="#c8c8c8"/>
<text x="1151.0" y="532.2" font-size="13.2" fill="#d6d6d6" text-anchor="middle">0,2</text>
<rect x="1200.6" y="511" width="1.4" height="6" fill="#c8c8c8"/>
<text x="1200.8" y="532.2" font-size="13.2" fill="#d6d6d6" text-anchor="middle">0,25</text>
<rect x="1250.5" y="511" width="1.4" height="6" fill="#c8c8c8"/>
<text x="1250.7" y="532.2" font-size="13.2" fill="#d6d6d6" text-anchor="middle">0,3</text>
<rect x="1300.3" y="511" width="1.4" height="6" fill="#c8c8c8"/>
<text x="1300.5" y="532.2" font-size="13.2" fill="#d6d6d6" text-anchor="middle">0,35</text>
<rect x="1350.2" y="511" width="1.4" height="6" fill="#c8c8c8"/>
<text x="1350.4" y="532.2" font-size="13.2" fill="#d6d6d6" text-anchor="middle">0,4</text>
<rect x="1400.0" y="511" width="1.4" height="6" fill="#c8c8c8"/>
<text x="1400.2" y="532.2" font-size="13.2" fill="#d6d6d6" text-anchor="middle">0,45</text>
<rect x="1449.9" y="511" width="1.4" height="6" fill="#c8c8c8"/>
<text x="1450.1" y="532.2" font-size="13.2" fill="#d6d6d6" text-anchor="middle">0,5</text>
<rect x="1499.8" y="511" width="1.4" height="6" fill="#c8c8c8"/>
<text x="1500.0" y="532.2" font-size="13.2" fill="#d6d6d6" text-anchor="middle">0,55</text>
<rect x="946" y="510.6" width="5.5" height="1.4" fill="#c8c8c8"/>
<text x="945.6" y="518.2" font-size="13.2" fill="#d6d6d6" text-anchor="end">0</text>
<rect x="946" y="473.1" width="5.5" height="1.4" fill="#c8c8c8"/>
<text x="945.6" y="479.2" font-size="13.2" fill="#d6d6d6" text-anchor="end">0,05</text>
<rect x="946" y="434.6" width="5.5" height="1.4" fill="#c8c8c8"/>
<text x="945.6" y="440.7" font-size="13.2" fill="#d6d6d6" text-anchor="end">0,1</text>
<rect x="946" y="396.2" width="5.5" height="1.4" fill="#c8c8c8"/>
<text x="945.6" y="402.3" font-size="13.2" fill="#d6d6d6" text-anchor="end">0,15</text>
<rect x="946" y="357.8" width="5.5" height="1.4" fill="#c8c8c8"/>
<text x="945.6" y="363.9" font-size="13.2" fill="#d6d6d6" text-anchor="end">0,2</text>
<rect x="946" y="319.4" width="5.5" height="1.4" fill="#c8c8c8"/>
<text x="945.6" y="325.5" font-size="13.2" fill="#d6d6d6" text-anchor="end">0,25</text>
<rect x="946" y="280.9" width="5.5" height="1.4" fill="#c8c8c8"/>
<text x="945.6" y="287.0" font-size="13.2" fill="#d6d6d6" text-anchor="end">0,3</text>
<rect x="946" y="242.5" width="5.5" height="1.4" fill="#c8c8c8"/>
<text x="945.6" y="248.6" font-size="13.2" fill="#d6d6d6" text-anchor="end">0,35</text>
<rect x="946" y="204.1" width="5.5" height="1.4" fill="#c8c8c8"/>
<text x="945.6" y="210.2" font-size="13.2" fill="#d6d6d6" text-anchor="end">0,4</text>
<rect x="946" y="165.6" width="5.5" height="1.4" fill="#c8c8c8"/>
<text x="945.6" y="171.7" font-size="13.2" fill="#d6d6d6" text-anchor="end">0,45</text>
<rect x="946" y="127.2" width="5.5" height="1.4" fill="#c8c8c8"/>
<text x="945.6" y="133.3" font-size="13.2" fill="#d6d6d6" text-anchor="end">0,5</text>
<rect x="946" y="88.8" width="5.5" height="1.4" fill="#c8c8c8"/>
<text x="945.6" y="94.9" font-size="13.2" fill="#d6d6d6" text-anchor="end">0,55</text>
<text x="1195.8" y="45.0" font-size="13" fill="#e6e6e6" textLength="79.2" lengthAdjust="spacingAndGlyphs">CIE 1976 u&#x27;v&#x27;</text>
<rect x="1104.8" y="118.7" width="12.6" height="12.6" fill="#fff" fill-opacity=".04" stroke="#fff" stroke-opacity=".92" stroke-width="1.4"/>
<rect x="1076.5" y="99.7" width="12.6" height="12.6" fill="#fff" fill-opacity=".04" stroke="#fff" stroke-opacity=".92" stroke-width="1.4"/>
<rect x="1053.9" y="84.4" width="12.6" height="12.6" fill="#fff" fill-opacity=".04" stroke="#fff" stroke-opacity=".92" stroke-width="1.4"/>
<rect x="1035.6" y="71.9" width="12.6" height="12.6" fill="#fff" fill-opacity=".04" stroke="#fff" stroke-opacity=".92" stroke-width="1.4"/>
<rect x="1020.5" y="61.8" width="12.6" height="12.6" fill="#fff" fill-opacity=".04" stroke="#fff" stroke-opacity=".92" stroke-width="1.4"/>
<rect x="1143.8" y="127.3" width="12.6" height="12.6" fill="#fff" fill-opacity=".04" stroke="#fff" stroke-opacity=".92" stroke-width="1.4"/>
<rect x="1145.2" y="112.3" width="12.6" height="12.6" fill="#fff" fill-opacity=".04" stroke="#fff" stroke-opacity=".92" stroke-width="1.4"/>
<rect x="1146.5" y="98.8" width="12.6" height="12.6" fill="#fff" fill-opacity=".04" stroke="#fff" stroke-opacity=".92" stroke-width="1.4"/>
<rect x="1147.6" y="86.7" width="12.6" height="12.6" fill="#fff" fill-opacity=".04" stroke="#fff" stroke-opacity=".92" stroke-width="1.4"/>
<rect x="1148.7" y="75.8" width="12.6" height="12.6" fill="#fff" fill-opacity=".04" stroke="#fff" stroke-opacity=".92" stroke-width="1.4"/>
<rect x="1122.9" y="147.1" width="12.6" height="12.6" fill="#fff" fill-opacity=".04" stroke="#fff" stroke-opacity=".92" stroke-width="1.4"/>
<rect x="1104.2" y="150.7" width="12.6" height="12.6" fill="#fff" fill-opacity=".04" stroke="#fff" stroke-opacity=".92" stroke-width="1.4"/>
<rect x="1086.6" y="153.7" width="12.6" height="12.6" fill="#fff" fill-opacity=".04" stroke="#fff" stroke-opacity=".92" stroke-width="1.4"/>
<rect x="1068.8" y="156.2" width="12.6" height="12.6" fill="#fff" fill-opacity=".04" stroke="#fff" stroke-opacity=".92" stroke-width="1.4"/>
<rect x="1051.1" y="159.7" width="12.6" height="12.6" fill="#fff" fill-opacity=".04" stroke="#fff" stroke-opacity=".92" stroke-width="1.4"/>
<rect x="1188.1" y="136.7" width="12.6" height="12.6" fill="#fff" fill-opacity=".04" stroke="#fff" stroke-opacity=".92" stroke-width="1.4"/>
<rect x="1236.6" y="129.1" width="12.6" height="12.6" fill="#fff" fill-opacity=".04" stroke="#fff" stroke-opacity=".92" stroke-width="1.4"/>
<rect x="1287.3" y="120.5" width="12.6" height="12.6" fill="#fff" fill-opacity=".04" stroke="#fff" stroke-opacity=".92" stroke-width="1.4"/>
<rect x="1340.0" y="111.6" width="12.6" height="12.6" fill="#fff" fill-opacity=".04" stroke="#fff" stroke-opacity=".92" stroke-width="1.4"/>
<rect x="1394.4" y="102.5" width="12.6" height="12.6" fill="#fff" fill-opacity=".04" stroke="#fff" stroke-opacity=".92" stroke-width="1.4"/>
<rect x="1160.8" y="157.4" width="12.6" height="12.6" fill="#fff" fill-opacity=".04" stroke="#fff" stroke-opacity=".92" stroke-width="1.4"/>
<rect x="1183.0" y="172.1" width="12.6" height="12.6" fill="#fff" fill-opacity=".04" stroke="#fff" stroke-opacity=".92" stroke-width="1.4"/>
<rect x="1206.2" y="187.8" width="12.6" height="12.6" fill="#fff" fill-opacity=".04" stroke="#fff" stroke-opacity=".92" stroke-width="1.4"/>
<rect x="1235.3" y="207.1" width="12.6" height="12.6" fill="#fff" fill-opacity=".04" stroke="#fff" stroke-opacity=".92" stroke-width="1.4"/>
<rect x="1269.4" y="229.9" width="12.6" height="12.6" fill="#fff" fill-opacity=".04" stroke="#fff" stroke-opacity=".92" stroke-width="1.4"/>
<rect x="1139.8" y="173.0" width="12.6" height="12.6" fill="#fff" fill-opacity=".04" stroke="#fff" stroke-opacity=".92" stroke-width="1.4"/>
<rect x="1136.5" y="208.5" width="12.6" height="12.6" fill="#fff" fill-opacity=".04" stroke="#fff" stroke-opacity=".92" stroke-width="1.4"/>
<rect x="1132.0" y="251.9" width="12.6" height="12.6" fill="#fff" fill-opacity=".04" stroke="#fff" stroke-opacity=".92" stroke-width="1.4"/>
<rect x="1127.3" y="306.6" width="12.6" height="12.6" fill="#fff" fill-opacity=".04" stroke="#fff" stroke-opacity=".92" stroke-width="1.4"/>
<rect x="1120.3" y="383.3" width="12.6" height="12.6" fill="#fff" fill-opacity=".04" stroke="#fff" stroke-opacity=".92" stroke-width="1.4"/>
<rect x="1141.8" y="144.5" width="12.6" height="12.6" fill="none" stroke="#000" stroke-width="1.6"/>
<circle cx="1112.2" cy="121.5" r="3.9" fill="#90bd89" stroke="#000" stroke-width="1"/>
<circle cx="1088.5" cy="103.2" r="3.9" fill="#75bd69" stroke="#000" stroke-width="1"/>
<circle cx="1067.5" cy="87.5" r="3.9" fill="#5ebd4a" stroke="#000" stroke-width="1"/>
<circle cx="1052.5" cy="74.2" r="3.9" fill="#4cbd24" stroke="#000" stroke-width="1"/>
<circle cx="1041.5" cy="65.5" r="3.9" fill="#18a618" stroke="#000" stroke-width="1"/>
<circle cx="1150.5" cy="131.5" r="3.9" fill="#bdbd9d" stroke="#000" stroke-width="1"/>
<circle cx="1152.5" cy="115.5" r="3.9" fill="#bdbd80" stroke="#000" stroke-width="1"/>
<circle cx="1153.5" cy="101.8" r="3.9" fill="#bdbd62" stroke="#000" stroke-width="1"/>
<circle cx="1154.5" cy="88.5" r="3.9" fill="#bdbd3a" stroke="#000" stroke-width="1"/>
<circle cx="1155.2" cy="76.8" r="3.9" fill="#bdbd00" stroke="#000" stroke-width="1"/>
<circle cx="1129.5" cy="153.5" r="3.9" fill="#a5bdbd" stroke="#000" stroke-width="1"/>
<circle cx="1112.2" cy="156.2" r="3.9" fill="#8ebdbd" stroke="#000" stroke-width="1"/>
<circle cx="1095.2" cy="158.2" r="3.9" fill="#74bdbc" stroke="#000" stroke-width="1"/>
<circle cx="1079.2" cy="161.5" r="3.9" fill="#59bdbd" stroke="#000" stroke-width="1"/>
<circle cx="1062.5" cy="162.5" r="3.9" fill="#30bdba" stroke="#000" stroke-width="1"/>
<circle cx="1195.5" cy="143.5" r="3.9" fill="#bd8f8f" stroke="#000" stroke-width="1"/>
<circle cx="1247.5" cy="135.5" r="3.9" fill="#bd6c6e" stroke="#000" stroke-width="1"/>
<circle cx="1307.5" cy="126.5" r="3.9" fill="#bd4b4f" stroke="#000" stroke-width="1"/>
<circle cx="1376.5" cy="117.5" r="3.9" fill="#bd202f" stroke="#000" stroke-width="1"/>
<circle cx="1449.5" cy="107.5" r="3.9" fill="#bd0000" stroke="#000" stroke-width="1"/>
<circle cx="1167.5" cy="164.5" r="3.9" fill="#bca3bd" stroke="#000" stroke-width="1"/>
<circle cx="1190.2" cy="182.5" r="3.9" fill="#ba86bd" stroke="#000" stroke-width="1"/>
<circle cx="1214.5" cy="201.2" r="3.9" fill="#b86abd" stroke="#000" stroke-width="1"/>
<circle cx="1246.2" cy="227.5" r="3.9" fill="#b540bd" stroke="#000" stroke-width="1"/>
<circle cx="1287.0" cy="259.5" r="3.9" fill="#b400bd" stroke="#000" stroke-width="1"/>
<circle cx="1144.5" cy="182.8" r="3.9" fill="#9495bd" stroke="#000" stroke-width="1"/>
<circle cx="1141.2" cy="221.5" r="3.9" fill="#7475bd" stroke="#000" stroke-width="1"/>
<circle cx="1136.5" cy="269.5" r="3.9" fill="#5758bd" stroke="#000" stroke-width="1"/>
<circle cx="1131.5" cy="328.2" r="3.9" fill="#3839bd" stroke="#000" stroke-width="1"/>
<circle cx="1121.5" cy="415.8" r="3.9" fill="#0c0c8c" stroke="#000" stroke-width="1"/>
<circle cx="1149.2" cy="150.6" r="3.8" fill="#fff" stroke="#000" stroke-width="1"/>
<circle cx="1161.5" cy="147.6" r="4.3" fill="#000"/>
<linearGradient id="ins" gradientUnits="userSpaceOnUse" x1="1330" y1="395" x2="1560" y2="510"><stop offset="0" stop-color="#a4ff00"/><stop offset=".22" stop-color="#c4ff00"/><stop offset=".47" stop-color="#ffff00"/><stop offset=".7" stop-color="#ffe400"/><stop offset="1" stop-color="#ffb400"/></linearGradient>
<rect x="1346" y="367.5" width="201.5" height="137.5" fill="#2e2e2e"/>
<rect x="1347.5" y="369.3" width="198.5" height="134" fill="url(#ins)"/>
<path d="M1347.5 376.8V369.3H1546V495.5Z" fill="#000" fill-opacity=".4"/>
<rect x="1347.7" y="369.5" width="198.2" height="133.7" fill="none" stroke="#7c7c7c" stroke-width="1.4"/>
<rect x="1438.7" y="429.7" width="12.6" height="12.6" fill="#fff" fill-opacity=".1" stroke="#fff" stroke-width="1.3"/>
<circle cx="1494" cy="387.5" r="3.9" fill="#baba10" stroke="#000" stroke-width="1"/>
<circle cx="1396.6" cy="493.4" r="3.9" fill="#bcbc58" stroke="#000" stroke-width="1"/>
<defs>
<linearGradient id="bar" x1="0" y1="0" x2="0" y2="1"><stop offset="0" stop-color="#4a4a4a"/><stop offset="1" stop-color="#2a2a2a"/></linearGradient>
<linearGradient id="tab" x1="0" y1="0" x2="0" y2="1"><stop offset="0" stop-color="#9d9d9d"/><stop offset="1" stop-color="#575757"/></linearGradient>
<linearGradient id="tab0" x1="0" y1="0" x2="0" y2="1"><stop offset="0" stop-color="#929292"/><stop offset="1" stop-color="#555"/></linearGradient>
<linearGradient id="tabs" x1="0" y1="0" x2="0" y2="1"><stop offset="0" stop-color="#1c1c1c"/><stop offset="1" stop-color="#262626"/></linearGradient>
<linearGradient id="btn" x1="0" y1="0" x2="0" y2="1"><stop offset="0" stop-color="#a2a2a2"/><stop offset="1" stop-color="#6b6b6b"/></linearGradient>
<linearGradient id="btn2" x1="0" y1="0" x2="0" y2="1"><stop offset="0" stop-color="#a8a8a8"/><stop offset="1" stop-color="#858585"/></linearGradient>
<linearGradient id="circ" x1="0" y1="0" x2="0" y2="1"><stop offset="0" stop-color="#6c6c6c"/><stop offset="1" stop-color="#a4a4a4"/></linearGradient>
<linearGradient id="lb1" x1="0" y1="0" x2="0" y2="1"><stop offset="0" stop-color="#9c9c9c"/><stop offset="1" stop-color="#828282"/></linearGradient>
<linearGradient id="lb2" x1="0" y1="0" x2="0" y2="1"><stop offset="0" stop-color="#8a8a8a"/><stop offset="1" stop-color="#686868"/></linearGradient>
</defs>
<rect x="0" y="785.8" width="1556" height="58.2" fill="url(#bar)"/>
<path d="M0 785.8H37.8a4 4 0 0 1 4 4V844H0Z" fill="url(#tab0)"/>
<circle cx="19.4" cy="794.5" r="7.4" fill="url(#circ)" opacity=".8"/>
<path d="M15.4 796.2h8l-4-4.4z" fill="#2a2a2a"/>
<rect x="2.2" y="812.3" width="34.8" height="29.6" rx="2.5" fill="#ffff00" stroke="#8a8a20" stroke-width=".8"/>
<path d="M48 844V789.8a4 4 0 0 1 4-4H193.8a4 4 0 0 1 4 4V844Z" fill="url(#tab)"/>
<rect x="53.8" y="791.6" width="139.4" height="35.2" rx="3" fill="#c2c2a2" stroke="#8a8a76" stroke-width="1"/>
<text x="123.0" y="842.0" font-size="10.8" fill="#1c1c1c" text-anchor="middle">20%</text>
<path d="M200 844V789.8a4 4 0 0 1 4-4H345.8a4 4 0 0 1 4 4V844Z" fill="url(#tab)"/>
<rect x="205.8" y="791.6" width="139.4" height="35.2" rx="3" fill="#c2c184" stroke="#8a8a76" stroke-width="1"/>
<text x="275.0" y="842.0" font-size="10.8" fill="#1c1c1c" text-anchor="middle">40%</text>
<path d="M352 844V789.8a4 4 0 0 1 4-4H497.8a4 4 0 0 1 4 4V844Z" fill="url(#tab)"/>
<rect x="357.8" y="791.6" width="139.4" height="35.2" rx="3" fill="#c3c062" stroke="#8a8a76" stroke-width="1"/>
<text x="427.0" y="842.0" font-size="10.8" fill="#1c1c1c" text-anchor="middle">60%</text>
<path d="M504 844V789.8a4 4 0 0 1 4-4H649.8a4 4 0 0 1 4 4V844Z" fill="url(#tab)"/>
<rect x="509.8" y="791.6" width="139.4" height="35.2" rx="3" fill="#c6c438" stroke="#8a8a76" stroke-width="1"/>
<text x="579.0" y="842.0" font-size="10.8" fill="#1c1c1c" text-anchor="middle">80%</text>
<path d="M656 844V789.8a4 4 0 0 1 4-4H801.8a4 4 0 0 1 4 4V844Z" fill="url(#tabs)"/>
<rect x="661.8" y="791.6" width="139.4" height="35.2" rx="3" fill="#c8c800" stroke="#151515" stroke-width="1"/>
<text x="731.0" y="842.0" font-size="10.8" fill="#fff" text-anchor="middle" font-weight="700">100%</text>
<path d="M1238.9 844V789.9a4 4 0 0 1 4-4H1283.1a4 4 0 0 1 4 4V844Z" fill="url(#lb2)"/>
<path d="M1238.9 804.2V789.9a4 4 0 0 1 4-4H1283.1a4 4 0 0 1 4 4V804.2Z" fill="url(#lb1)"/>
<rect x="1238.9" y="803.7" width="48.2" height="1.1" fill="#383838"/>
<circle cx="1263.2" cy="795.4" r="7.3" fill="url(#circ)" opacity=".75"/>
<path d="M1259.7 796.3h7.2l-3.6-4.1z" fill="#303030"/>
<rect x="1248.4" y="811.6" width="28.8" height="28.2" rx="4" fill="#a6a6a6" stroke="#2c2c2c" stroke-width="2.6"/>
<path d="M1249.7 826H1275.9V835a3.5 3.5 0 0 1 -3.5 3.5H1253.2a3.5 3.5 0 0 1 -3.5 -3.5Z" fill="#8c8c8c"/>
<rect x="1256.3" y="819.2" width="13.4" height="13.4" fill="#000"/>
<rect x="1256.3" y="819.2" width="13.4" height="6.8" fill="#1f1f1f"/>
<rect x="1287.1" y="785.9" width="270" height="58.1" fill="#333"/>
<rect x="1287.9" y="785.9" width="46.0" height="29.9" fill="url(#btn)"/>
<circle cx="1311.1" cy="801.2" r="10" fill="url(#circ)"/>
<rect x="1334.9" y="785.9" width="44.0" height="29.9" fill="url(#btn)"/>
<circle cx="1357.0" cy="801.2" r="10" fill="url(#circ)"/>
<rect x="1379.9" y="785.9" width="44.0" height="29.9" fill="url(#btn)"/>
<circle cx="1402.1" cy="801.2" r="10" fill="url(#circ)"/>
<rect x="1425.0" y="785.9" width="44.0" height="29.9" fill="url(#btn)"/>
<circle cx="1447.1" cy="801.2" r="10" fill="url(#circ)"/>
<rect x="1470.0" y="785.9" width="44.0" height="29.9" fill="url(#btn)"/>
<circle cx="1491.9" cy="801.2" r="10" fill="url(#circ)"/>
<rect x="1515.0" y="785.9" width="44.5" height="29.9" fill="url(#btn)"/>
<circle cx="1538.0" cy="801.2" r="10" fill="url(#circ)"/>
<rect x="1307.2" y="797.3" width="7.8" height="7.6" fill="#2e2e2e"/>
<path d="M1354.3 796.8V806.6L1362.8 801.7Z" fill="#2e2e2e"/>
<path d="M1399.5 796.6h-3.2v9.4h3.2M1404.7 796.6h3.2v9.4h-3.2" fill="none" stroke="#2e2e2e" stroke-width="1.7"/>
<rect x="1399.9" y="800.6" width="1.6" height="1.6" fill="#2e2e2e"/><rect x="1402.7" y="800.6" width="1.6" height="1.6" fill="#2e2e2e"/>
<path d="M1447.1 801.3c-2.1-3.6-6.7-3.4-6.7 0s4.6 3.6 6.7 0s6.7-3.4 6.7 0s-4.6 3.6-6.7 0z" fill="none" stroke="#2e2e2e" stroke-width="1.6"/>
<path d="M1487.3 800.7a4.6 4.6 0 0 1 8.2 -2.2M1496.5 801.9a4.6 4.6 0 0 1 -8.2 2.2" fill="none" stroke="#2e2e2e" stroke-width="1.9"/>
<path d="M1493.8 798.7l3.4 .4l-.4 -3.6z" fill="#2e2e2e" stroke="#2e2e2e" stroke-width=".8"/>
<path d="M1490 803.9l-3.4 -.4l.4 3.6z" fill="#2e2e2e" stroke="#2e2e2e" stroke-width=".8"/>
<path d="M1288 844V820a3 3 0 0 1 3-3H1424V844Z" fill="url(#btn2)"/>
<rect x="1425" y="817" width="132" height="27" fill="url(#btn2)"/>
<circle cx="1319.1" cy="832.1" r="10" fill="url(#circ)"/>
<circle cx="1532.2" cy="832.1" r="10" fill="url(#circ)"/>
<path d="M1318.6 827.6l-3.6 4.5l3.6 4.5M1323.2 827.6l-3.6 4.5l3.6 4.5" fill="none" stroke="#333" stroke-width="1.5"/>
<path d="M1528.2 827.6l3.6 4.5l-3.6 4.5M1532.8 827.6l3.6 4.5l-3.6 4.5" fill="none" stroke="#333" stroke-width="1.5"/>
<text x="1345.6" y="839.6" font-size="20.8" fill="#3c3c3c" textLength="50.4" lengthAdjust="spacingAndGlyphs" stroke="#3c3c3c" stroke-width=".55">Back</text>
<text x="1452.6" y="839.6" font-size="20.8" fill="#3c3c3c" textLength="51.4" lengthAdjust="spacingAndGlyphs" stroke="#3c3c3c" stroke-width=".55">Next</text>
</svg>
</body></html>
